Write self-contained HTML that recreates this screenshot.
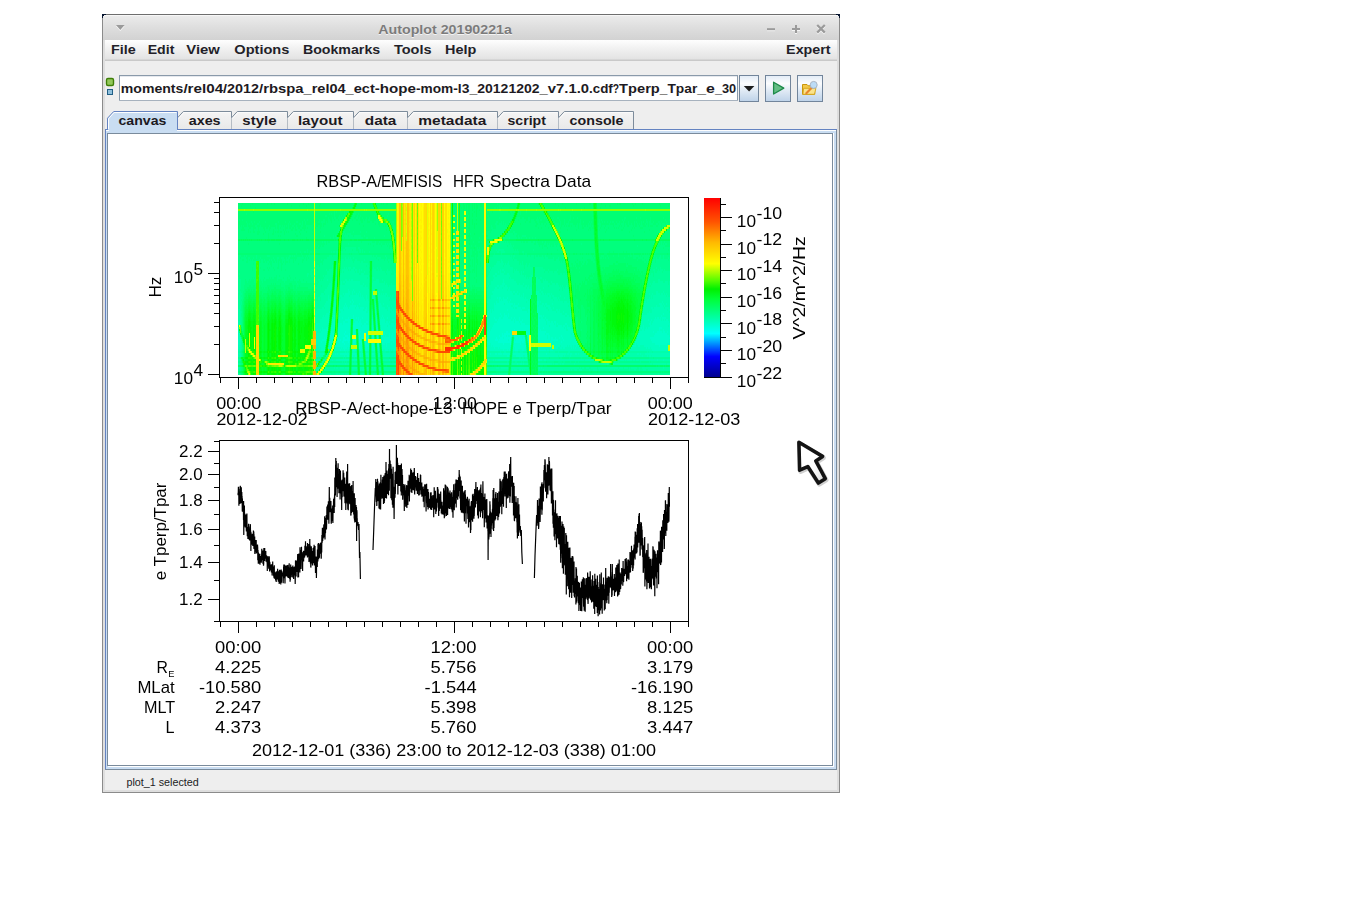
<!DOCTYPE html>
<html lang="en"><head><meta charset="utf-8"><title>Autoplot 20190221a</title>
<style>
html,body{margin:0;padding:0;background:#fff;}
body{width:1345px;height:916px;overflow:hidden;position:relative;font-family:"Liberation Sans",sans-serif;}
svg{position:absolute;left:0;top:0;display:block;}
svg text{font-family:"Liberation Sans",sans-serif;}
</style></head><body>
<svg width="1345" height="916" viewBox="0 0 1345 916">
<defs>
<linearGradient id="gTitle" x1="0" y1="0" x2="0" y2="1"><stop offset="0" stop-color="#ececec"/><stop offset="0.5" stop-color="#dedede"/><stop offset="1" stop-color="#d2d2d2"/></linearGradient>
<linearGradient id="gMenu" x1="0" y1="0" x2="0" y2="1"><stop offset="0" stop-color="#fefefe"/><stop offset="0.45" stop-color="#f1f1f1"/><stop offset="1" stop-color="#e3e3e3"/></linearGradient>
<linearGradient id="gBtn" x1="0" y1="0" x2="0" y2="1"><stop offset="0" stop-color="#e4edf7"/><stop offset="0.3" stop-color="#fbfcfe"/><stop offset="0.55" stop-color="#e3ecf6"/><stop offset="1" stop-color="#bfd3e9"/></linearGradient>
<linearGradient id="gTab" x1="0" y1="0" x2="0" y2="1"><stop offset="0" stop-color="#f4f4f4"/><stop offset="1" stop-color="#e9e9e9"/></linearGradient>
<linearGradient id="gCB" x1="0" y1="1" x2="0" y2="0">
<stop offset="0" stop-color="rgb(0,0,137)"/><stop offset="0.118" stop-color="rgb(0,0,255)"/><stop offset="0.247" stop-color="rgb(0,255,255)"/>
<stop offset="0.44" stop-color="rgb(0,255,55)"/><stop offset="0.494" stop-color="rgb(0,240,0)"/><stop offset="0.54" stop-color="rgb(83,252,0)"/>
<stop offset="0.635" stop-color="rgb(255,255,0)"/><stop offset="0.753" stop-color="rgb(255,185,0)"/><stop offset="0.867" stop-color="rgb(255,84,0)"/><stop offset="1" stop-color="rgb(255,0,0)"/>
</linearGradient>
<linearGradient id="gCur" x1="0" y1="0" x2="1" y2="1"><stop offset="0" stop-color="#fff"/><stop offset="0.6" stop-color="#fff"/><stop offset="1" stop-color="#d8d8d8"/></linearGradient>
<clipPath id="clipImg"><rect x="238" y="203" width="432" height="172"/></clipPath>
<clipPath id="clipP2"><rect x="220" y="441" width="468" height="180"/></clipPath>
<filter id="b1" x="-20%" y="-20%" width="140%" height="140%"><feGaussianBlur stdDeviation="0.6"/></filter>
<filter id="b2" x="-30%" y="-30%" width="160%" height="160%"><feGaussianBlur stdDeviation="1.5"/></filter>
<filter id="b4" x="-50%" y="-50%" width="200%" height="200%"><feGaussianBlur stdDeviation="4"/></filter>
<filter id="b8" x="-50%" y="-50%" width="200%" height="200%"><feGaussianBlur stdDeviation="8"/></filter>
</defs>
<g shape-rendering="crispEdges">
<rect x="102" y="14" width="738" height="779" fill="#8b8b8b"/>
<rect x="103" y="15" width="736" height="777" fill="#dedede"/>
<rect x="105" y="40" width="732" height="750" fill="#eeeeee"/>
<rect x="103" y="15" width="736" height="25" fill="url(#gTitle)"/>
<rect x="103" y="15" width="736" height="1" fill="#f7f7f7"/>
<rect x="102" y="14" width="738" height="1" fill="#6e6e6e"/>
<path d="M102 14h4v1h-2v1h-1v2h-1z" fill="#06142e"/>
<path d="M840 14h-4v1h2v1h1v2h1z" fill="#06142e"/>
<rect x="105" y="40" width="732" height="19" fill="url(#gMenu)"/>
<rect x="105" y="59" width="732" height="1" fill="#d6d6d6"/>
<rect x="105" y="60" width="732" height="1" fill="#c9c9c9"/>
</g>
<path d="M116 26h8.6l-4.3 5z" fill="#fbfbfb"/><path d="M116 25h8.6l-4.3 5z" fill="#9a9a9a"/>
<rect x="767" y="29.2" width="8" height="2" fill="#f6f6f6"/><rect x="767" y="28.2" width="8" height="2" fill="#9a9a9a"/>
<path d="M792 30h8M796 26v8" stroke="#f6f6f6" stroke-width="2" fill="none"/><path d="M792 29h8M796 25v8" stroke="#9a9a9a" stroke-width="2" fill="none"/>
<path d="M817.2 26l7.6 7.6M824.8 26l-7.6 7.6" stroke="#f6f6f6" stroke-width="2.2" fill="none"/><path d="M817.2 25l7.6 7.6M824.8 25l-7.6 7.6" stroke="#9a9a9a" stroke-width="2.2" fill="none"/>
<text x="378.3" y="34.6" font-size="13.3" font-weight="bold" fill="#f4f4f4" text-anchor="start" textLength="133.6" lengthAdjust="spacingAndGlyphs">Autoplot 20190221a</text>
<text x="378.3" y="33.6" font-size="13.3" font-weight="bold" fill="#7b7b7b" text-anchor="start" textLength="133.6" lengthAdjust="spacingAndGlyphs">Autoplot 20190221a</text>
<text x="111.0" y="54.0" font-size="13.3" font-weight="bold" fill="#231f29" text-anchor="start" textLength="24.7" lengthAdjust="spacingAndGlyphs">File</text>
<text x="147.7" y="54.0" font-size="13.3" font-weight="bold" fill="#231f29" text-anchor="start" textLength="26.7" lengthAdjust="spacingAndGlyphs">Edit</text>
<text x="186.3" y="54.0" font-size="13.3" font-weight="bold" fill="#231f29" text-anchor="start" textLength="33.5" lengthAdjust="spacingAndGlyphs">View</text>
<text x="234.3" y="54.0" font-size="13.3" font-weight="bold" fill="#231f29" text-anchor="start" textLength="55.1" lengthAdjust="spacingAndGlyphs">Options</text>
<text x="302.9" y="54.0" font-size="13.3" font-weight="bold" fill="#231f29" text-anchor="start" textLength="77.3" lengthAdjust="spacingAndGlyphs">Bookmarks</text>
<text x="393.9" y="54.0" font-size="13.3" font-weight="bold" fill="#231f29" text-anchor="start" textLength="37.7" lengthAdjust="spacingAndGlyphs">Tools</text>
<text x="445.1" y="54.0" font-size="13.3" font-weight="bold" fill="#231f29" text-anchor="start" textLength="31.3" lengthAdjust="spacingAndGlyphs">Help</text>
<text x="786.1" y="54.0" font-size="13.3" font-weight="bold" fill="#231f29" text-anchor="start" textLength="44.5" lengthAdjust="spacingAndGlyphs">Expert</text>
<rect x="106.5" y="78.5" width="7" height="7" rx="1.5" fill="#93c85a" stroke="#3f7f08" stroke-width="1.4"/>
<rect x="107.5" y="89.5" width="5" height="5" fill="#8fc0dc" stroke="#215f86" stroke-width="1"/>
<g shape-rendering="crispEdges">
<rect x="119" y="75" width="619" height="26" fill="#8a9aaa"/>
<rect x="120" y="76" width="617" height="24" fill="#ffffff"/>
<rect x="120" y="76" width="617" height="1" fill="#e6e9ee"/>
<rect x="119" y="100" width="619" height="1" fill="#a7b2be"/>
<rect x="739" y="75" width="20" height="27" fill="#72859b"/>
<rect x="740" y="76" width="18" height="25" fill="url(#gBtn)"/>
<rect x="765" y="75" width="26" height="27" fill="#72859b"/>
<rect x="766" y="76" width="24" height="25" fill="url(#gBtn)"/>
<rect x="797" y="75" width="26" height="27" fill="#72859b"/>
<rect x="798" y="76" width="24" height="25" fill="url(#gBtn)"/>
</g>
<path d="M743.8 86h10.6l-5.3 5.6z" fill="#1e1e1e"/>
<path d="M773.6 82.2v11.8l10.2-5.9z" fill="#63bd84" stroke="#1d8a49" stroke-width="1.3" stroke-linejoin="round"/>
<g><path d="M802.5 84.5h4.5l1.2 1.3h6.5v8.5h-12.2z" fill="#f3c94a" stroke="#c9960c" stroke-width="1"/><path d="M803.6 88.3h12.3l-1.4 6h-11.6z" fill="#fbe38a" stroke="#d4a417" stroke-width="0.9"/><path d="M806.3 93.3l5.2-5.4" stroke="#e8862b" stroke-width="2.1" stroke-linecap="round"/><circle cx="813.7" cy="84.9" r="3.5" fill="#bcdcf7" stroke="#a9b5c4" stroke-width="1"/></g>
<text x="120.8" y="92.6" font-size="13.3" font-weight="bold" fill="#1d1a22" text-anchor="start" textLength="62.6" lengthAdjust="spacingAndGlyphs">moments</text>
<text x="183.4" y="92.6" font-size="13.3" font-weight="bold" fill="#1d1a22" text-anchor="start" textLength="39.7" lengthAdjust="spacingAndGlyphs">/rel04</text>
<text x="223.1" y="92.6" font-size="13.3" font-weight="bold" fill="#1d1a22" text-anchor="start" textLength="36.0" lengthAdjust="spacingAndGlyphs">/2012</text>
<text x="259.1" y="92.6" font-size="13.3" font-weight="bold" fill="#1d1a22" text-anchor="start" textLength="44.5" lengthAdjust="spacingAndGlyphs">/rbspa</text>
<text x="303.6" y="92.6" font-size="13.3" font-weight="bold" fill="#1d1a22" text-anchor="start" textLength="42.0" lengthAdjust="spacingAndGlyphs">_rel04</text>
<text x="345.6" y="92.6" font-size="13.3" font-weight="bold" fill="#1d1a22" text-anchor="start" textLength="29.2" lengthAdjust="spacingAndGlyphs">_ect</text>
<text x="374.8" y="92.6" font-size="13.3" font-weight="bold" fill="#1d1a22" text-anchor="start" textLength="41.2" lengthAdjust="spacingAndGlyphs">-hope</text>
<text x="416.0" y="92.6" font-size="13.3" font-weight="bold" fill="#1d1a22" text-anchor="start" textLength="37.2" lengthAdjust="spacingAndGlyphs">-mom</text>
<text x="453.2" y="92.6" font-size="13.3" font-weight="bold" fill="#1d1a22" text-anchor="start" textLength="16.2" lengthAdjust="spacingAndGlyphs">-l3</text>
<text x="469.4" y="92.6" font-size="13.3" font-weight="bold" fill="#1d1a22" text-anchor="start" textLength="70.2" lengthAdjust="spacingAndGlyphs">_20121202</text>
<text x="539.6" y="92.6" font-size="13.3" font-weight="bold" fill="#1d1a22" text-anchor="start" textLength="49.4" lengthAdjust="spacingAndGlyphs">_v7.1.0</text>
<text x="589.0" y="92.6" font-size="13.3" font-weight="bold" fill="#1d1a22" text-anchor="start" textLength="23.8" lengthAdjust="spacingAndGlyphs">.cdf</text>
<text x="612.8" y="92.6" font-size="13.3" font-weight="bold" fill="#1d1a22" text-anchor="start" textLength="6.3" lengthAdjust="spacingAndGlyphs">?</text>
<text x="619.1" y="92.6" font-size="13.3" font-weight="bold" fill="#1d1a22" text-anchor="start" textLength="40.7" lengthAdjust="spacingAndGlyphs">Tperp</text>
<text x="659.8" y="92.6" font-size="13.3" font-weight="bold" fill="#1d1a22" text-anchor="start" textLength="37.5" lengthAdjust="spacingAndGlyphs">_Tpar</text>
<text x="697.3" y="92.6" font-size="13.3" font-weight="bold" fill="#1d1a22" text-anchor="start" textLength="17.6" lengthAdjust="spacingAndGlyphs">_e</text>
<text x="714.9" y="92.6" font-size="13.3" font-weight="bold" fill="#1d1a22" text-anchor="start" textLength="21.3" lengthAdjust="spacingAndGlyphs">_30</text>
<path d="M177.5 129.5V117.8l5.8-6.3H231.5V129.5Z" fill="url(#gTab)" stroke="none"/>
<path d="M177.5 117.8l5.8-6.3H231.5V129.5" fill="none" stroke="#7d8c9b" stroke-width="1"/>
<path d="M178.5 118.6l5.3-6.1H230.5" fill="none" stroke="#fbfbfb" stroke-width="1"/>
<path d="M231.5 129.5V117.8l5.8-6.3H287.5V129.5Z" fill="url(#gTab)" stroke="none"/>
<path d="M231.5 117.8l5.8-6.3H287.5V129.5" fill="none" stroke="#7d8c9b" stroke-width="1"/>
<path d="M232.5 118.6l5.3-6.1H286.5" fill="none" stroke="#fbfbfb" stroke-width="1"/>
<path d="M287.5 129.5V117.8l5.8-6.3H353.5V129.5Z" fill="url(#gTab)" stroke="none"/>
<path d="M287.5 117.8l5.8-6.3H353.5V129.5" fill="none" stroke="#7d8c9b" stroke-width="1"/>
<path d="M288.5 118.6l5.3-6.1H352.5" fill="none" stroke="#fbfbfb" stroke-width="1"/>
<path d="M353.5 129.5V117.8l5.8-6.3H407.5V129.5Z" fill="url(#gTab)" stroke="none"/>
<path d="M353.5 117.8l5.8-6.3H407.5V129.5" fill="none" stroke="#7d8c9b" stroke-width="1"/>
<path d="M354.5 118.6l5.3-6.1H406.5" fill="none" stroke="#fbfbfb" stroke-width="1"/>
<path d="M407.5 129.5V117.8l5.8-6.3H497.5V129.5Z" fill="url(#gTab)" stroke="none"/>
<path d="M407.5 117.8l5.8-6.3H497.5V129.5" fill="none" stroke="#7d8c9b" stroke-width="1"/>
<path d="M408.5 118.6l5.3-6.1H496.5" fill="none" stroke="#fbfbfb" stroke-width="1"/>
<path d="M497.5 129.5V117.8l5.8-6.3H558.5V129.5Z" fill="url(#gTab)" stroke="none"/>
<path d="M497.5 117.8l5.8-6.3H558.5V129.5" fill="none" stroke="#7d8c9b" stroke-width="1"/>
<path d="M498.5 118.6l5.3-6.1H557.5" fill="none" stroke="#fbfbfb" stroke-width="1"/>
<path d="M558.5 129.5V117.8l5.8-6.3H633.5V129.5Z" fill="url(#gTab)" stroke="none"/>
<path d="M558.5 117.8l5.8-6.3H633.5V129.5" fill="none" stroke="#7d8c9b" stroke-width="1"/>
<path d="M559.5 118.6l5.3-6.1H632.5" fill="none" stroke="#fbfbfb" stroke-width="1"/>
<g shape-rendering="crispEdges">
<rect x="105" y="129" width="732" height="641" fill="#7a8b9c"/>
<rect x="105" y="129" width="731" height="640" fill="#c9ddf2"/>
<rect x="105" y="129" width="1" height="640" fill="#6483c1"/>
<rect x="105" y="129" width="732" height="1" fill="#6483c1"/>
<rect x="106" y="130" width="730" height="1" fill="#fdfeff"/>
<rect x="107" y="133" width="726" height="633" fill="#7a8b9c"/>
<rect x="108" y="134" width="724" height="631" fill="#ffffff"/>
<rect x="833" y="133" width="1" height="634" fill="#ffffff"/>
<rect x="108" y="766" width="726" height="1" fill="#ffffff"/>
<rect x="106" y="131" width="1" height="638" fill="#c9ddf2"/>
</g>
<path d="M107.5 130V118.2l6.2-6.7H177.5V130" fill="#c9ddf2" stroke="#6483c1" stroke-width="1"/>
<path d="M108.5 130V118.8l5.6-6.3H176.5" fill="none" stroke="#fdfeff" stroke-width="1"/>
<rect x="108" y="129" width="69" height="3" fill="#c9ddf2"/>
<rect x="108" y="130" width="1" height="1" fill="#fdfeff"/>
<text x="118.5" y="124.6" font-size="13.3" font-weight="bold" fill="#1d1a22" text-anchor="start" textLength="47.9" lengthAdjust="spacingAndGlyphs">canvas</text>
<text x="188.7" y="124.6" font-size="13.3" font-weight="bold" fill="#1d1a22" text-anchor="start" textLength="31.9" lengthAdjust="spacingAndGlyphs">axes</text>
<text x="242.3" y="124.6" font-size="13.3" font-weight="bold" fill="#1d1a22" text-anchor="start" textLength="34.2" lengthAdjust="spacingAndGlyphs">style</text>
<text x="297.9" y="124.6" font-size="13.3" font-weight="bold" fill="#1d1a22" text-anchor="start" textLength="44.6" lengthAdjust="spacingAndGlyphs">layout</text>
<text x="364.8" y="124.6" font-size="13.3" font-weight="bold" fill="#1d1a22" text-anchor="start" textLength="31.6" lengthAdjust="spacingAndGlyphs">data</text>
<text x="418.3" y="124.6" font-size="13.3" font-weight="bold" fill="#1d1a22" text-anchor="start" textLength="68.0" lengthAdjust="spacingAndGlyphs">metadata</text>
<text x="507.5" y="124.6" font-size="13.3" font-weight="bold" fill="#1d1a22" text-anchor="start" textLength="38.4" lengthAdjust="spacingAndGlyphs">script</text>
<text x="569.6" y="124.6" font-size="13.3" font-weight="bold" fill="#1d1a22" text-anchor="start" textLength="53.9" lengthAdjust="spacingAndGlyphs">console</text>
<text x="126.4" y="785.6" font-size="10.6" fill="#1c1c24" text-anchor="start" textLength="72.4" lengthAdjust="spacingAndGlyphs">plot_1 selected</text>
<g opacity="0.999">
<g clip-path="url(#clipImg)">
<g shape-rendering="crispEdges" fill="none" stroke-width="1" transform="translate(0.5,0)">
<path stroke="rgb(0,255,116)" d="M238 203v6M238 211v18M238 253v2M238 325v2M239 203v6M239 211v8M239 221v4M239 253v2M239 371v2M240 203v6M240 211v16M240 253v2M240 357v2M241 203v2M241 207v2M241 211v14M241 229v2M241 253v2M241 361v2M242 205v4M242 211v8M242 221v10M242 253v2M242 341v2M242 363v2M242 367v4M242 373v2M243 203v6M243 211v14M243 227v4M243 253v2M243 299v6M244 203v6M244 211v16M244 229v2M244 253v2M244 293v4M245 203v6M245 211v16M245 253v2M245 289v4M246 203v6M246 211v2M246 215v6M246 223v4M246 237v2M246 253v2M246 289v2M247 203v6M247 211v12M247 253v2M247 287v4M248 203v6M248 211v16M248 229v4M248 243v2M248 253v2M248 287v2M249 203v6M249 211v12M249 225v4M249 253v2M249 285v4M250 203v2M250 207v2M250 211v18M250 231v2M250 253v2M250 285v6M251 203v6M251 211v10M251 223v4M251 253v2M251 287v2M252 205v4M252 211v12M252 225v2M252 253v2M252 287v4M253 203v6M253 213v20M253 253v2M253 285v4M254 203v6M254 211v10M254 223v6M254 231v2M254 253v2M254 285v4M255 203v4M255 211v14M255 227v2M255 253v2M255 287v4M256 203v6M256 211v14M256 253v2M257 203v6M257 211v12M257 225v2M257 231v4M257 253v2M258 203v6M258 211v12M258 225v10M258 253v2M259 203v6M259 211v10M259 223v4M259 231v2M259 253v2M259 287v6M260 203v6M260 211v14M260 253v2M260 285v6M261 203v6M261 211v16M261 253v2M261 287v4M262 203v6M262 211v16M262 253v2M262 289v6M263 203v6M263 211v18M263 233v2M263 253v2M263 287v6M264 203v6M264 211v20M264 253v2M264 289v4M265 203v6M265 211v10M265 223v4M265 231v2M265 253v2M265 287v6M266 203v6M266 211v18M266 253v2M266 287v6M267 205v4M267 211v18M267 253v2M267 285v6M268 203v6M268 211v16M268 233v6M268 241v2M268 253v2M268 285v2M269 203v6M269 211v14M269 227v4M269 253v2M269 285v4M270 203v6M270 211v18M270 253v2M270 285v6M271 205v4M271 211v16M271 253v2M271 283v6M272 203v6M272 211v16M272 233v2M272 253v2M272 285v4M273 203v6M273 211v16M273 229v6M273 253v2M273 283v6M274 205v4M274 211v16M274 253v2M274 285v2M275 203v6M275 211v12M275 225v4M275 231v2M275 253v2M275 283v4M276 203v6M276 211v12M276 253v2M276 285v4M277 203v6M277 211v18M277 231v2M277 253v2M277 285v4M278 203v6M278 211v10M278 223v10M278 235v2M278 253v2M278 285v4M279 203v6M279 211v14M279 243v2M279 253v2M279 285v4M280 203v6M280 211v14M280 227v2M280 231v2M280 235v2M280 253v2M280 283v6M281 203v6M281 211v16M281 231v2M281 253v2M281 287v4M282 203v6M282 211v14M282 253v2M282 287v4M283 203v6M283 211v16M283 229v2M283 253v2M283 287v6M284 203v6M284 211v14M284 231v4M284 253v2M284 289v6M285 203v6M285 211v10M285 223v8M285 253v2M285 285v6M286 203v6M286 211v14M286 227v2M286 231v2M286 253v2M286 285v4M287 205v4M287 211v18M287 253v2M287 285v6M288 203v6M288 211v12M288 231v2M288 253v2M288 285v2M289 203v6M289 211v10M289 223v6M289 253v2M289 283v4M290 203v6M290 211v12M290 225v4M290 253v2M290 283v6M291 203v2M291 207v2M291 211v16M291 229v2M291 253v2M291 283v6M292 203v6M292 211v14M292 227v4M292 253v2M292 285v4M293 203v6M293 211v14M293 227v2M293 253v2M293 289v2M294 203v6M294 211v12M294 225v2M294 253v2M294 285v6M295 203v6M295 211v20M295 233v2M295 253v2M295 285v6M296 203v6M296 211v10M296 223v2M296 229v2M296 235v2M296 289v4M297 203v6M297 211v10M297 223v4M297 235v2M297 253v2M297 287v4M298 203v6M298 211v18M298 253v2M298 287v4M299 203v2M299 207v2M299 211v12M299 225v4M299 231v2M299 253v2M299 285v6M300 203v6M300 211v12M300 225v2M300 229v2M300 233v2M300 253v2M300 287v4M301 203v6M301 211v14M301 229v2M301 287v4M302 203v6M302 211v10M302 227v2M302 253v2M302 287v4M303 205v4M303 211v18M303 253v2M303 287v6M304 203v6M304 211v8M304 221v10M304 253v2M304 287v4M305 203v6M305 211v10M305 225v4M305 253v2M305 287v4M306 203v2M306 207v2M306 211v14M306 231v2M306 237v2M306 253v2M306 287v4M307 203v6M307 211v8M307 221v4M307 227v2M307 253v2M307 287v4M308 205v4M308 211v14M308 253v2M308 289v2M309 203v6M309 211v14M309 289v2M310 203v6M310 211v14M310 253v2M310 289v4M311 203v6M311 211v14M311 253v2M311 289v2M312 203v6M312 211v14M312 229v2M312 233v2M312 253v2M312 287v2M313 203v6M313 211v6M313 219v4M313 225v2M313 253v2M313 287v4M315 203v6M315 211v12M315 227v2M315 253v2M316 203v6M316 211v16M316 253v2M317 203v6M317 211v16M317 253v2M318 203v6M318 211v10M318 223v2M318 253v2M319 203v2M319 207v2M319 211v8M319 223v2M319 253v2M320 205v4M320 211v18M320 231v2M320 367v2M321 203v6M321 211v10M321 223v4M322 203v6M322 211v10M323 203v6M323 211v8M323 223v4M324 203v6M324 211v8M324 223v2M324 357v2M325 203v6M325 211v4M325 217v8M326 203v6M326 211v4M326 217v4M327 203v6M327 211v12M327 333v2M328 203v6M328 211v6M328 325v2M329 203v6M329 211v2M329 215v4M329 337v2M330 203v6M330 211v10M330 365v2M331 203v6M331 211v2M331 215v8M331 293v2M331 365v2M332 203v6M332 211v6M332 279v2M332 313v2M332 365v2M333 203v6M333 211v8M333 261v2M334 203v6M334 219v2M334 365v2M335 203v6M335 211v6M335 277v2M335 315v2M335 365v2M336 203v6M336 213v6M336 261v2M336 289v2M337 203v6M337 211v8M337 259v2M337 365v2M338 203v6M338 211v6M338 219v2M338 365v2M339 203v6M339 211v4M339 291v2M339 365v2M340 203v6M340 211v6M340 267v2M340 365v2M341 203v6M341 211v4M341 217v2M341 245v2M341 365v2M342 203v6M342 211v6M342 365v2M343 203v6M343 211v4M343 217v2M343 365v2M344 203v6M344 365v2M345 203v6M345 211v4M345 365v2M346 203v6M346 211v2M346 365v2M347 203v6M347 211v2M347 365v2M348 203v6M348 365v2M349 203v6M349 359v2M350 203v6M350 333v2M351 203v6M351 217v2M351 371v2M352 203v4M352 215v2M352 219v2M352 333v2M352 365v2M353 203v2M353 365v2M354 211v2M354 217v2M354 365v2M355 211v2M355 215v4M355 365v2M356 207v2M356 211v6M356 219v2M356 341v2M356 365v2M357 203v6M357 211v4M357 219v2M357 367v2M358 203v6M358 211v2M358 215v4M358 341v2M359 203v6M359 211v6M359 223v2M360 203v6M360 211v4M360 217v4M360 365v2M361 205v4M361 211v12M361 365v2M362 203v6M362 211v6M362 219v4M362 345v2M362 365v2M363 203v6M363 211v8M363 225v2M363 365v2M364 203v6M364 211v10M364 345v2M365 203v6M365 211v8M366 203v6M366 211v6M366 367v2M367 203v6M367 211v12M367 365v2M368 203v6M368 211v8M368 221v2M368 371v2M369 203v6M369 211v6M369 221v2M369 303v18M370 203v6M370 211v10M371 203v6M371 211v10M371 319v6M371 371v2M372 205v4M372 211v12M372 365v2M373 207v2M373 211v12M373 323v2M373 365v2M374 211v4M374 217v4M374 305v2M374 337v2M374 365v2M375 213v8M375 223v2M375 321v2M375 353v2M375 365v2M376 203v2M376 215v4M376 337v2M377 203v4M377 219v2M377 293v2M377 351v2M378 203v6M378 219v6M378 307v2M379 203v6M379 221v6M379 319v2M379 345v2M379 365v2M380 203v6M380 211v2M381 205v4M381 211v4M382 203v6M382 211v6M382 355v2M383 205v4M383 211v6M383 225v2M383 367v2M384 203v6M384 211v8M385 203v6M385 211v8M385 223v4M386 205v4M386 211v8M386 223v2M386 229v2M386 365v2M387 205v4M387 211v4M387 217v2M388 203v6M388 211v2M388 215v6M389 203v6M389 211v10M390 203v6M390 211v12M390 253v2M391 203v6M391 211v12M392 203v6M392 211v10M392 223v4M392 249v2M393 203v6M393 211v10M394 203v6M394 211v14M394 235v2M395 203v6M395 211v14M451 203v4M451 209v2M451 213v34M451 249v8M451 287v4M453 203v2M453 207v8M453 217v4M453 223v4M453 229v4M453 235v4M453 241v4M453 247v4M453 253v2M453 259v2M453 289v2M454 205v10M454 217v4M454 223v4M454 229v4M454 235v4M454 241v4M454 249v2M454 253v2M454 259v2M454 289v2M455 207v24M455 233v2M455 237v8M455 247v2M455 251v2M455 259v2M455 287v4M456 205v2M456 209v6M456 217v14M456 235v2M456 241v2M456 247v2M456 253v2M456 289v2M457 253v2M457 259v2M457 265v2M457 271v2M457 277v2M458 205v2M458 211v20M458 235v2M458 241v2M458 247v2M458 253v2M458 259v2M458 265v2M460 203v2M460 207v30M460 239v2M460 243v4M460 287v4M461 203v4M461 209v38M461 251v4M461 287v4M462 203v46M462 259v2M462 287v4M463 225v2M463 229v2M463 235v2M463 239v30M463 283v6M464 203v2M464 209v2M464 215v2M464 221v2M464 227v2M464 233v2M464 239v2M464 245v2M464 251v2M464 257v2M464 287v2M465 203v8M465 215v2M465 221v2M465 227v2M465 233v2M465 239v2M465 245v2M465 251v2M465 287v2M466 227v48M466 277v4M466 283v6M467 205v10M467 217v38M467 287v2M468 215v4M468 221v6M468 229v6M468 237v48M469 231v2M469 241v2M469 245v44M470 203v30M470 235v14M470 259v2M470 265v2M470 271v2M470 287v4M471 203v34M471 239v6M471 247v2M471 255v2M471 289v2M472 211v2M472 217v2M472 225v32M472 259v8M472 269v4M472 285v4M473 203v38M473 243v6M473 251v6M473 269v2M473 287v2M474 209v2M474 213v10M474 229v4M474 235v12M474 249v24M474 277v2M474 285v4M475 203v42M475 247v4M475 253v2M475 287v6M476 217v2M476 221v2M476 225v38M476 265v12M476 279v4M476 287v2M477 203v2M477 209v38M477 251v6M477 259v6M477 287v4M478 203v38M478 243v6M478 287v4M479 203v6M479 211v26M479 239v2M479 243v4M479 251v2M479 287v4M480 207v12M480 221v32M480 255v4M480 261v6M480 287v2M481 207v34M481 243v10M481 255v2M481 287v4M482 203v30M482 235v12M482 251v4M482 267v2M482 273v2M482 289v2M483 203v30M483 235v14M483 251v2M483 255v2M483 287v4M486 225v2M486 231v4M486 237v4M486 243v10M486 263v24M487 203v6M487 213v2M487 217v2M487 365v2M488 203v6M488 211v4M488 245v2M489 203v6M489 213v4M489 257v2M490 203v6M491 203v6M491 247v2M492 203v6M492 211v2M492 365v2M493 203v6M494 203v4M494 365v2M495 203v4M495 365v2M496 203v6M496 365v2M497 205v2M498 203v6M498 365v2M499 203v2M499 365v2M500 203v4M500 365v2M501 203v2M501 207v2M501 365v2M502 203v4M502 365v2M503 203v4M503 365v2M504 203v4M504 239v2M504 365v2M505 203v4M505 365v2M506 203v4M506 365v2M507 203v4M507 365v2M508 203v4M508 211v2M508 365v2M509 203v6M509 211v2M509 361v4M510 203v6M510 213v2M510 353v2M510 369v4M511 203v6M511 365v2M512 203v6M512 211v2M512 365v2M513 203v6M513 213v2M513 223v2M513 365v2M514 203v6M514 211v2M514 365v2M515 203v6M515 221v2M515 365v2M516 203v4M516 217v2M516 365v2M517 215v2M517 365v2M518 211v2M518 215v2M518 219v2M518 365v2M519 211v6M519 365v2M520 205v4M520 215v4M520 223v2M520 365v2M521 203v6M521 211v8M521 365v2M522 203v6M522 211v6M522 365v2M523 203v6M523 211v6M523 365v2M524 203v6M524 211v8M524 365v2M525 203v6M525 211v8M525 221v2M525 337v2M525 365v2M526 203v6M526 213v8M526 345v2M526 365v2M527 203v6M527 211v10M527 341v2M527 353v2M527 365v2M528 203v6M528 211v6M528 349v2M529 203v6M529 211v6M529 221v2M529 357v2M529 369v4M530 203v6M530 211v12M531 203v6M531 211v8M532 203v6M532 211v8M533 203v6M533 211v8M534 203v6M534 211v10M535 203v6M535 211v12M535 225v2M536 203v6M536 211v8M536 221v6M537 203v6M537 211v6M537 223v2M538 205v4M538 211v8M538 227v2M538 365v2M539 205v4M539 211v6M539 219v4M540 207v2M540 211v8M540 221v4M540 365v2M541 211v8M541 221v2M541 227v2M541 365v2M542 211v12M542 365v2M543 203v2M543 213v12M544 203v4M544 219v4M544 365v2M545 203v6M545 215v8M545 225v2M545 365v2M546 203v6M546 219v2M546 223v2M546 365v2M547 203v6M547 219v2M547 253v2M548 203v6M548 211v2M548 221v2M548 227v2M549 203v6M549 211v4M549 223v2M550 203v6M550 211v6M551 203v6M551 211v8M551 227v2M551 253v2M552 203v6M552 211v8M553 203v6M553 211v6M553 219v2M554 203v6M554 211v10M554 223v2M555 205v4M555 211v12M556 203v6M556 211v12M557 203v6M557 211v6M557 219v4M558 203v2M558 207v2M558 211v6M558 219v4M558 225v2M559 203v6M559 211v8M559 221v4M560 203v6M560 211v10M560 227v2M560 231v2M561 203v6M561 211v16M561 253v2M562 205v4M562 211v14M563 203v6M563 211v14M564 203v6M564 211v8M564 225v2M565 203v4M565 211v14M565 263v2M566 203v6M566 211v12M566 225v2M567 203v6M567 211v12M567 229v2M567 253v4M567 277v2M568 203v6M568 211v10M568 225v2M568 253v2M568 257v4M569 203v6M569 211v8M569 221v6M569 255v2M569 261v2M569 295v2M570 203v6M570 211v4M570 221v2M570 253v2M570 267v6M571 203v6M571 211v12M571 225v2M571 253v2M571 263v2M571 267v2M571 271v10M572 203v6M572 211v12M572 253v2M572 263v26M573 203v6M573 211v6M573 219v6M573 267v18M574 203v6M574 211v14M574 265v30M574 301v8M575 203v6M575 211v16M575 253v2M575 261v2M575 267v16M575 305v2M575 313v2M575 319v2M576 205v4M576 211v14M576 229v2M576 263v4M576 269v20M576 299v18M577 203v6M577 211v6M577 219v4M577 253v2M577 259v2M577 263v22M577 299v6M577 307v10M578 203v6M578 211v18M578 253v2M578 265v20M578 309v2M578 313v24M579 203v6M579 211v12M579 253v2M579 261v6M579 269v2M579 273v10M579 285v6M579 309v30M580 203v6M580 211v8M580 261v22M580 285v2M580 319v2M580 323v8M580 337v2M581 203v6M581 211v14M581 253v2M581 263v2M581 267v18M581 305v16M581 323v6M581 331v12M582 203v6M582 211v18M582 257v2M582 261v2M582 265v16M582 305v40M583 203v6M583 211v10M583 223v2M583 227v2M583 253v2M583 265v18M583 307v38M584 203v4M584 211v16M584 253v2M584 263v18M584 309v36M585 203v6M585 211v16M585 253v2M585 261v16M585 281v4M585 317v26M586 203v6M586 211v14M586 265v14M586 281v4M586 315v6M586 325v8M586 335v2M586 339v4M587 203v6M587 211v16M587 253v2M587 259v2M587 263v16M588 203v6M588 211v12M588 229v2M588 259v18M588 279v2M589 205v4M589 211v10M589 223v2M589 227v2M589 253v2M589 259v16M590 205v4M590 211v12M590 227v4M590 253v2M590 259v16M590 277v2M591 203v6M591 211v10M591 223v4M591 261v12M591 277v2M591 371v2M592 203v6M592 211v6M592 219v6M592 227v2M592 255v2M592 261v14M592 277v2M593 229v6M593 257v2M593 263v10M593 275v2M594 249v2M594 253v4M594 259v2M594 263v10M595 263v8M597 203v4M597 371v2M598 203v6M598 211v12M598 225v2M598 237v2M599 203v6M599 211v8M599 229v2M600 203v4M600 211v12M600 227v2M600 255v2M600 259v6M601 205v4M601 211v8M601 221v6M601 259v12M602 203v6M602 211v10M602 223v2M602 257v10M602 269v2M603 203v6M603 211v14M603 259v8M604 203v6M604 211v10M604 223v2M604 227v2M604 253v16M605 203v2M605 207v2M605 211v16M605 231v2M605 253v4M605 259v8M606 203v6M606 211v14M606 229v2M606 253v14M607 203v6M607 211v10M607 223v2M607 257v10M608 203v6M608 211v14M608 227v2M608 255v2M608 259v8M609 203v2M609 207v2M609 211v12M609 251v2M609 255v10M609 363v2M609 371v2M610 203v2M610 207v2M610 211v10M610 223v2M610 255v10M611 203v6M611 211v14M611 255v10M612 203v6M612 211v10M612 223v2M612 255v10M613 203v6M613 211v10M613 223v4M613 251v2M613 257v6M614 203v6M614 211v12M614 227v2M614 255v8M615 203v6M615 211v14M615 255v10M616 203v6M616 211v10M616 223v2M616 227v2M616 255v6M616 263v2M617 205v4M617 211v12M617 255v6M617 263v2M618 203v6M618 211v12M618 227v2M618 253v2M618 257v6M619 205v4M619 211v10M619 225v2M619 255v8M620 205v4M620 211v14M620 255v8M621 203v6M621 211v12M621 225v2M621 229v2M621 255v8M622 203v6M622 211v8M622 221v2M622 229v2M622 255v8M623 203v6M623 211v10M623 227v2M623 251v2M623 255v8M624 203v6M624 211v6M624 221v6M624 255v2M624 259v4M625 203v6M625 211v6M625 219v4M625 255v8M626 203v6M626 211v14M626 251v2M626 255v12M627 203v6M627 211v16M627 255v8M627 265v2M628 203v6M628 211v10M628 225v2M628 257v8M629 203v6M629 211v14M629 231v2M629 255v10M630 203v6M630 211v14M630 253v2M630 257v8M631 203v6M631 211v12M631 229v2M631 257v8M632 205v4M632 211v14M632 227v2M632 255v12M633 203v2M633 207v2M633 211v16M633 235v2M633 253v2M633 259v8M634 203v6M634 211v10M634 227v2M634 259v8M634 269v2M635 205v4M635 211v16M635 259v8M636 203v6M636 211v6M636 219v2M636 223v4M636 257v10M637 203v6M637 211v12M637 257v2M637 261v10M638 203v6M638 211v14M638 259v10M639 203v6M639 211v12M639 225v2M639 255v2M639 259v12M640 203v6M640 211v6M640 219v6M640 227v2M640 259v14M641 203v6M641 211v10M641 227v2M641 253v4M641 259v12M641 273v2M642 205v4M642 211v14M642 227v2M642 261v10M643 203v6M643 211v10M643 223v4M643 257v2M643 261v14M644 203v6M644 211v16M644 231v2M644 253v2M644 263v10M645 203v6M645 211v12M645 225v2M645 259v2M645 263v10M646 203v6M646 211v8M646 223v2M646 253v2M646 261v8M646 287v2M647 203v6M647 211v10M648 203v6M648 211v16M648 253v2M649 203v6M649 211v10M649 229v2M650 203v6M650 211v6M650 225v2M651 203v6M651 211v12M651 225v2M652 203v6M652 211v12M652 225v2M653 203v6M653 211v10M653 223v2M654 203v6M654 211v14M655 203v6M655 211v14M656 203v6M656 211v12M656 225v2M656 365v2M657 203v6M657 211v12M657 225v2M658 203v6M658 211v10M658 223v2M658 365v2M659 205v4M659 211v10M659 365v2M660 203v2M660 207v2M660 211v12M661 203v6M661 211v10M661 223v6M662 203v6M662 211v12M663 203v6M663 211v6M663 219v4M663 365v2M664 203v6M664 211v12M665 203v6M665 211v8M665 221v4M665 365v2M666 203v6M666 211v10M667 203v6M667 211v12M667 253v2M668 203v2M668 207v2M668 211v14M669 203v6M669 211v8M669 221v4M669 365v2"/>
<path stroke="rgb(142,255,0)" d="M238 209v2M239 209v2M239 327v2M240 209v2M241 209v2M242 209v2M243 209v2M245 209v2M246 209v2M247 209v2M247 371v2M248 209v2M249 209v2M249 371v2M250 209v2M251 209v2M252 209v2M254 209v2M255 209v2M256 209v2M257 209v2M258 209v2M259 209v2M260 209v2M261 209v2M262 209v2M263 209v2M264 209v2M265 209v2M266 209v2M266 363v2M267 209v2M267 363v2M268 209v2M269 209v2M270 209v2M271 209v2M272 209v2M273 209v2M274 209v2M275 209v2M276 209v2M277 209v2M278 209v2M278 365v2M279 209v2M280 209v2M281 209v2M282 209v2M282 365v2M283 209v2M284 209v2M285 209v2M286 209v2M287 209v2M288 209v2M289 209v2M290 209v2M291 209v2M292 209v2M293 209v2M294 209v2M295 209v2M296 209v2M297 209v2M298 209v2M299 209v2M300 209v2M301 209v2M302 209v2M303 209v2M303 361v2M304 209v2M305 209v2M306 209v2M308 209v2M309 209v2M310 209v2M311 209v2M312 209v2M312 365v2M313 209v2M315 209v2M316 209v2M316 373v2M317 209v2M318 209v2M319 209v2M320 209v2M321 209v2M322 209v2M323 209v2M324 209v2M325 209v2M326 209v2M326 359v2M327 209v2M327 357v2M328 209v2M328 355v2M329 209v2M330 209v2M331 209v2M332 209v2M333 209v2M334 209v2M335 209v2M336 209v2M337 209v2M338 209v2M339 209v2M341 209v2M342 209v2M343 209v2M344 209v2M345 209v2M346 209v2M347 209v2M348 209v2M349 209v2M350 209v2M351 209v2M352 209v2M353 209v2M354 209v2M355 209v2M356 209v2M357 209v2M358 209v2M359 209v2M360 209v2M361 209v2M362 209v2M363 209v2M365 209v2M367 209v2M368 209v2M369 209v2M370 209v2M371 209v2M372 209v2M373 209v2M374 209v2M375 209v2M376 209v2M377 209v2M378 209v2M379 209v2M380 209v2M381 209v2M381 217v2M382 209v2M383 209v2M384 209v2M385 209v2M386 209v2M387 209v2M388 209v2M389 209v2M390 209v2M391 209v2M392 209v2M393 209v2M394 209v2M395 209v2M396 257v2M450 251v2M450 261v2M450 273v2M450 279v2M450 371v2M451 357v2M458 295v2M462 293v2M464 351v2M478 335v2M487 209v2M488 209v2M489 209v2M490 209v2M491 209v2M492 209v2M493 209v2M494 209v2M495 209v2M496 209v2M497 209v2M498 209v2M501 209v2M501 237v2M502 209v2M503 209v2M504 209v2M505 209v2M506 209v2M507 209v2M508 209v2M509 209v2M510 209v2M511 209v2M512 209v2M513 209v2M514 209v2M515 209v2M517 209v2M519 209v2M520 209v2M521 209v2M522 209v2M523 209v2M524 209v2M525 209v2M527 209v2M528 209v2M529 209v2M530 209v2M531 209v2M532 209v2M533 209v2M534 209v2M535 209v2M537 209v2M538 209v2M539 209v2M540 209v2M541 209v2M542 209v2M543 209v2M544 209v2M545 209v2M546 209v2M547 209v2M548 209v2M549 209v2M550 209v2M551 209v2M552 209v2M553 209v2M554 209v2M555 209v2M556 209v2M557 209v2M559 209v2M560 243v2M561 209v2M562 209v2M563 209v2M564 209v2M565 209v2M566 209v2M566 255v2M567 209v2M568 209v2M569 209v2M570 209v2M571 209v2M573 209v2M574 209v2M575 209v2M576 209v2M577 209v2M578 209v2M579 209v2M580 209v2M582 209v2M583 209v2M584 209v2M585 209v2M586 209v2M587 209v2M588 209v2M589 209v2M590 209v2M591 209v2M592 209v2M593 209v2M594 209v2M595 209v2M596 209v2M597 209v2M598 209v2M599 209v2M600 209v2M601 209v2M602 209v2M603 209v2M604 209v2M605 209v2M606 209v2M607 209v2M608 209v2M609 209v2M610 209v2M611 209v2M612 209v2M613 209v2M614 209v2M615 209v2M616 209v2M617 209v2M618 209v2M619 209v2M620 209v2M621 209v2M622 209v2M623 209v2M624 209v2M625 209v2M626 209v2M627 209v2M628 209v2M629 209v2M630 209v2M631 209v2M632 209v2M633 209v2M634 209v2M635 209v2M636 209v2M637 209v2M638 209v2M639 209v2M640 209v2M641 209v2M642 209v2M643 209v2M644 209v2M646 209v2M647 209v2M648 209v2M649 209v2M650 209v2M651 209v2M652 209v2M653 209v2M654 209v2M655 209v2M656 209v2M657 209v2M658 209v2M659 209v2M660 209v2M661 209v2M662 209v2M663 209v2M664 209v2M665 209v2M666 209v2M667 209v2M668 209v2M669 209v2"/>
<path stroke="rgb(0,255,125)" d="M238 229v10M238 241v12M238 371v2M239 219v2M239 225v14M239 241v12M240 227v12M240 241v12M240 257v2M240 335v2M241 225v4M241 231v8M241 241v12M241 255v2M241 325v2M241 369v2M241 373v2M242 219v2M242 231v8M242 241v12M242 255v2M242 259v2M242 301v30M242 345v2M242 349v2M242 353v4M243 225v2M243 231v8M243 241v12M243 255v2M243 259v2M243 291v8M244 227v2M244 231v8M244 241v12M244 285v8M245 227v12M245 241v12M245 255v2M245 279v10M246 213v2M246 221v2M246 227v10M246 241v12M246 257v2M246 261v2M246 281v8M247 223v16M247 241v12M247 255v8M247 283v4M248 227v2M248 233v6M248 241v2M248 245v8M248 255v2M248 281v6M249 223v2M249 229v10M249 241v12M249 255v2M249 259v2M249 279v6M250 229v2M250 233v6M250 241v12M250 255v4M250 281v4M251 221v2M251 227v12M251 241v12M251 255v6M251 279v8M252 223v2M252 227v12M252 241v12M252 255v4M252 267v4M252 277v10M253 233v6M253 241v12M253 255v2M253 259v2M253 263v2M253 279v6M254 221v2M254 229v2M254 233v6M254 241v12M254 255v6M254 277v2M254 283v2M255 225v2M255 229v10M255 241v12M255 255v6M255 279v8M256 225v14M256 241v12M256 259v2M257 223v2M257 227v4M257 235v4M257 241v12M257 255v6M258 223v2M258 235v4M258 241v12M258 255v6M259 221v2M259 227v4M259 233v6M259 241v12M259 255v4M259 281v6M260 225v14M260 241v12M260 255v2M260 259v4M260 267v2M260 279v6M261 227v12M261 241v12M261 255v4M261 281v6M262 227v12M262 241v12M262 255v4M262 283v6M263 229v4M263 235v4M263 241v12M263 255v8M263 269v2M263 279v8M264 231v8M264 241v12M264 255v4M264 261v2M264 269v2M264 277v2M264 281v8M265 221v2M265 227v4M265 233v6M265 241v12M265 255v6M265 281v6M266 229v10M266 241v12M266 255v8M266 279v8M267 229v10M267 241v12M267 257v4M267 267v2M267 279v6M268 227v6M268 243v10M268 257v4M268 263v2M268 269v2M268 279v6M269 225v2M269 231v8M269 241v12M269 257v2M269 261v2M269 267v2M269 277v8M270 229v10M270 241v12M270 255v10M270 279v6M271 227v12M271 241v12M271 255v4M271 261v6M271 277v6M272 227v6M272 235v4M272 241v12M272 255v6M272 279v6M273 227v2M273 235v4M273 241v12M273 255v2M273 259v4M273 267v2M273 279v4M274 227v12M274 241v12M274 255v4M274 261v2M274 269v2M274 277v8M275 223v2M275 229v2M275 233v6M275 241v12M275 255v6M275 277v6M276 223v16M276 241v12M276 255v8M276 275v10M277 229v2M277 233v6M277 241v12M277 255v2M277 267v2M277 281v4M278 221v2M278 233v2M278 237v2M278 241v12M278 255v2M278 259v10M278 279v6M279 225v14M279 241v2M279 245v8M279 255v6M279 275v2M279 279v6M280 225v2M280 229v2M280 233v2M280 237v2M280 241v12M280 255v8M280 279v4M281 227v4M281 233v6M281 241v12M281 255v2M281 259v12M281 279v8M282 225v14M282 241v12M282 255v2M282 263v2M282 281v6M283 227v2M283 231v8M283 241v12M283 255v2M283 261v2M283 277v2M283 281v6M284 225v6M284 235v4M284 241v12M284 255v4M284 283v6M285 221v2M285 231v8M285 241v12M285 255v10M285 269v2M285 281v4M286 225v2M286 229v2M286 233v6M286 241v12M286 255v2M286 261v2M286 281v4M287 229v10M287 241v12M287 255v4M287 261v2M287 277v8M288 223v8M288 233v6M288 241v12M288 255v2M288 279v6M289 221v2M289 229v10M289 241v12M289 259v4M289 275v2M289 279v4M290 223v2M290 229v10M290 241v12M290 257v2M290 277v2M290 281v2M291 227v2M291 231v8M291 241v12M291 255v4M291 281v2M292 225v2M292 231v8M292 241v12M292 257v2M292 281v4M293 225v2M293 229v10M293 241v12M293 255v8M293 279v10M294 223v2M294 227v12M294 241v12M294 257v2M294 281v4M295 231v2M295 235v4M295 241v12M295 255v6M295 277v2M295 281v4M296 221v2M296 225v4M296 231v4M296 237v2M296 241v18M296 283v6M297 221v2M297 227v8M297 237v2M297 241v12M297 255v2M297 281v2M297 285v2M298 229v10M298 241v12M298 255v2M298 263v2M298 281v6M299 223v2M299 229v2M299 233v6M299 241v12M299 255v2M299 279v6M300 223v2M300 227v2M300 231v2M300 235v4M300 241v10M300 255v2M300 281v6M301 225v4M301 231v8M301 241v16M301 283v4M302 221v6M302 229v10M302 241v12M302 259v4M302 283v4M303 229v10M303 241v12M303 255v2M303 259v2M303 279v2M303 283v4M304 219v2M304 231v8M304 241v10M304 255v4M304 283v4M305 221v4M305 229v10M305 241v10M305 255v2M305 283v4M306 225v6M306 233v4M306 241v12M306 257v4M306 281v6M307 219v2M307 225v2M307 229v10M307 241v8M307 255v2M307 283v4M308 225v14M308 241v12M308 257v2M308 283v6M309 225v14M309 241v14M309 283v6M310 225v14M310 241v10M310 283v6M311 225v14M311 241v10M311 283v6M312 225v4M312 231v2M312 235v4M312 241v12M312 283v4M313 217v2M313 223v2M313 227v12M313 241v10M313 283v4M315 223v4M315 229v10M315 241v8M316 227v12M316 241v8M316 371v2M317 227v12M317 241v6M318 221v2M318 225v14M318 241v4M318 247v2M319 219v4M319 225v14M319 241v8M320 229v2M320 233v6M320 241v6M320 253v2M321 221v2M321 227v12M321 241v4M321 253v2M322 221v18M322 243v4M322 253v2M322 371v2M323 219v4M323 227v12M323 241v6M323 253v2M323 355v2M323 371v2M324 219v4M324 225v10M324 237v2M324 243v2M324 253v2M324 351v2M324 371v2M325 215v2M325 225v14M325 253v2M325 371v2M326 215v2M326 221v18M326 241v4M326 253v2M326 371v2M327 223v16M327 253v2M327 363v2M327 371v2M328 217v22M328 241v2M328 253v2M328 371v2M329 213v2M329 219v20M329 241v2M329 253v2M329 315v2M329 371v2M330 221v16M330 253v2M330 305v2M330 371v2M331 213v2M331 223v16M331 253v2M331 371v2M332 217v22M332 253v2M332 277v2M333 219v16M333 253v2M333 303v2M334 211v8M334 221v18M334 253v2M334 291v2M334 371v2M335 217v18M335 237v2M335 253v2M335 313v2M336 211v2M336 219v16M336 263v2M336 287v2M337 219v14M337 257v2M338 217v2M338 221v8M338 231v2M338 315v2M339 215v10M339 227v4M339 293v2M339 371v2M340 217v6M341 215v2M341 219v4M342 217v4M343 215v2M343 235v2M344 211v6M344 229v2M344 233v2M344 237v2M345 227v6M346 213v2M346 225v10M347 225v8M348 223v10M348 235v2M348 371v2M349 221v8M349 231v2M349 253v2M350 219v14M350 331v2M351 219v16M351 253v2M351 367v4M352 217v2M352 221v14M353 213v18M353 233v4M354 213v4M354 219v16M355 213v2M355 219v16M356 217v2M356 221v14M356 343v2M357 215v4M357 221v14M357 369v2M358 213v2M358 219v16M358 339v2M359 217v6M359 225v10M359 253v2M359 357v4M360 215v2M360 221v10M360 233v2M360 253v2M361 223v14M361 241v2M361 253v2M362 217v2M362 223v14M362 253v2M363 219v6M363 227v12M363 253v2M363 359v4M364 221v14M364 237v2M364 253v2M364 373v2M365 219v20M365 253v2M365 355v2M366 217v14M366 233v4M366 253v2M367 223v14M367 253v2M368 219v2M368 223v16M368 243v2M368 253v2M369 217v4M369 223v16M369 253v2M369 261v2M369 267v2M369 271v2M369 275v2M369 283v20M370 221v18M370 243v2M370 253v2M371 221v18M371 253v2M371 325v6M371 357v2M371 361v2M372 223v16M372 241v2M372 253v2M372 309v2M373 223v16M373 241v2M373 245v2M373 253v2M373 371v2M374 215v2M374 221v16M374 241v2M374 253v2M375 221v2M375 225v14M375 253v2M375 297v2M375 355v4M375 371v2M376 219v20M376 241v4M376 253v2M376 309v2M377 221v18M377 241v4M377 253v2M377 321v2M378 225v14M378 241v2M378 253v2M378 305v2M379 227v12M379 243v2M379 253v2M380 223v16M380 241v4M380 253v2M380 359v4M381 223v16M381 241v2M381 245v2M381 253v2M381 343v2M381 373v2M382 223v16M382 241v4M382 253v2M383 223v2M383 227v12M383 241v4M383 253v2M384 223v12M384 237v2M384 241v4M384 253v2M384 371v2M385 227v12M385 241v2M385 253v2M385 371v2M386 225v4M386 231v8M386 241v4M386 253v2M386 371v2M387 215v2M387 225v14M387 241v2M387 245v2M387 253v2M387 371v2M388 213v2M388 227v12M388 241v4M388 253v2M388 371v2M389 231v8M389 241v2M389 245v4M389 253v2M389 371v2M390 235v4M390 241v2M390 245v2M390 371v2M391 223v2M391 241v6M391 253v2M391 371v2M392 221v2M392 253v2M392 371v2M393 221v10M393 371v2M394 225v10M394 371v2M395 225v14M395 241v2M395 371v2M451 247v2M451 257v26M453 255v2M453 261v2M453 265v4M453 271v4M453 277v4M454 247v2M454 255v2M454 261v2M454 265v4M454 271v4M454 277v4M454 285v2M455 231v2M455 235v2M455 245v2M455 249v2M455 253v6M455 261v20M455 285v2M456 259v2M456 265v2M456 271v2M456 277v2M458 271v2M458 277v2M458 283v2M460 237v2M460 241v2M460 247v32M460 283v4M461 247v4M461 255v32M462 249v10M462 261v26M463 269v14M464 263v2M464 269v2M464 275v2M464 281v2M465 257v2M465 263v2M465 269v2M465 275v2M465 281v2M466 275v2M466 281v2M467 255v32M468 285v2M470 233v2M470 249v10M470 261v4M470 267v4M470 273v14M471 237v2M471 245v2M471 249v6M471 257v32M472 257v2M472 267v2M472 273v12M473 241v2M473 249v2M473 257v12M473 271v16M474 273v4M474 279v6M475 245v2M475 251v2M475 255v32M476 263v2M476 277v2M476 283v4M477 247v4M477 257v2M477 265v22M478 241v2M478 249v38M479 237v2M479 241v2M479 247v4M479 253v34M480 253v2M480 259v2M480 267v20M481 241v2M481 253v2M481 257v30M482 233v2M482 247v4M482 255v12M482 269v4M482 275v14M483 233v2M483 249v2M483 253v2M483 257v30M487 211v2M487 215v2M487 219v12M487 235v2M487 371v2M488 215v16M488 371v2M489 211v2M489 217v14M489 371v2M490 211v22M490 371v2M491 211v14M491 229v2M491 371v2M492 213v14M492 371v2M493 211v18M493 371v2M494 207v2M494 211v18M494 371v2M495 207v2M495 211v12M495 225v4M495 371v2M496 211v10M497 203v2M497 207v2M497 211v10M497 223v2M498 211v14M499 205v4M499 211v6M499 219v4M500 207v2M500 211v12M501 205v2M501 211v10M502 207v2M502 211v14M503 207v2M503 211v10M504 207v2M504 211v14M505 207v2M505 211v12M506 207v2M506 211v16M507 207v2M507 211v16M508 207v2M508 213v12M509 213v8M510 211v2M510 215v6M510 231v2M510 351v2M511 211v8M511 227v6M511 343v2M511 359v4M512 213v4M512 225v8M512 349v2M513 211v2M513 225v6M513 233v2M513 253v2M513 339v2M514 223v8M515 219v2M515 223v10M516 219v14M516 235v2M517 217v22M518 213v2M518 217v2M518 221v14M519 217v20M519 253v2M520 211v4M520 219v4M520 225v14M520 253v2M521 219v18M521 241v2M521 253v2M522 217v18M522 237v2M522 253v2M523 217v18M523 237v2M523 241v2M524 219v16M524 237v2M524 241v2M524 253v2M525 219v2M525 223v12M525 237v2M526 211v2M526 221v16M526 241v2M527 221v18M527 241v2M527 253v2M528 217v22M528 253v2M528 363v2M529 217v4M529 223v14M529 253v2M530 223v16M530 253v2M531 219v20M531 241v2M531 253v2M532 219v18M532 241v2M532 253v2M533 219v20M533 253v2M534 221v18M534 243v2M534 253v2M535 223v2M535 227v10M535 241v4M535 253v2M536 219v2M536 227v12M536 253v2M537 217v6M537 225v14M537 241v2M537 253v2M538 219v8M538 229v10M538 241v4M538 253v2M539 217v2M539 223v16M539 241v6M539 253v2M540 219v2M540 225v14M540 241v4M540 253v2M540 371v2M541 219v2M541 223v4M541 229v10M541 241v4M541 253v2M541 371v2M542 223v16M542 243v6M542 253v2M543 225v14M543 241v4M543 253v2M543 371v2M544 215v4M544 223v16M544 241v2M544 245v2M544 253v2M544 371v2M545 223v2M545 227v12M545 245v2M545 253v2M546 217v2M546 221v2M546 225v14M546 241v6M546 253v2M546 371v2M547 221v18M547 241v2M547 247v2M548 223v4M548 229v10M548 241v4M548 253v2M548 371v2M549 225v14M549 241v2M549 253v2M549 371v2M550 225v14M550 241v6M550 253v2M551 229v10M551 241v4M551 371v2M552 219v2M552 229v10M552 241v6M552 253v2M553 217v2M553 221v2M553 231v8M553 241v6M553 253v2M553 371v2M554 221v2M554 233v6M554 241v2M554 253v2M554 371v2M555 223v4M555 235v4M555 241v4M555 253v2M555 371v2M556 223v6M556 237v2M556 241v6M556 253v2M556 371v2M557 217v2M557 223v8M557 241v4M557 249v2M557 253v2M557 371v2M558 217v2M558 223v2M558 227v6M558 241v2M558 253v2M558 371v2M559 219v2M559 225v10M559 243v4M559 253v2M559 371v2M560 221v6M560 229v2M560 233v4M560 253v2M560 371v2M561 227v12M561 371v2M562 225v14M562 253v2M562 371v2M563 225v14M563 241v2M563 371v2M564 219v6M564 227v12M564 241v6M564 371v2M565 225v14M565 241v2M565 245v4M565 371v2M566 223v2M566 227v12M566 241v12M566 371v2M567 223v6M567 231v8M567 241v2M567 245v8M567 371v2M568 221v4M568 227v12M568 241v12M568 255v2M568 371v2M569 219v2M569 227v12M569 241v2M569 245v8M569 257v4M569 263v2M569 371v2M570 215v6M570 223v16M570 241v12M570 255v12M570 371v2M571 223v2M571 227v12M571 241v12M571 255v8M571 265v2M571 269v2M571 371v2M572 223v16M572 241v12M572 255v8M572 325v2M572 371v2M573 217v2M573 225v14M573 241v12M573 255v12M573 371v2M574 225v14M574 241v12M574 255v10M574 309v2M574 371v2M575 227v12M575 241v12M575 255v6M575 263v4M575 371v2M576 225v4M576 231v8M576 241v12M576 255v8M576 267v2M576 317v12M576 371v2M577 217v2M577 223v16M577 241v12M577 255v4M577 261v2M577 317v16M577 371v2M578 229v10M578 241v12M578 255v10M578 371v2M579 223v16M579 241v12M579 255v6M579 267v2M579 271v2M579 371v2M580 219v20M580 241v12M580 255v6M580 371v2M581 225v14M581 241v2M581 245v8M581 255v8M581 265v2M581 321v2M581 329v2M581 371v2M582 229v10M582 241v12M582 255v2M582 259v2M582 263v2M582 371v2M583 221v2M583 225v2M583 229v10M583 241v12M583 255v10M583 371v2M584 227v12M584 241v12M584 255v8M584 371v2M585 227v12M585 241v12M585 255v6M585 371v2M586 225v14M586 241v12M586 255v10M586 371v2M587 227v12M587 241v12M587 255v4M587 261v2M587 371v2M588 223v6M588 231v8M588 241v12M588 255v4M588 371v2M589 221v2M589 225v2M589 229v10M589 241v12M589 255v4M589 371v2M590 223v4M590 231v8M590 241v12M590 255v4M590 357v2M590 371v2M591 221v2M591 227v12M591 241v12M591 255v6M592 217v2M592 225v2M592 229v10M592 241v12M592 257v4M592 371v2M593 235v4M593 241v12M593 255v2M593 259v4M593 371v2M594 251v2M594 257v2M594 261v2M594 371v2M595 371v2M596 371v2M598 223v2M598 227v10M598 371v2M599 219v10M599 231v8M599 241v12M599 371v2M600 223v4M600 229v10M600 241v12M600 257v2M600 371v2M601 219v2M601 227v12M601 241v12M601 255v4M601 371v2M602 221v2M602 225v14M602 241v12M602 255v2M602 371v2M603 225v14M603 241v12M603 255v4M603 371v2M604 221v2M604 225v2M604 229v10M604 241v12M604 371v2M605 227v4M605 233v6M605 241v12M605 257v2M605 371v2M606 225v4M606 231v8M606 241v12M606 371v2M607 221v2M607 225v14M607 241v12M607 255v2M607 371v2M608 225v2M608 229v10M608 241v12M608 257v2M608 371v2M609 223v16M609 241v10M610 221v2M610 225v14M610 241v12M610 371v2M611 225v14M611 241v12M611 371v2M612 221v2M612 225v14M612 241v12M612 371v2M613 221v2M613 227v12M613 241v10M613 255v2M613 371v2M614 223v4M614 229v10M614 241v12M614 371v2M615 225v14M615 241v12M615 371v2M616 221v2M616 225v2M616 229v10M616 241v12M616 371v2M617 223v16M617 241v12M617 371v2M618 223v4M618 229v10M618 241v12M618 255v2M618 371v2M619 221v4M619 227v12M619 241v12M619 371v2M620 225v14M620 241v12M620 371v2M621 223v2M621 227v2M621 231v8M621 241v12M621 371v2M622 219v2M622 223v6M622 231v8M622 241v12M622 371v2M623 221v6M623 229v10M623 241v10M623 371v2M624 217v4M624 227v12M624 241v12M624 257v2M624 371v2M625 217v2M625 223v16M625 241v12M625 371v2M626 225v14M626 241v10M626 371v2M627 227v12M627 241v12M627 371v2M628 221v4M628 227v12M628 241v12M628 255v2M628 371v2M629 225v6M629 233v6M629 241v12M629 371v2M630 225v14M630 241v12M630 255v2M630 371v2M631 223v6M631 231v8M631 241v12M631 255v2M631 371v2M632 225v2M632 229v10M632 241v12M632 371v2M633 227v8M633 237v2M633 241v12M633 255v4M633 371v2M634 221v6M634 229v10M634 241v12M634 255v4M634 341v2M634 371v2M635 227v12M635 241v12M635 255v4M635 339v2M635 371v2M636 217v2M636 221v2M636 227v12M636 241v12M636 255v2M636 371v2M637 223v16M637 241v4M637 247v6M637 255v2M637 259v2M637 371v2M638 225v14M638 241v12M638 255v4M638 371v2M639 223v2M639 227v12M639 241v12M639 257v2M639 371v2M640 217v2M640 225v2M640 229v10M640 241v12M640 255v4M640 371v2M641 221v6M641 229v10M641 241v12M641 257v2M641 371v2M642 225v2M642 229v10M642 241v12M642 255v6M642 311v2M642 371v2M643 221v2M643 227v12M643 241v12M643 255v2M643 259v2M643 371v2M644 227v4M644 233v6M644 241v12M644 255v8M644 371v2M645 223v2M645 227v12M645 241v12M645 255v4M645 261v2M645 371v2M646 219v4M646 225v14M646 241v12M646 255v6M646 371v2M647 221v18M647 241v12M647 255v10M647 371v2M648 227v12M648 241v12M648 255v6M648 277v2M648 371v2M649 221v8M649 231v8M649 241v12M649 255v2M649 371v2M650 217v8M650 227v12M650 241v12M650 371v2M651 223v2M651 227v12M651 241v10M651 371v2M652 223v2M652 227v12M652 241v6M652 371v2M653 221v2M653 225v14M653 371v2M654 225v14M654 241v2M654 253v2M654 371v2M655 225v14M655 253v2M655 371v2M656 223v2M656 227v10M656 247v2M656 253v2M656 371v2M657 223v2M657 227v8M657 245v2M657 253v2M657 371v2M658 221v2M658 225v8M658 245v2M658 253v2M658 371v2M659 221v12M659 241v2M659 245v2M659 253v2M659 371v2M660 223v8M660 241v4M660 253v2M660 371v2M661 221v2M661 237v2M661 253v2M662 223v6M662 235v4M662 241v4M662 253v2M662 371v2M663 217v2M663 223v4M663 235v4M663 241v2M663 247v2M663 253v2M664 223v4M664 233v6M664 243v2M664 253v2M664 371v2M665 219v2M665 225v2M665 231v8M665 241v2M665 245v2M665 253v2M665 371v2M666 221v4M666 231v8M666 241v2M666 245v2M666 253v2M666 371v2M667 223v2M667 229v10M667 241v6M667 371v2M668 229v10M668 241v6M668 249v2M668 253v2M668 371v2M669 219v2M669 229v10M669 241v6M669 253v2M669 371v2"/>
<path stroke="rgb(0,255,97)" d="M238 239v2M240 239v2M240 365v2M241 327v2M241 371v2M242 239v2M242 331v2M243 317v16M243 349v2M243 353v4M244 239v2M244 301v6M245 297v4M246 239v2M246 295v4M247 297v2M248 239v2M248 293v2M249 293v2M250 239v2M250 293v2M251 293v4M252 239v2M252 295v2M253 239v2M253 293v2M254 239v2M254 293v2M255 239v2M255 293v4M256 239v2M258 239v2M259 295v6M260 239v2M260 295v4M261 297v2M262 239v2M262 299v4M263 239v2M263 297v4M264 239v2M264 297v2M265 299v4M266 239v2M266 297v6M267 293v4M268 293v2M269 295v2M270 239v2M270 295v4M271 293v2M272 291v2M273 293v2M274 291v4M275 239v2M275 291v4M276 293v4M277 295v2M278 293v2M279 291v4M280 291v4M281 239v2M281 295v4M282 239v2M282 297v4M283 239v2M283 297v4M284 299v4M285 239v2M285 295v2M286 239v2M286 293v4M287 239v2M287 293v2M288 291v4M289 239v2M289 291v2M290 239v2M290 291v4M291 239v2M291 293v2M292 293v2M293 295v4M294 293v4M295 239v2M295 295v4M296 239v2M296 295v6M297 295v4M298 239v2M298 293v4M299 239v2M299 293v4M300 295v4M301 239v2M301 295v2M302 295v4M303 239v2M303 295v4M304 239v2M304 295v4M305 239v2M305 295v2M306 295v4M307 295v2M309 239v2M309 293v2M310 239v2M310 295v2M311 239v2M311 295v2M312 239v2M312 293v2M313 239v2M313 295v2M315 239v2M316 239v2M317 239v2M318 239v2M318 365v2M319 239v2M320 239v2M321 239v2M322 239v2M323 239v2M324 239v2M324 361v2M325 239v2M325 347v2M326 239v2M326 341v2M327 239v2M328 239v2M328 343v2M329 239v2M329 317v2M330 239v2M330 307v2M330 329v2M331 239v2M331 295v2M332 239v2M332 281v2M333 239v2M333 263v2M333 301v2M334 289v2M334 333v2M335 239v2M335 275v2M336 293v2M337 239v2M337 263v2M337 331v2M338 311v2M339 289v2M340 223v2M340 263v2M349 361v4M350 239v2M350 337v2M351 239v2M351 361v2M352 329v2M354 239v2M355 239v2M356 205v2M356 239v2M356 337v2M358 239v2M358 345v2M359 239v2M360 239v2M361 239v2M362 239v2M362 343v2M363 239v2M363 357v2M364 239v2M364 347v2M364 371v2M365 239v2M365 357v2M366 239v2M366 365v2M367 239v2M368 239v2M369 239v2M369 335v4M369 343v2M370 239v2M371 239v2M371 305v4M371 365v2M372 203v2M372 239v2M372 305v2M373 239v2M374 239v2M374 335v2M375 239v2M375 295v2M375 351v2M376 213v2M376 239v2M376 371v2M377 239v2M377 353v2M378 239v2M378 309v2M379 239v2M379 321v2M379 343v2M380 239v2M380 355v4M381 239v2M381 369v4M382 239v2M382 357v2M383 239v2M383 369v2M384 239v2M385 239v2M386 239v2M387 239v2M388 239v2M389 239v2M390 239v2M393 231v2M395 239v2M451 295v2M460 295v6M461 297v2M462 295v4M463 295v2M465 299v2M466 293v2M467 295v4M468 295v2M469 291v4M470 295v4M471 295v4M472 293v6M473 295v4M474 293v4M475 295v4M476 293v6M477 295v4M478 295v4M479 295v4M480 295v4M481 295v4M482 297v2M483 295v4M486 291v6M488 239v2M497 237v2M506 233v2M509 365v10M510 221v2M510 355v12M511 347v10M512 337v10M513 215v2M516 239v2M517 239v2M518 239v2M519 239v2M520 239v2M521 239v2M522 239v2M523 239v2M524 239v2M525 239v2M525 335v2M526 239v2M526 335v10M527 239v2M527 343v10M528 239v2M528 351v10M529 239v2M529 359v10M530 239v2M531 239v2M531 299v2M531 303v4M531 311v2M531 315v2M531 321v6M531 335v4M531 341v2M531 347v6M531 355v2M531 365v2M531 373v2M532 239v2M532 283v2M532 297v8M532 309v2M532 317v4M532 325v2M532 331v2M532 339v2M532 349v2M532 353v2M532 357v4M532 363v2M532 369v2M532 373v2M533 239v2M533 279v2M533 285v6M533 299v4M533 305v4M533 313v2M533 319v6M533 327v2M533 339v2M533 349v2M533 361v2M533 369v2M534 239v2M534 267v2M534 273v6M534 301v2M534 317v2M534 321v4M534 329v2M534 333v2M534 337v2M534 355v2M534 365v2M535 239v2M535 283v2M535 291v4M535 297v4M535 303v2M535 311v4M535 317v2M535 327v2M535 331v6M535 353v2M535 359v6M535 367v6M536 239v2M536 301v4M536 319v2M536 325v2M536 349v2M536 355v2M536 361v2M536 365v2M536 373v2M537 239v2M537 325v2M537 333v2M537 337v2M537 349v2M537 353v4M537 363v2M537 367v2M537 371v2M539 239v2M540 239v2M541 239v2M542 239v2M543 239v2M544 213v2M544 239v2M545 239v2M546 239v2M547 239v2M548 239v2M549 239v2M550 239v2M551 239v2M552 239v2M553 239v2M554 239v2M555 239v2M556 239v2M557 239v2M562 239v2M563 239v2M564 239v2M565 239v2M566 239v2M567 239v2M568 239v2M569 239v2M570 239v2M571 239v2M573 239v2M573 331v2M574 239v2M575 239v2M575 295v2M575 321v2M575 337v2M576 239v2M577 239v2M578 239v2M579 239v2M579 345v2M580 239v2M580 299v2M581 239v2M582 239v2M583 239v2M583 345v2M584 239v2M584 295v2M585 239v2M585 293v2M586 239v2M586 299v2M587 239v2M587 289v18M587 309v4M587 317v4M587 331v2M587 335v2M587 341v10M588 239v2M588 295v6M588 303v4M588 309v2M588 347v4M589 239v2M589 289v18M589 311v2M589 337v2M589 343v2M589 347v4M590 239v2M590 287v8M591 239v2M591 287v2M591 291v60M591 353v2M592 239v2M592 283v2M592 287v8M592 297v2M592 301v8M592 311v38M592 353v2M593 217v8M593 239v2M593 283v6M594 241v4M594 283v6M595 257v4M595 283v6M595 355v2M596 269v2M596 279v2M596 283v6M596 355v2M597 215v10M597 279v8M598 243v4M598 361v2M599 239v2M599 257v2M600 267v2M601 239v2M601 273v2M602 239v2M602 275v6M603 277v6M604 239v2M604 275v6M605 239v2M605 273v6M606 239v2M606 275v6M606 365v2M607 239v2M607 275v4M608 239v2M608 273v6M609 273v4M610 239v2M610 273v4M611 239v2M611 273v4M612 239v2M612 271v6M613 239v2M613 269v6M613 361v2M614 239v2M614 271v4M615 239v2M615 271v6M616 239v2M616 269v6M617 239v2M617 271v4M618 239v2M618 269v6M619 239v2M620 239v2M620 271v4M621 239v2M621 271v4M622 239v2M622 271v4M623 239v2M623 271v6M624 239v2M624 273v4M625 239v2M625 271v6M626 239v2M626 269v8M627 239v2M627 271v6M628 239v2M628 273v4M629 239v2M629 273v4M630 239v2M630 273v4M631 239v2M631 273v6M632 239v2M632 273v6M633 239v2M633 275v2M634 273v8M635 239v2M635 275v4M635 281v2M636 239v2M636 275v8M637 239v2M637 275v8M638 239v2M638 277v6M639 239v2M639 277v6M640 239v2M640 279v8M640 323v2M641 239v2M641 279v6M642 283v4M643 239v2M643 283v2M644 239v2M645 239v2M645 365v2M646 269v2M647 239v2M647 281v2M648 239v2M649 239v2M650 239v2M650 253v2M650 267v2M651 239v2M652 239v2M653 239v2M654 239v2M655 249v2M660 239v2M661 239v2M662 239v2M663 239v2M664 239v2M665 239v2M666 239v2M667 239v2M668 239v2M669 239v2"/>
<path stroke="rgb(0,255,134)" d="M238 255v22M239 255v18M239 275v4M240 255v2M240 259v20M240 289v2M240 361v2M241 257v36M241 295v2M241 299v2M241 305v6M241 313v4M241 351v2M241 363v2M241 367v2M242 257v2M242 261v40M242 343v2M242 347v2M243 257v2M243 261v30M244 255v30M245 257v22M246 255v2M246 259v2M246 263v18M247 263v20M248 257v24M249 257v2M249 261v18M250 259v22M251 261v18M252 259v8M252 271v6M253 257v2M253 261v2M253 265v14M254 261v16M254 279v4M255 261v18M256 255v4M259 259v22M260 257v2M260 263v4M260 269v10M261 259v22M262 259v24M263 263v6M263 271v8M264 259v2M264 263v6M264 271v6M264 279v2M265 261v20M266 263v16M267 255v2M267 261v6M267 269v10M268 255v2M268 261v2M268 265v4M268 271v8M269 255v2M269 259v2M269 263v4M269 269v8M270 265v14M271 259v2M271 267v10M272 261v18M273 257v2M273 263v4M273 269v10M274 259v2M274 263v6M274 271v6M275 261v16M276 263v12M277 257v10M277 269v12M278 257v2M278 269v10M279 261v14M279 277v2M280 263v16M281 257v2M281 271v8M282 257v6M282 265v16M283 257v4M283 263v14M283 279v2M284 259v24M285 265v4M285 271v10M286 257v4M286 263v18M287 259v2M287 263v14M288 257v22M289 255v4M289 263v12M289 277v2M290 255v2M290 259v18M290 279v2M291 259v22M292 255v2M292 259v22M293 263v16M294 255v2M294 259v22M295 261v16M295 279v2M296 259v24M297 257v24M297 283v2M298 257v6M298 265v16M299 257v22M300 251v2M300 257v24M301 257v26M302 255v4M302 263v20M303 257v2M303 261v18M303 281v2M304 251v2M304 259v24M305 251v2M305 257v26M306 255v2M306 261v20M307 249v4M307 257v16M307 277v6M308 255v2M308 259v14M308 275v8M309 255v28M310 251v2M310 255v16M310 275v8M311 251v2M311 255v14M311 277v6M312 255v14M312 271v4M312 277v6M313 251v2M313 255v18M313 277v6M315 249v4M315 255v10M316 249v4M316 255v12M317 247v6M317 255v10M317 269v2M318 245v2M318 249v4M318 255v10M319 249v4M319 255v12M320 247v6M320 255v8M321 245v8M321 255v4M321 261v2M322 241v2M322 247v6M322 255v10M323 247v6M323 255v6M324 235v2M324 241v2M324 245v8M324 255v4M325 241v12M325 255v4M326 245v8M326 255v4M326 357v2M327 241v12M327 255v2M328 243v10M328 255v2M328 353v2M329 243v10M330 237v2M330 241v12M330 331v2M331 241v10M331 291v2M331 323v2M331 345v2M332 241v12M332 255v2M332 371v2M333 235v4M333 241v10M333 371v2M334 241v10M335 235v2M335 241v12M335 279v2M335 371v2M336 237v2M336 241v10M336 253v2M336 371v2M337 237v2M337 241v10M337 253v4M337 371v2M338 229v2M338 371v2M339 295v2M340 269v2M340 371v2M341 247v4M341 253v2M341 371v2M342 235v4M342 241v10M342 253v2M342 371v2M343 231v4M343 237v2M343 241v8M343 253v2M343 371v2M344 231v2M344 235v2M344 241v8M344 253v2M344 371v2M345 233v6M345 241v6M345 249v2M345 253v2M345 371v2M346 235v4M346 241v6M346 253v2M346 371v2M347 233v6M347 241v6M347 253v2M347 371v2M348 233v2M348 237v2M348 241v2M348 245v2M348 253v2M349 229v2M349 233v6M349 241v6M349 355v2M350 233v6M350 241v6M350 253v2M350 329v2M351 235v4M351 241v6M351 373v2M352 235v4M352 241v6M352 249v2M352 253v2M352 371v2M353 231v2M353 237v2M353 241v6M353 253v2M353 371v2M354 235v4M354 241v6M354 253v2M354 371v2M355 235v4M355 241v6M355 253v2M355 371v2M356 235v4M356 241v10M356 253v2M356 371v2M357 235v4M357 241v10M357 253v2M357 373v2M358 235v4M358 241v6M358 249v6M358 337v2M359 235v4M359 241v6M360 231v2M360 235v4M360 241v8M360 371v2M361 237v2M361 243v10M361 371v2M362 237v2M362 241v8M362 347v2M362 371v2M363 241v12M363 371v2M364 235v2M364 241v10M364 343v2M365 241v12M366 231v2M366 237v2M366 241v12M367 237v2M367 241v12M367 371v2M368 241v2M368 245v8M369 241v10M369 263v4M369 269v2M369 273v2M369 277v6M370 241v2M370 245v8M371 241v12M371 335v4M371 351v2M372 243v10M372 255v2M372 261v8M372 371v2M373 243v2M373 247v6M373 325v2M374 237v2M374 243v10M374 255v2M374 303v2M374 371v2M375 241v12M375 255v2M375 299v2M375 319v2M376 245v8M376 257v2M376 335v2M376 373v2M377 245v8M377 255v2M377 291v2M377 349v2M378 243v10M378 255v2M378 259v2M378 303v2M378 361v4M379 241v2M379 245v8M379 255v2M379 317v2M379 371v2M380 245v8M380 255v2M380 371v2M381 243v2M381 247v6M381 255v4M382 245v8M382 255v4M382 353v2M383 245v8M383 255v4M384 235v2M384 245v8M384 255v6M385 243v10M385 257v2M386 245v8M386 255v2M387 243v2M387 247v6M387 255v6M388 245v8M388 255v4M388 261v2M389 243v2M389 249v4M389 255v4M390 243v2M390 247v6M390 255v4M391 247v6M391 255v6M392 251v2M392 255v4M487 231v4M487 237v2M487 241v6M488 231v8M488 241v4M489 231v8M489 243v2M490 233v6M490 253v2M491 225v4M491 231v8M491 253v2M492 227v12M492 253v2M493 229v10M493 253v2M494 229v10M494 243v2M495 223v2M495 229v10M495 253v2M496 221v18M496 253v2M496 371v2M497 221v2M497 225v12M497 253v2M497 371v2M498 225v12M498 253v2M498 371v2M499 217v2M499 223v12M499 253v2M499 371v2M500 223v12M500 253v2M500 371v2M501 221v14M501 371v2M502 225v8M502 253v2M502 371v2M503 221v12M503 237v2M503 253v2M503 371v2M504 225v6M504 237v2M504 241v2M504 253v2M504 371v2M505 223v6M505 235v4M505 253v2M505 371v2M506 227v2M506 235v4M506 241v2M506 253v2M506 371v2M507 233v6M507 245v2M507 253v2M507 371v2M508 231v8M508 241v2M508 253v2M508 369v2M509 221v2M509 231v6M509 241v4M509 253v2M510 229v2M510 233v6M510 241v2M510 253v2M511 233v6M511 241v4M511 253v2M511 371v2M512 233v6M512 241v6M512 253v2M512 351v2M512 371v2M513 231v2M513 235v4M513 241v4M513 247v2M513 371v2M514 231v8M514 241v10M514 253v2M514 371v2M515 233v6M515 241v8M515 253v2M515 371v2M516 233v2M516 237v2M516 241v10M516 253v2M516 371v2M517 241v8M517 253v2M517 371v2M518 235v4M518 241v10M518 253v2M518 371v2M519 237v2M519 241v12M519 371v2M520 241v12M520 371v2M521 237v2M521 243v10M521 371v2M522 235v2M522 241v10M522 371v2M523 235v2M523 243v8M523 253v2M523 371v2M524 235v2M524 243v10M524 371v2M525 235v2M525 241v14M525 371v2M526 237v2M526 243v12M526 347v2M526 371v2M527 243v10M527 255v2M527 355v4M527 371v2M528 241v12M528 347v2M528 371v2M529 237v2M529 241v12M529 355v2M529 373v2M530 241v12M530 255v2M531 243v10M532 237v2M532 243v10M533 241v8M533 251v2M534 241v2M534 245v8M534 255v4M535 237v2M535 245v8M536 241v12M536 255v2M537 243v10M537 255v2M538 245v8M538 371v2M539 247v6M539 255v2M539 371v2M540 245v8M540 255v2M541 245v8M541 255v2M542 241v2M542 249v4M542 371v2M543 245v8M543 255v2M544 243v2M544 247v6M544 255v4M545 241v4M545 247v6M545 371v2M546 247v6M546 255v2M547 243v4M547 249v4M547 255v2M547 371v2M548 245v8M548 255v4M549 243v10M549 255v4M550 247v6M550 255v4M550 371v2M551 245v8M551 255v4M552 247v6M552 255v4M552 371v2M553 247v6M553 255v2M554 243v10M554 255v6M555 245v8M555 255v6M556 247v6M556 255v4M557 245v4M557 251v2M557 255v4M558 243v10M558 255v2M559 247v6M559 255v6M560 247v6M560 255v8M561 249v4M561 255v6M562 255v8M563 255v6M565 243v2M567 243v2M568 287v2M569 243v2M569 297v2M570 307v2M571 317v2M574 335v2M581 243v2M621 357v2M637 245v2M643 305v2M644 299v2M645 293v2M653 241v4M653 257v2M654 257v2M655 251v2M655 255v8M656 249v4M656 255v2M657 247v6M657 255v4M658 243v2M658 247v6M658 255v4M659 243v2M659 247v6M659 255v2M660 245v8M661 241v12M661 255v4M661 371v2M662 245v8M662 255v4M663 243v4M663 249v4M663 371v2M664 241v2M664 245v8M664 255v4M665 243v2M665 247v6M665 255v4M666 243v2M666 247v6M666 255v4M667 247v6M667 255v4M668 247v2M668 251v2M668 255v2M668 259v2M669 247v6M669 255v4"/>
<path stroke="rgb(0,255,144)" d="M238 277v14M238 293v6M238 357v2M238 361v2M239 273v2M239 279v16M239 357v2M239 361v2M240 279v10M240 291v14M240 309v2M240 351v2M240 367v4M240 373v2M241 293v2M241 297v2M241 301v4M241 311v2M241 317v8M241 349v2M241 353v4M307 273v4M308 273v2M310 271v4M311 269v8M312 269v2M312 275v2M313 273v4M315 265v22M315 291v2M315 369v2M316 267v14M316 283v4M316 289v2M317 265v4M317 271v14M317 357v2M318 265v14M318 281v2M319 267v12M319 357v2M320 263v18M320 373v2M321 259v2M321 263v16M321 285v2M322 265v16M323 261v14M323 277v2M324 259v18M324 353v2M325 259v16M325 345v2M326 259v10M326 271v4M326 339v2M327 257v14M327 353v2M328 257v14M328 345v2M329 255v14M329 349v2M330 255v14M330 303v2M331 251v2M331 255v14M332 257v8M332 275v2M332 315v2M332 353v2M333 251v2M333 255v6M333 305v2M334 251v2M334 255v6M334 293v2M335 255v6M335 311v2M336 251v2M336 255v6M336 265v2M336 285v2M337 251v2M338 317v2M340 271v2M341 251v2M341 255v4M342 251v2M342 255v4M343 249v4M343 255v4M344 249v4M344 255v6M345 247v2M345 251v2M345 255v2M346 247v6M346 255v4M347 247v6M347 255v4M348 243v2M348 247v6M348 255v2M349 247v6M349 255v4M349 351v4M350 247v6M350 255v2M350 327v2M351 247v6M351 255v4M352 247v2M352 251v2M352 255v6M352 339v2M353 247v6M353 255v2M353 259v4M354 247v6M354 255v6M355 247v6M355 255v4M356 251v2M356 255v4M357 251v2M357 255v6M358 247v2M358 255v6M358 335v2M359 247v6M359 255v6M360 249v4M360 255v8M361 255v6M362 249v4M362 255v6M363 255v8M364 251v2M364 255v4M364 261v2M365 255v8M365 353v2M366 255v8M366 265v2M367 255v8M368 255v10M368 373v2M369 251v2M369 255v6M370 255v6M371 255v6M371 343v8M371 353v4M371 359v2M371 363v2M371 367v4M371 373v2M372 257v4M372 269v8M372 311v2M373 255v12M374 257v12M374 301v2M375 257v12M375 317v2M375 361v2M376 255v2M376 259v12M376 311v2M377 257v10M377 269v2M377 289v2M377 323v2M378 257v2M378 261v8M378 335v2M379 257v14M379 347v2M380 257v10M380 329v2M381 259v10M381 341v2M382 259v12M382 351v2M383 259v12M383 361v4M384 261v10M385 255v2M385 259v14M386 257v14M386 273v2M387 261v8M388 259v2M388 263v8M389 259v12M389 357v2M390 259v10M391 261v10M391 273v2M391 361v2M392 259v16M392 357v2M393 263v6M393 271v4M393 357v2M394 263v8M394 357v2M394 361v2M395 263v10M395 357v2M395 361v2M489 259v2M490 251v2M490 255v2M491 249v4M491 255v2M492 247v6M492 255v2M493 245v8M494 245v10M495 243v10M496 243v6M496 251v2M497 243v8M498 243v6M499 235v2M499 243v6M499 251v2M500 241v8M500 251v2M501 241v8M501 253v2M502 241v8M503 241v8M504 243v8M505 241v12M506 243v10M507 241v4M507 247v6M508 243v10M508 367v2M509 237v2M509 245v8M509 357v4M510 243v10M510 255v2M510 373v2M511 245v8M511 341v2M511 363v2M512 247v6M512 255v4M513 245v2M513 249v4M513 259v2M513 341v2M514 251v2M514 257v2M515 249v4M515 255v4M516 251v2M516 255v4M517 249v4M517 255v6M518 251v2M518 255v6M519 255v10M520 255v8M521 255v10M522 251v2M522 255v6M523 251v2M523 255v10M524 255v14M525 255v10M525 339v2M526 255v8M527 257v10M527 339v2M528 255v10M529 255v8M530 257v10M531 255v12M532 255v12M533 249v2M533 255v12M534 259v8M535 255v12M536 257v10M537 257v10M538 255v12M539 257v10M540 257v10M541 257v10M542 255v12M543 257v12M544 259v10M544 271v2M545 255v16M546 257v14M546 361v2M547 257v14M548 259v10M548 271v2M549 259v12M549 357v2M550 259v12M551 259v12M552 259v12M553 257v16M554 261v10M554 361v2M555 261v10M555 361v2M556 259v12M556 361v2M557 259v10M557 271v2M557 361v2M558 257v18M559 261v14M559 357v2M560 263v10M561 261v12M562 263v12M562 357v2M562 361v2M563 261v12M563 357v2M564 259v10M564 271v2M564 357v2M565 265v10M565 357v2M565 361v2M566 271v2M566 357v2M566 361v2M567 357v2M567 361v2M568 357v2M568 361v2M569 361v2M570 357v2M571 357v2M571 361v2M572 357v2M572 361v2M573 357v2M573 361v2M574 357v2M574 361v2M575 357v2M576 357v2M576 361v2M577 357v2M577 361v2M578 357v2M579 357v2M579 361v2M580 347v2M580 357v2M580 361v2M581 361v2M582 357v2M582 361v2M583 357v2M583 361v2M584 357v2M584 361v2M585 357v2M585 361v2M586 357v2M586 361v2M587 357v2M587 361v2M588 357v2M588 361v2M589 357v2M589 361v2M590 361v2M591 361v2M592 361v2M593 361v2M594 361v2M595 361v2M596 361v2M597 361v2M614 361v2M615 361v2M616 361v2M617 361v2M619 361v2M620 361v2M621 361v2M622 357v2M622 361v2M623 357v2M623 361v2M624 357v2M624 361v2M625 357v2M625 361v2M626 357v2M626 361v2M627 357v2M627 361v2M628 357v2M628 361v2M629 349v2M629 357v2M629 361v2M630 357v2M630 361v2M631 357v2M631 361v2M632 357v2M632 361v2M633 343v2M633 357v2M633 361v2M634 357v2M634 361v2M635 357v2M635 361v2M636 337v2M636 357v2M636 361v2M637 357v2M637 361v2M638 357v2M638 361v2M639 357v2M639 361v2M640 357v2M641 357v2M641 361v2M641 373v2M642 357v2M642 361v2M643 357v2M643 361v2M644 357v2M644 361v2M645 357v2M645 361v2M646 357v2M646 361v2M647 357v2M647 361v2M648 357v2M648 361v2M650 269v6M650 361v2M651 265v8M652 261v12M653 259v10M653 271v6M653 357v2M654 255v2M654 259v10M655 263v10M656 257v10M656 269v4M657 259v12M658 259v10M659 257v14M660 255v12M661 259v10M662 259v10M662 271v2M663 255v16M664 259v10M665 259v12M666 259v12M667 259v12M668 257v2M668 261v10M669 259v12"/>
<path stroke="rgb(0,255,153)" d="M238 291v2M238 299v10M238 369v2M238 373v2M239 295v14M239 369v2M239 373v2M240 305v4M240 311v12M240 359v2M240 363v2M241 339v10M315 287v4M315 293v20M315 359v2M316 281v2M316 287v2M316 291v6M316 299v2M316 357v2M316 361v2M316 367v2M317 285v16M317 361v2M318 279v2M318 283v14M318 357v2M319 279v18M320 281v14M320 297v4M320 357v2M321 279v6M321 287v6M321 373v2M322 281v12M322 361v2M322 373v2M323 275v2M323 279v14M323 361v2M323 373v2M324 277v14M324 293v2M324 373v2M325 275v14M325 357v4M325 373v2M326 269v2M326 275v14M326 373v2M327 271v8M327 281v6M327 331v2M327 373v2M328 271v14M328 323v2M328 373v2M329 269v14M329 313v2M329 339v2M329 361v2M329 373v2M330 269v14M330 361v2M331 269v12M331 289v2M331 357v2M331 361v2M331 373v2M332 265v10M332 357v2M332 361v2M332 373v2M333 357v2M333 361v2M333 373v2M334 331v2M334 357v2M334 361v2M334 373v2M335 281v2M335 309v2M335 357v2M335 361v2M335 373v2M336 267v4M336 275v2M336 283v2M336 357v2M336 361v2M337 357v2M337 361v2M338 357v2M338 361v2M338 373v2M339 297v2M339 357v2M339 361v2M340 273v2M340 357v2M340 361v2M340 373v2M341 259v14M341 357v2M341 361v2M342 259v10M342 357v2M343 259v10M343 271v2M343 361v2M344 261v6M344 357v2M344 373v2M345 257v12M345 361v2M346 259v8M346 357v2M347 259v10M347 357v2M347 361v2M348 257v10M348 269v2M348 357v2M348 361v2M348 373v2M349 259v8M350 257v10M350 269v2M350 325v2M351 259v10M352 261v8M352 341v2M352 357v2M353 257v2M353 263v4M353 357v2M353 361v2M354 261v6M354 269v2M355 259v10M355 271v2M355 357v2M356 259v10M356 351v2M356 357v2M356 361v2M357 261v12M358 261v12M359 261v8M359 273v2M359 355v2M360 263v12M360 357v2M360 373v2M361 261v8M361 271v2M361 357v2M361 361v2M362 261v12M362 349v4M362 357v2M362 361v2M363 263v10M363 363v2M364 259v2M364 263v8M364 273v2M364 341v2M365 263v12M365 351v2M366 263v2M366 267v8M366 357v2M366 361v4M367 263v12M367 277v2M367 357v2M367 361v2M367 373v2M368 265v10M368 357v2M368 361v2M368 367v4M372 277v6M372 313v2M372 357v2M372 361v2M372 373v2M373 267v10M373 279v2M373 327v2M373 357v2M373 361v2M374 269v12M374 289v2M374 299v2M374 357v2M374 361v2M375 269v12M375 301v2M375 315v2M375 359v2M375 373v2M376 271v8M376 313v2M377 267v2M377 271v8M377 347v2M378 269v10M378 301v2M378 357v2M379 271v12M379 315v2M379 349v4M379 357v2M379 361v2M379 373v2M380 267v16M380 363v2M381 269v14M382 271v8M382 281v2M383 271v12M383 357v2M384 271v10M384 357v2M384 361v2M384 373v2M385 273v12M385 357v2M385 361v2M385 373v2M386 271v2M386 275v8M386 357v2M386 361v2M386 373v2M387 269v16M387 357v2M387 361v2M387 373v2M388 271v16M388 357v2M388 361v2M388 373v2M389 271v14M389 361v2M389 373v2M390 269v16M390 357v2M390 361v2M390 373v2M391 271v2M391 275v8M391 357v2M391 373v2M392 275v10M392 361v2M392 373v2M393 269v2M393 275v10M393 361v2M393 373v2M394 271v14M394 373v2M395 273v12M395 373v2M487 263v14M487 357v2M487 361v2M487 373v2M488 263v12M488 357v2M488 361v2M488 373v2M489 261v8M489 271v2M489 357v2M489 361v2M489 373v2M490 257v10M490 269v2M490 357v2M490 361v2M490 373v2M491 257v12M491 357v2M491 361v2M491 373v2M492 257v10M492 357v2M492 361v2M493 255v12M493 357v2M493 361v2M494 255v10M494 357v2M494 361v2M495 255v10M495 357v2M495 361v2M496 249v2M496 255v8M496 357v2M496 361v2M496 373v2M497 251v2M497 255v6M497 357v2M497 361v2M498 249v4M498 255v6M498 357v2M498 361v2M498 373v2M499 249v2M499 255v6M499 357v2M499 361v2M500 249v2M500 255v8M500 357v2M500 361v2M501 249v4M501 255v4M501 357v2M501 361v2M502 249v4M502 255v6M502 357v2M502 361v2M503 249v4M503 255v8M503 265v2M503 357v2M503 361v2M504 251v2M504 255v10M504 357v2M504 361v2M505 255v8M505 357v2M505 361v2M506 255v10M506 357v2M506 361v2M507 255v8M507 357v2M508 255v6M508 357v2M508 361v2M509 255v10M510 257v10M510 349v2M511 255v12M512 259v8M512 335v2M512 353v2M512 357v2M513 255v4M513 261v12M513 335v2M513 357v2M513 361v2M514 255v2M514 259v10M514 357v2M514 361v2M515 259v12M515 357v2M516 259v10M516 357v2M517 261v10M517 357v2M517 361v2M518 261v10M518 357v2M518 361v2M519 265v8M519 361v2M520 263v12M520 361v2M521 265v6M521 357v2M522 261v14M522 361v2M523 265v6M523 273v2M524 269v8M524 357v2M524 361v2M525 265v10M525 361v2M526 263v16M526 349v2M526 361v2M527 267v10M527 361v2M528 265v14M529 263v14M529 353v2M530 267v10M531 267v8M532 267v10M535 267v10M536 267v10M537 267v10M538 267v12M538 357v2M538 361v2M538 373v2M539 267v12M539 357v2M539 361v2M539 373v2M540 267v10M540 279v2M540 357v2M540 361v2M541 267v10M541 279v4M541 357v2M541 361v2M541 373v2M542 267v16M542 357v2M542 361v2M543 269v10M543 357v2M543 361v2M543 373v2M544 269v2M544 273v8M544 357v2M544 361v2M544 373v2M545 271v8M545 357v2M545 361v2M545 373v2M546 271v10M546 357v2M546 373v2M547 271v10M547 357v2M547 361v2M547 373v2M548 269v2M548 273v10M548 285v2M548 357v2M548 361v2M548 373v2M549 271v12M549 361v2M549 373v2M550 271v14M550 357v2M550 361v2M550 373v2M551 271v10M551 283v2M551 357v2M551 361v2M551 373v2M552 271v12M552 357v2M552 361v2M552 373v2M553 273v10M553 357v2M553 361v2M553 373v2M554 271v12M554 357v2M554 373v2M555 271v14M555 357v2M555 373v2M556 271v12M556 357v2M556 373v2M557 269v2M557 273v10M557 357v2M557 373v2M558 275v10M558 357v2M558 361v2M558 373v2M559 275v12M559 289v2M559 361v2M559 373v2M560 273v12M560 357v2M560 361v2M560 373v2M561 273v14M561 357v2M561 361v2M561 373v2M562 275v10M562 287v4M562 373v2M563 273v14M563 361v2M563 369v2M563 373v2M564 269v2M564 273v16M564 361v2M564 373v2M565 275v12M565 373v2M566 273v12M566 373v2M567 279v8M567 373v2M568 373v2M569 357v2M569 373v2M570 361v2M570 369v2M570 373v2M571 373v2M572 369v2M572 373v2M573 369v2M573 373v2M574 373v2M575 361v2M575 373v2M576 373v2M577 369v2M577 373v2M578 361v2M578 369v2M578 373v2M579 367v2M579 373v2M580 373v2M581 357v2M581 367v2M581 373v2M582 369v2M582 373v2M583 351v2M583 369v2M583 373v2M584 367v4M584 373v2M585 353v2M585 367v4M585 373v2M586 369v2M586 373v2M587 369v2M587 373v2M588 369v2M588 373v2M589 367v2M589 373v2M590 367v4M590 373v2M591 369v2M591 373v2M592 369v2M592 373v2M593 373v2M594 373v2M595 373v2M596 373v2M597 367v4M597 373v2M598 369v2M598 373v2M599 373v2M600 369v2M600 373v2M601 369v2M601 373v2M602 369v2M602 373v2M603 369v2M603 373v2M604 369v2M604 373v2M605 369v2M605 373v2M606 369v2M606 373v2M607 369v2M607 373v2M608 369v2M608 373v2M609 373v2M610 369v2M610 373v2M611 369v2M611 373v2M612 369v2M612 373v2M613 369v2M613 373v2M614 373v2M615 369v2M615 373v2M616 369v2M616 373v2M617 369v2M617 373v2M618 359v4M618 367v2M618 373v2M619 369v2M619 373v2M620 369v2M620 373v2M621 369v2M621 373v2M622 369v2M622 373v2M623 367v4M623 373v2M624 369v2M624 373v2M625 369v2M625 373v2M626 369v2M626 373v2M627 369v2M627 373v2M628 367v4M628 373v2M629 373v2M630 367v4M630 373v2M631 369v2M631 373v2M632 369v2M632 373v2M633 369v2M633 373v2M634 373v2M635 373v2M636 369v2M636 373v2M637 367v4M637 373v2M638 367v4M638 373v2M639 373v2M640 361v2M640 367v4M640 373v2M641 319v2M641 367v4M642 369v2M642 373v2M643 373v2M644 373v2M645 373v2M646 369v2M646 373v2M647 283v4M647 369v2M647 373v2M648 279v8M648 373v2M649 273v14M649 357v2M649 361v2M649 373v2M650 275v8M650 285v2M650 357v2M650 373v2M651 273v12M651 357v2M651 361v2M651 373v2M652 273v10M652 357v2M652 361v2M652 373v2M653 269v2M653 277v4M653 361v2M653 373v2M654 269v12M654 357v2M654 361v2M654 373v2M655 273v10M655 357v2M655 361v2M655 373v2M656 267v2M656 273v10M656 357v2M656 361v2M656 373v2M657 271v12M657 357v2M657 361v2M657 373v2M658 269v10M658 357v2M658 361v2M659 271v8M659 357v2M659 361v2M659 373v2M660 267v14M660 357v2M660 361v2M660 373v2M661 269v12M661 357v2M661 361v2M661 373v2M662 269v2M662 273v8M662 357v2M662 361v2M662 373v2M663 271v12M663 357v2M663 361v2M663 373v2M664 269v14M664 357v2M664 361v2M664 373v2M665 271v10M665 357v2M665 361v2M665 373v2M666 271v10M666 357v2M666 361v2M666 373v2M667 271v10M667 357v2M667 361v2M667 373v2M668 271v14M668 357v2M668 361v2M668 373v2M669 271v10M669 357v2M669 361v2M669 373v2"/>
<path stroke="rgb(0,255,163)" d="M238 309v12M238 351v2M238 359v2M238 363v2M238 367v2M239 309v12M239 351v2M239 355v2M239 359v2M239 363v2M239 367v2M240 323v2M240 345v6M240 353v4M315 313v12M316 297v2M316 301v10M316 351v2M316 369v2M317 301v8M317 351v2M317 367v4M318 297v12M318 351v2M318 367v4M319 297v12M319 367v2M320 295v2M320 301v8M320 351v2M320 363v2M321 293v16M321 351v2M322 293v14M322 351v2M322 363v2M323 293v14M323 351v2M323 359v2M324 291v2M324 295v10M324 307v2M324 369v2M325 289v14M325 367v4M326 289v12M326 367v4M327 279v2M327 287v14M327 355v2M327 367v4M328 285v10M328 367v4M329 283v16M329 367v4M330 283v14M330 301v2M330 367v4M330 373v2M331 281v8M331 367v4M332 367v4M333 337v2M333 367v4M334 295v2M334 369v2M335 283v6M335 307v2M335 367v4M336 271v4M336 277v6M336 369v2M336 373v2M337 369v2M337 373v2M338 319v2M338 367v4M339 299v2M339 367v4M339 373v2M340 275v10M340 369v2M341 273v8M341 369v2M341 373v2M342 269v16M342 361v2M342 369v2M342 373v2M343 269v2M343 273v8M343 283v2M343 357v2M343 369v2M343 373v2M344 267v14M344 283v2M344 361v2M344 367v4M345 269v10M345 281v2M345 357v2M345 369v2M345 373v2M346 267v12M346 361v2M346 369v2M346 373v2M347 269v12M347 369v2M347 373v2M348 267v2M348 271v10M348 369v2M349 267v12M349 349v2M350 267v2M350 271v10M350 321v4M351 269v10M352 269v10M352 343v2M352 361v2M352 369v2M352 373v2M353 267v14M353 369v2M353 373v2M354 267v2M354 271v10M354 357v2M354 361v2M354 369v2M354 373v2M355 269v2M355 273v8M355 361v2M355 369v2M355 373v2M356 269v12M356 349v2M356 369v2M356 373v2M357 273v8M358 273v8M358 333v2M359 269v4M359 275v6M359 351v4M360 275v10M360 361v2M361 269v2M361 273v12M361 369v2M361 373v2M362 273v12M362 373v2M363 273v10M363 285v2M363 373v2M364 271v2M364 275v12M365 275v10M366 275v12M367 275v2M367 279v8M367 369v2M368 275v14M368 363v2M372 283v8M372 369v2M373 277v2M373 281v8M373 367v4M373 373v2M374 281v8M374 343v2M374 369v2M374 373v2M375 281v8M375 367v4M376 279v10M377 279v10M377 325v2M378 279v12M378 293v2M378 337v2M378 359v2M379 283v10M379 367v4M380 283v12M380 327v2M380 367v4M380 373v2M381 283v10M382 279v2M382 283v6M382 291v4M383 283v10M384 281v14M384 367v4M385 285v8M385 367v4M386 283v10M386 295v2M386 351v2M386 367v4M387 285v10M387 351v2M387 367v4M388 287v10M388 351v2M388 367v4M389 285v12M389 299v2M389 367v4M390 285v10M390 297v2M390 367v4M391 283v14M391 299v2M391 351v2M391 367v4M392 285v10M392 351v2M392 367v4M393 285v14M393 367v4M394 285v16M394 367v4M395 285v14M395 351v2M395 367v4M487 277v8M487 287v2M487 367v4M488 275v8M488 285v2M488 367v4M489 269v2M489 273v12M489 367v4M490 267v2M490 271v14M490 367v4M491 269v12M491 367v4M492 267v14M492 367v4M492 373v2M493 267v8M493 277v2M493 367v4M493 373v2M494 265v10M494 367v4M494 373v2M495 265v8M495 275v2M495 367v4M495 373v2M496 263v10M496 275v2M496 369v2M497 261v14M497 369v2M497 373v2M498 261v10M498 273v2M498 369v2M499 261v14M499 367v4M499 373v2M500 263v6M500 367v4M500 373v2M501 259v14M501 369v2M501 373v2M502 261v8M502 271v2M502 369v2M502 373v2M503 263v2M503 267v2M503 271v2M503 369v2M503 373v2M504 265v6M504 273v2M504 369v2M504 373v2M505 263v12M505 369v2M505 373v2M506 265v10M506 369v2M506 373v2M507 263v10M507 361v2M507 369v2M507 373v2M508 261v12M509 265v10M509 277v2M510 267v10M511 267v12M511 339v2M511 367v4M511 373v2M512 267v12M512 355v2M512 361v2M512 373v2M513 273v6M513 343v2M513 369v2M513 373v2M514 269v12M514 373v2M515 271v10M515 361v2M515 373v2M516 269v14M516 361v2M516 373v2M517 271v14M517 369v2M517 373v2M518 271v14M518 369v2M518 373v2M519 273v10M519 357v2M519 373v2M520 275v10M520 357v2M520 373v2M521 271v14M521 361v2M521 369v2M521 373v2M522 275v10M522 357v2M522 373v2M523 271v2M523 275v8M523 285v2M523 357v2M523 361v2M523 369v2M523 373v2M524 277v10M524 373v2M525 275v10M525 341v2M525 357v2M525 369v2M525 373v2M526 279v6M526 287v2M526 351v2M526 357v2M526 369v2M526 373v2M527 277v10M527 337v2M527 359v2M527 369v2M527 373v2M528 279v6M528 345v2M528 367v4M528 373v2M529 277v12M529 351v2M530 277v10M531 275v14M536 277v14M537 277v14M538 279v12M538 367v4M539 279v14M539 369v2M540 277v2M540 281v8M540 291v2M540 367v4M540 373v2M541 277v2M541 283v8M541 293v2M541 369v2M542 283v8M542 367v4M542 373v2M543 279v8M543 289v4M543 367v2M544 281v14M544 367v4M545 279v14M545 367v4M546 281v14M546 367v4M547 281v12M547 367v4M548 283v2M548 287v6M548 295v2M548 367v4M549 283v10M549 351v2M549 367v4M550 285v10M550 367v4M551 281v2M551 285v8M551 295v4M551 367v4M552 283v12M552 297v2M552 363v2M552 367v4M553 283v12M553 299v2M553 367v4M554 283v14M554 363v2M554 367v4M555 285v12M555 351v2M555 367v4M556 283v14M556 351v2M556 367v4M557 283v16M557 351v2M557 367v4M558 285v12M558 299v2M558 363v2M558 367v4M559 287v2M559 291v8M559 351v2M559 363v2M559 367v4M560 285v10M560 297v4M560 351v2M560 367v4M561 287v14M561 351v2M561 363v2M561 367v4M562 285v2M562 291v10M562 351v2M562 367v4M563 287v16M563 351v2M563 367v2M564 289v8M564 299v2M564 351v2M564 363v2M564 367v4M565 287v14M565 351v2M565 363v2M565 367v4M566 285v16M566 351v2M566 363v2M566 367v4M567 287v16M567 351v2M567 363v2M567 367v4M568 289v14M568 305v2M568 363v2M568 367v4M569 299v2M569 363v2M569 367v4M570 309v2M570 351v2M570 363v2M570 367v2M571 351v2M571 363v2M571 367v4M572 327v2M572 351v2M572 363v2M572 367v2M573 351v2M573 363v2M573 367v2M574 351v2M574 367v4M575 351v2M575 363v2M575 367v4M576 351v2M576 363v2M576 367v4M577 351v2M577 363v2M577 367v2M578 351v2M578 363v2M578 367v2M579 351v2M579 363v2M579 369v2M580 351v2M580 363v2M580 367v4M581 351v2M581 363v2M581 369v2M582 351v2M582 363v2M582 367v2M583 363v2M583 367v2M584 359v2M584 363v2M585 363v2M586 363v2M586 367v2M587 363v2M587 367v2M588 363v2M588 367v2M589 363v2M589 369v2M590 363v2M591 363v2M591 367v2M592 363v2M592 367v2M593 359v2M593 363v2M593 367v4M594 363v2M594 367v4M595 363v2M595 367v4M596 363v2M596 367v4M597 363v2M598 363v2M598 367v2M599 363v2M599 367v4M600 363v2M600 367v2M601 363v2M601 367v2M602 363v2M602 367v2M603 363v2M603 367v2M604 363v2M604 367v2M605 363v2M605 367v2M606 363v2M606 367v2M607 367v2M608 363v2M608 367v2M609 367v4M610 367v2M611 367v2M612 367v2M613 363v2M613 367v2M614 363v2M614 367v4M615 363v2M615 367v2M616 363v2M616 367v2M617 363v2M617 367v2M618 363v2M618 369v2M619 359v2M619 363v2M619 367v2M620 363v2M620 367v2M621 363v2M621 367v2M622 363v2M622 367v2M623 363v2M624 359v2M624 363v2M624 367v2M625 363v2M625 367v2M626 359v2M626 363v2M626 367v2M627 363v2M627 367v2M628 351v2M628 363v2M629 351v2M629 363v2M629 367v4M630 351v2M630 363v2M631 351v2M631 363v2M631 367v2M632 351v2M632 359v2M632 363v2M632 367v2M633 351v2M633 363v2M633 367v2M634 351v2M634 363v2M634 367v4M635 351v2M635 359v2M635 363v2M635 367v4M636 351v2M636 363v2M636 367v2M637 351v2M637 363v2M638 351v2M638 363v2M639 351v2M639 359v2M639 363v2M639 367v4M640 325v2M640 351v2M640 363v2M641 351v2M641 363v2M642 351v2M642 363v2M642 367v2M643 351v2M643 363v2M643 367v4M644 301v2M644 351v2M644 363v2M644 367v4M645 295v6M645 351v2M645 363v2M645 367v4M646 289v14M646 351v2M646 363v2M646 367v2M647 287v12M647 363v2M647 367v2M648 287v12M648 351v2M648 363v2M648 367v4M649 287v6M649 295v2M649 363v2M649 367v4M650 283v2M650 287v12M650 367v4M651 285v10M651 367v4M652 283v10M652 295v4M652 351v2M652 363v2M652 367v4M653 281v14M653 367v4M654 281v14M654 367v4M655 283v12M655 367v4M656 283v8M656 367v4M657 283v8M657 367v4M658 279v14M658 367v4M658 373v2M659 279v14M659 367v4M660 281v14M660 367v4M661 281v12M661 367v4M662 281v12M662 367v4M663 283v8M663 293v2M663 369v2M664 283v10M664 367v4M665 281v14M665 367v4M666 281v12M666 295v2M666 363v2M666 367v4M667 281v14M667 367v4M668 285v12M668 367v4M669 281v16M669 367v4"/>
<path stroke="rgb(0,255,172)" d="M238 321v4M238 327v2M238 349v2M238 353v4M239 321v4M239 347v4M239 353v2M240 337v8M315 325v6M315 349v2M316 311v12M316 359v2M317 309v14M317 359v2M318 309v14M318 355v2M318 359v2M319 309v14M319 351v2M319 359v2M320 309v10M320 355v2M321 309v10M321 355v2M321 363v2M322 307v10M322 355v2M323 307v8M324 305v2M324 309v8M324 359v2M325 303v12M326 301v12M326 355v2M327 301v12M328 295v18M328 363v2M329 299v12M329 363v2M330 297v4M330 333v2M330 359v2M330 363v2M331 325v2M331 359v2M331 363v2M332 341v2M332 363v2M333 307v2M333 351v2M333 359v2M333 363v2M334 297v4M334 329v2M334 351v2M334 359v2M334 363v2M334 367v2M335 289v14M335 351v2M335 359v2M335 363v2M336 351v2M336 363v2M336 367v2M337 351v2M337 363v2M337 367v2M338 321v2M338 351v2M338 363v2M339 351v2M339 363v2M340 285v10M340 297v2M340 351v2M340 363v2M340 367v2M341 281v14M341 351v2M341 363v2M341 367v2M342 285v12M342 351v2M342 363v2M342 367v2M343 281v2M343 285v8M343 295v2M343 351v2M343 363v2M343 367v2M344 281v2M344 285v10M344 351v2M344 363v2M345 279v2M345 283v10M345 367v2M346 279v14M346 351v2M346 363v2M346 367v2M347 281v12M347 363v2M347 367v2M348 281v8M348 351v2M348 363v2M348 367v2M349 279v12M349 295v2M349 347v2M350 281v14M350 319v2M351 279v16M352 279v12M352 351v2M352 363v2M352 367v2M353 281v8M353 291v4M353 319v2M353 363v2M353 367v2M354 281v10M354 293v2M354 363v2M354 367v2M355 281v14M355 351v2M355 363v2M355 367v2M356 281v12M356 353v2M356 363v2M356 367v2M357 281v14M358 281v12M358 331v2M359 281v10M359 293v4M360 285v8M360 351v2M360 367v4M361 285v12M361 363v2M361 367v2M362 285v10M362 363v2M362 367v4M363 283v2M363 287v10M363 367v4M364 287v12M365 285v16M366 287v8M366 351v2M367 287v12M367 351v2M367 363v2M367 367v2M368 289v12M368 351v2M368 359v2M372 291v8M372 315v2M372 351v2M372 363v2M372 367v2M373 289v2M373 295v4M373 329v2M373 351v2M373 359v2M373 363v2M374 295v4M374 345v2M374 351v2M374 363v2M374 367v2M375 303v2M375 313v2M375 363v2M376 329v2M377 345v2M378 291v2M378 295v6M378 351v2M379 293v10M379 313v2M379 359v2M379 363v2M380 295v8M380 325v2M381 293v12M381 339v2M382 289v2M382 295v12M383 293v10M383 305v2M383 351v2M383 359v2M384 295v12M384 351v2M384 359v2M384 363v2M385 293v16M385 351v2M385 359v2M385 363v2M386 293v2M386 297v12M386 359v2M386 363v2M387 295v10M387 307v4M387 359v2M387 363v2M388 297v10M388 359v2M388 363v2M389 297v2M389 301v6M389 351v2M389 363v2M390 295v2M390 299v10M390 311v2M390 351v2M390 359v2M390 363v2M391 297v2M391 301v4M391 307v2M391 359v2M391 363v2M392 295v12M392 309v2M392 359v2M392 363v2M393 299v10M393 351v2M393 355v2M393 359v2M393 363v2M394 301v12M394 351v2M394 359v2M394 363v2M395 299v12M395 359v2M395 363v2M487 285v2M487 289v12M487 303v2M487 351v2M487 359v2M487 363v2M488 283v2M488 287v12M488 351v2M488 363v2M489 285v14M489 351v2M489 363v2M490 285v14M490 351v2M490 359v2M490 363v2M491 281v14M491 351v2M491 359v2M491 363v2M492 281v10M492 293v2M492 351v2M492 359v2M492 363v2M493 275v2M493 279v12M493 351v2M493 363v2M494 275v14M494 351v2M494 359v2M494 363v2M495 273v2M495 277v10M495 351v2M495 363v2M496 273v2M496 277v10M496 351v2M496 363v2M496 367v2M497 275v10M497 287v2M497 351v2M497 363v2M497 367v2M498 271v2M498 275v10M498 287v2M498 351v2M498 363v2M498 367v2M499 275v12M499 351v2M499 363v2M500 269v16M500 363v2M501 273v12M501 351v2M501 363v2M501 367v2M502 269v2M502 273v10M502 287v2M502 351v2M502 363v2M502 367v2M503 269v2M503 273v6M503 351v2M503 363v2M503 367v2M504 271v2M504 275v8M504 285v2M504 363v2M504 367v2M505 275v10M505 363v2M505 367v2M506 275v10M506 351v2M506 363v2M506 367v2M507 273v14M507 289v2M507 351v2M507 363v2M507 367v2M508 273v16M508 351v2M508 363v2M509 275v2M509 279v8M509 351v2M509 355v2M510 277v14M510 347v2M511 279v12M512 279v14M512 363v2M512 367v4M513 279v12M513 293v2M513 363v2M513 367v2M514 281v10M514 293v2M514 351v2M514 363v2M514 367v4M515 281v12M515 363v2M515 367v4M516 283v10M516 363v2M516 367v4M517 285v6M517 293v2M517 367v2M518 285v10M518 351v2M518 363v2M518 367v2M519 283v10M519 351v2M519 363v2M519 367v4M520 285v12M520 367v4M521 285v10M521 367v2M522 285v12M522 363v2M522 367v4M523 283v2M523 287v6M523 351v2M523 367v2M524 287v12M524 351v2M524 363v2M524 367v4M525 285v12M525 351v2M525 363v2M525 367v2M526 285v2M526 289v10M526 301v2M526 363v2M526 367v2M527 287v12M527 363v2M527 367v2M528 285v16M529 289v10M530 287v12M531 289v6M536 291v4M537 291v10M538 291v10M538 305v2M538 351v2M538 363v2M539 293v12M539 351v2M539 363v2M539 367v2M540 289v2M540 293v8M540 303v2M540 351v2M540 363v2M541 291v2M541 295v10M541 351v2M541 363v2M541 367v2M542 291v12M542 351v2M542 359v2M542 363v2M543 287v2M543 293v10M543 305v2M543 351v2M543 359v2M543 363v2M543 369v2M544 295v10M544 351v2M544 363v2M545 293v10M545 305v2M545 351v2M545 363v2M546 295v8M546 307v2M546 351v2M546 359v2M546 363v2M547 293v12M547 307v2M547 351v2M547 359v2M547 363v2M548 293v2M548 297v8M548 309v2M548 351v2M548 359v2M548 363v2M549 293v12M549 359v2M549 363v2M550 295v12M550 351v2M550 359v2M550 363v2M551 293v2M551 299v10M551 351v2M551 359v2M551 363v2M552 295v2M552 299v4M552 305v6M552 351v2M552 359v2M553 295v4M553 301v6M553 309v2M553 351v2M553 359v2M553 363v2M554 297v14M554 351v2M554 359v2M555 297v14M555 359v2M555 363v2M556 297v12M556 311v2M556 359v2M556 363v2M557 299v10M557 359v2M557 363v2M558 297v2M558 301v10M558 351v2M558 355v2M558 359v2M559 299v10M559 359v2M560 295v2M560 301v12M560 359v2M560 363v2M561 301v12M561 359v2M562 301v14M562 359v2M562 363v2M563 303v8M563 313v2M563 355v2M563 359v2M563 363v2M564 297v2M564 301v14M564 359v2M565 301v12M565 315v2M565 355v2M565 359v2M566 301v12M566 315v2M566 353v4M566 359v2M567 303v12M567 355v2M567 359v2M568 303v2M568 307v8M568 351v2M568 355v2M568 359v2M569 301v16M569 351v6M569 359v2M570 311v2M570 359v2M571 319v2M571 355v2M571 359v2M572 353v4M572 359v2M573 353v4M573 359v2M574 353v4M574 359v2M574 363v2M575 355v2M575 359v2M576 355v2M576 359v2M577 353v4M577 359v2M578 355v2M578 359v2M579 353v4M579 359v2M580 353v4M580 359v2M581 353v4M581 359v2M582 353v4M582 359v2M583 353v4M583 359v2M584 353v4M585 355v2M585 359v2M586 355v2M586 359v2M587 355v2M587 359v2M588 359v2M589 359v2M590 359v2M591 359v2M592 359v2M607 363v2M620 359v2M621 359v2M622 359v2M623 359v2M624 355v2M625 355v2M625 359v2M626 353v4M627 355v2M627 359v2M628 353v4M628 359v2M629 355v2M629 359v2M630 353v4M630 359v2M631 353v4M631 359v2M632 345v2M632 353v4M633 353v4M633 359v2M634 353v4M634 359v2M635 353v4M636 353v4M636 359v2M637 355v2M637 359v2M638 355v2M638 359v2M639 329v2M639 353v4M640 355v2M640 359v2M641 353v4M641 359v2M642 353v2M642 359v2M643 307v8M643 353v4M643 359v2M644 303v12M644 353v4M644 359v2M645 301v14M645 355v2M645 359v2M646 303v12M646 355v2M646 359v2M647 299v14M647 351v2M647 359v2M648 299v14M648 355v2M648 359v2M649 293v2M649 297v14M649 351v2M649 359v2M650 299v14M650 351v2M650 359v2M650 363v2M651 295v12M651 309v4M651 351v2M651 355v2M651 359v2M651 363v2M652 293v2M652 299v8M652 359v2M653 295v14M653 351v2M653 359v2M653 363v2M654 295v12M654 351v2M654 359v2M654 363v2M655 295v12M655 351v2M655 359v2M655 363v2M656 291v14M656 351v2M656 359v2M656 363v2M657 291v16M657 351v2M657 363v2M658 293v14M658 351v2M658 359v2M658 363v2M659 293v10M659 305v2M659 351v2M659 359v2M659 363v2M660 295v8M660 351v2M660 359v2M660 363v2M661 293v10M661 351v2M661 359v2M661 363v2M662 293v8M662 303v2M662 351v2M662 359v2M662 363v2M663 291v2M663 295v8M663 305v2M663 351v2M663 363v2M663 367v2M664 293v12M664 307v2M664 351v2M664 359v2M664 363v2M665 295v12M665 351v2M665 359v2M665 363v2M666 293v2M666 297v6M666 305v2M666 351v2M666 359v2M667 295v12M667 309v2M667 351v2M667 359v2M667 363v2M668 297v10M668 351v2M668 359v2M668 363v2M669 297v12M669 311v2M669 351v2M669 359v2M669 363v2"/>
<path stroke="rgb(0,255,181)" d="M238 329v10M238 345v4M239 333v14M316 323v8M316 333v2M316 347v4M316 353v4M317 323v6M317 331v2M317 345v6M317 353v4M318 323v10M318 347v4M318 353v2M319 323v10M319 349v2M319 353v4M320 319v10M320 331v2M320 347v4M320 353v2M321 319v12M321 353v2M322 317v10M322 353v2M323 315v14M323 353v2M324 317v12M325 315v14M326 313v14M327 313v14M328 313v10M329 311v2M332 317v2M332 321v2M332 355v2M332 359v2M333 309v6M333 317v2M333 353v4M334 301v14M334 353v4M335 303v4M335 355v2M336 341v2M336 353v4M336 359v2M337 355v2M337 359v2M338 353v4M338 359v2M339 301v12M339 315v2M339 353v4M339 359v2M340 295v2M340 299v10M340 311v2M340 355v2M340 359v2M341 295v14M341 355v2M341 359v2M342 297v12M342 355v2M342 359v2M343 293v2M343 297v10M343 309v2M343 355v2M343 359v2M344 295v10M344 359v2M345 293v10M345 305v2M345 351v2M345 355v2M345 359v2M345 363v2M346 293v12M346 355v2M346 359v2M347 293v14M347 351v2M347 359v2M348 289v20M348 359v2M349 291v4M349 297v10M350 295v6M350 303v2M351 295v10M352 291v8M352 301v2M352 349v2M352 359v2M353 289v2M353 295v6M353 303v2M353 321v2M353 351v2M353 355v2M353 359v2M354 291v2M354 295v10M354 351v2M354 355v2M354 359v2M355 295v10M355 307v2M355 329v2M355 359v2M356 293v14M356 355v2M356 359v2M357 295v10M358 293v14M358 329v2M359 291v2M359 297v6M359 305v4M359 349v2M360 293v14M360 359v2M360 363v2M361 297v10M361 339v2M361 351v6M361 359v2M362 295v12M362 353v4M362 359v2M363 297v10M363 309v2M364 299v12M365 301v8M366 295v12M366 311v2M366 355v2M366 359v2M367 299v14M367 355v2M367 359v2M368 301v10M368 353v4M372 317v2M372 355v2M372 359v2M373 355v2M374 353v4M374 359v2M375 305v8M376 315v2M377 327v2M377 343v2M378 353v4M379 303v10M379 353v4M380 303v16M381 305v12M381 337v2M382 307v8M382 317v2M382 349v2M383 303v2M383 307v10M383 349v2M383 353v4M384 307v12M384 349v2M384 353v4M385 309v14M385 353v4M386 309v12M386 353v4M387 305v2M387 311v6M387 319v2M387 325v2M387 353v4M388 307v16M388 349v2M388 353v4M389 307v14M389 323v2M389 353v4M389 359v2M390 309v2M390 313v12M390 349v2M390 353v4M391 305v2M391 309v14M391 353v4M392 307v2M392 311v8M392 321v2M392 327v2M392 349v2M392 353v4M393 309v10M393 321v2M393 353v2M394 313v12M394 353v4M395 311v12M395 349v2M395 353v4M487 301v2M487 305v8M487 353v4M488 299v12M488 315v4M488 353v4M488 359v2M489 299v16M489 353v4M489 359v2M490 299v10M490 355v2M491 295v18M491 353v4M492 291v2M492 295v14M492 353v4M493 291v20M493 353v4M493 359v2M494 289v14M494 353v4M495 287v18M495 355v2M495 359v2M496 287v14M496 355v2M496 359v2M497 285v2M497 289v8M497 299v4M497 353v4M497 359v2M498 285v2M498 289v14M498 355v2M498 359v2M499 287v10M499 355v2M499 359v2M500 285v12M500 299v2M500 351v2M500 355v2M500 359v2M501 285v14M501 355v2M501 359v2M502 283v4M502 289v12M502 353v4M502 359v2M503 279v18M503 355v2M503 359v2M504 283v2M504 287v12M504 303v2M504 351v2M504 355v2M504 359v2M505 285v14M505 351v2M505 355v2M505 359v2M506 285v14M506 355v2M506 359v2M507 287v2M507 291v6M507 299v2M507 359v2M508 289v14M508 359v2M509 287v14M510 291v8M510 301v2M511 291v12M511 305v2M511 337v2M512 293v10M512 305v2M512 359v2M513 291v2M513 295v10M513 307v2M513 345v2M513 351v2M513 355v2M513 359v2M514 291v2M514 295v8M514 355v2M514 359v2M515 293v12M515 307v2M515 351v2M515 355v2M515 359v2M516 293v12M516 307v2M516 351v2M516 359v2M517 291v2M517 295v10M517 351v2M517 359v2M517 363v2M518 295v8M518 305v2M518 359v2M519 293v14M519 359v2M520 297v10M520 351v2M520 359v2M520 363v2M521 295v14M521 351v2M521 359v2M521 363v2M522 297v10M522 309v2M522 351v2M522 359v2M523 293v14M523 309v2M523 355v2M523 359v2M523 363v2M524 299v8M524 309v2M524 335v2M524 355v2M524 359v2M525 297v14M525 343v2M525 359v2M526 299v2M526 303v8M526 359v2M527 299v14M527 335v2M528 301v8M528 343v2M529 299v10M537 301v12M538 301v4M538 307v6M538 353v4M538 359v2M539 305v10M539 317v2M539 353v4M539 359v2M540 301v2M540 305v10M540 317v2M540 353v4M540 359v2M541 305v10M541 353v4M541 359v2M542 303v14M542 353v4M543 303v2M543 307v8M543 317v2M543 353v4M544 305v14M544 353v4M544 359v2M545 303v2M545 307v10M545 319v2M545 353v4M545 359v2M546 303v4M546 309v10M546 321v4M546 349v2M546 355v2M547 305v2M547 309v10M547 353v4M548 305v4M548 311v10M548 353v4M549 305v16M549 325v2M549 349v2M549 353v4M550 307v16M550 353v4M551 309v12M551 347v2M551 353v4M552 303v2M552 311v10M552 353v4M553 307v2M553 311v12M553 349v2M553 353v4M554 311v10M554 323v2M554 349v2M554 353v4M555 311v10M555 349v2M555 353v4M556 309v2M556 313v14M556 349v2M556 353v4M557 309v14M557 325v2M557 349v2M557 353v4M558 311v14M558 347v4M558 353v2M559 309v16M559 347v4M559 353v4M560 313v12M560 345v2M560 349v2M560 353v4M561 313v12M561 349v2M561 353v4M562 315v12M562 347v4M562 353v4M563 311v2M563 315v10M563 349v2M563 353v2M564 315v10M564 327v2M564 349v2M564 353v4M565 313v2M565 317v6M565 325v2M565 347v4M565 353v2M566 313v2M566 317v6M566 325v6M566 347v4M567 315v10M567 329v2M567 345v6M567 353v2M568 315v12M568 347v4M568 353v2M569 317v10M569 345v6M570 313v16M570 347v4M570 353v4M571 321v8M571 333v2M571 349v2M571 353v2M572 345v6M573 349v2M574 345v6M575 345v2M575 349v2M575 353v2M576 347v4M576 353v2M577 345v6M578 347v4M578 353v2M579 347v4M580 349v2M581 349v2M627 353v2M629 353v2M630 349v2M631 347v4M632 347v4M633 347v4M634 343v2M634 347v4M635 347v4M636 343v8M637 335v2M637 345v6M637 353v2M638 347v4M638 353v2M639 331v2M639 347v4M640 327v4M640 345v6M640 353v2M641 321v6M641 329v2M641 345v6M642 313v16M642 345v6M642 355v2M643 315v10M643 345v6M644 315v16M644 347v4M645 315v14M645 347v4M645 353v2M646 315v12M646 349v2M646 353v2M647 313v16M647 347v4M647 353v4M648 313v6M648 321v6M648 349v2M648 353v2M649 311v12M649 325v2M649 349v2M649 353v4M650 313v8M650 347v4M650 353v4M651 307v2M651 313v6M651 321v4M651 349v2M651 353v2M652 307v16M652 353v4M653 309v12M653 353v4M654 307v12M654 353v4M655 307v10M655 353v4M656 305v14M656 353v4M657 307v10M657 353v4M657 359v2M658 307v10M658 353v4M659 303v2M659 307v12M659 353v4M660 303v14M660 353v4M661 303v12M661 317v4M661 353v4M662 301v2M662 305v12M662 353v4M663 303v2M663 307v6M663 315v2M663 319v2M663 353v4M663 359v2M664 305v2M664 309v8M664 353v4M665 307v10M665 319v2M665 353v4M666 303v2M666 307v12M666 353v4M667 307v2M667 311v8M667 349v2M667 353v4M668 307v14M668 325v2M668 353v4M669 309v2M669 313v10M669 353v4"/>
<path stroke="rgb(0,255,191)" d="M238 339v6M316 331v2M316 335v12M317 329v2M317 333v12M318 333v14M319 333v16M320 329v2M320 333v14M321 331v10M321 343v8M322 327v12M322 341v10M323 329v10M323 341v10M324 329v8M324 341v10M325 329v10M325 343v2M326 327v12M327 327v4M328 347v2M329 343v6M330 345v4M331 327v4M332 319v2M332 323v10M333 315v2M333 319v14M334 315v14M334 349v2M335 347v4M335 353v2M336 347v4M337 347v4M337 353v2M338 323v4M338 347v4M339 313v2M339 317v8M339 347v4M340 309v2M340 313v10M340 347v2M340 353v2M341 309v14M341 349v2M341 353v2M342 309v8M342 319v6M342 347v4M342 353v2M343 307v2M343 311v10M343 349v2M343 353v2M344 305v16M344 353v4M345 303v2M345 307v12M345 321v2M345 349v2M345 353v2M346 305v14M346 321v2M346 349v2M346 353v2M347 307v12M347 321v2M347 347v4M347 353v4M348 309v8M348 349v2M348 353v4M349 307v12M349 345v2M350 301v2M350 305v14M351 305v14M352 299v2M352 303v16M352 353v4M353 301v2M353 305v10M353 323v2M353 353v2M354 305v14M354 321v2M354 349v2M354 353v2M355 305v2M355 309v12M355 331v2M355 349v2M355 353v4M356 307v10M356 319v2M357 305v16M358 307v10M358 321v2M359 303v2M359 309v12M360 307v12M360 353v4M361 307v16M361 325v2M361 349v2M362 307v10M362 319v6M363 307v2M363 311v14M364 311v12M365 309v14M365 347v4M366 307v4M366 313v8M366 323v2M366 353v2M367 313v8M367 323v2M367 347v4M367 353v2M368 311v14M368 349v2M372 319v10M372 349v2M372 353v2M373 347v4M373 353v2M374 347v4M376 317v12M377 329v2M378 347v4M380 319v6M381 317v12M382 315v2M382 319v12M382 335v2M382 345v4M383 317v16M383 345v4M384 319v12M384 335v2M384 345v4M385 323v12M385 343v8M386 321v16M386 347v4M387 317v2M387 321v4M387 327v10M387 343v8M388 323v14M388 343v6M389 321v2M389 325v8M389 343v8M390 325v14M390 341v8M391 323v12M391 341v2M391 345v6M392 319v2M392 323v4M392 329v4M392 341v8M393 319v2M393 323v14M393 343v8M394 325v12M394 339v12M395 323v26M487 313v18M487 343v8M488 311v4M488 319v12M488 345v6M489 315v12M489 331v2M489 345v6M490 309v22M490 343v8M490 353v2M491 313v16M491 347v4M492 309v18M492 345v6M493 311v14M493 347v4M494 303v14M494 319v4M494 349v2M495 305v14M495 321v2M495 347v4M495 353v2M496 301v18M496 321v2M496 347v4M496 353v2M497 297v2M497 303v18M497 347v4M498 303v16M498 349v2M498 353v2M499 297v20M499 347v4M499 353v2M500 297v2M500 301v12M500 315v2M500 349v2M500 353v2M501 299v16M501 317v2M501 349v2M501 353v2M502 301v18M502 349v2M503 297v20M503 353v2M504 299v4M504 305v8M504 349v2M504 353v2M505 299v16M505 349v2M505 353v2M506 299v16M506 349v2M506 353v2M507 297v2M507 301v8M507 311v6M507 353v4M508 303v10M508 317v2M508 349v2M508 353v4M509 301v18M509 353v2M510 299v2M510 303v16M510 345v2M511 303v2M511 307v10M511 319v2M512 303v2M512 307v14M513 305v2M513 309v10M513 347v4M513 353v2M514 303v14M514 319v4M514 337v2M514 347v4M514 353v2M515 305v2M515 309v10M515 353v2M516 305v2M516 309v12M516 353v4M517 305v16M517 353v4M518 303v2M518 307v14M518 349v2M518 353v4M519 307v10M519 321v2M519 349v2M519 353v4M520 307v14M520 323v2M520 349v2M520 353v4M521 309v12M521 349v2M521 353v4M522 307v2M522 311v8M522 321v2M522 353v4M523 307v2M523 311v12M523 353v2M524 307v2M524 311v12M524 349v2M524 353v2M525 311v14M525 347v4M525 353v4M526 311v14M526 353v4M527 313v12M528 309v16M529 309v16M538 313v16M538 347v4M539 315v2M539 319v12M539 347v4M540 315v2M540 319v10M540 347v4M541 315v16M541 347v4M542 317v14M542 347v4M543 315v2M543 319v8M543 329v2M543 347v4M544 319v12M544 347v4M545 317v2M545 321v10M545 333v2M545 347v4M546 319v2M546 325v8M546 347v2M546 353v2M547 319v14M547 335v4M547 347v4M548 321v12M548 347v4M549 321v4M549 327v8M549 347v2M550 323v18M550 347v4M551 321v16M551 343v4M551 349v2M552 321v16M552 341v4M552 349v2M553 323v16M553 341v4M554 321v2M554 325v14M554 341v8M555 321v16M555 341v8M556 327v12M556 341v8M557 323v2M557 327v12M557 341v8M558 325v22M559 325v12M559 339v8M560 325v20M560 347v2M561 325v10M561 337v4M561 343v6M562 327v10M562 339v8M563 325v14M563 341v8M564 325v2M564 329v20M565 323v2M565 327v20M566 323v2M566 331v16M567 325v4M567 331v14M568 327v20M569 327v18M570 329v18M571 329v4M571 335v14M572 329v16M573 333v16M574 337v8M575 339v6M575 347v2M576 341v6M577 343v2M578 345v2M633 345v2M634 345v2M635 341v6M636 339v4M637 337v8M638 333v14M639 333v14M640 331v14M641 327v2M641 331v14M642 329v16M643 325v20M644 331v16M645 329v18M646 327v22M647 329v18M648 319v2M648 327v22M649 323v2M649 327v22M650 321v16M650 339v8M651 319v2M651 325v12M651 341v8M652 323v14M652 343v8M653 321v10M653 333v4M653 343v8M654 319v16M654 343v8M655 317v16M655 345v6M656 319v14M656 345v6M657 317v14M657 345v6M658 317v14M658 345v6M659 319v8M659 347v4M660 317v10M660 329v2M660 345v6M661 315v2M661 321v6M661 329v2M661 345v6M662 317v16M662 345v6M663 313v2M663 317v2M663 321v8M663 345v6M664 317v14M664 345v6M665 317v2M665 321v12M665 345v6M666 319v14M666 345v6M667 319v12M667 333v2M667 343v6M668 321v4M668 327v8M668 343v2M669 323v14M669 339v6"/>
<path stroke="rgb(0,255,106)" d="M238 365v2M239 331v2M239 365v2M240 371v2M241 205v2M241 337v2M241 359v2M242 203v2M242 351v2M243 305v12M243 333v2M243 345v4M244 297v4M245 293v4M246 291v4M247 291v6M248 289v4M249 289v4M250 205v2M250 291v2M251 289v4M252 203v2M252 291v4M253 211v2M253 289v4M254 289v4M255 207v2M255 291v2M259 293v2M260 291v4M261 291v6M262 295v4M263 293v4M264 293v4M265 293v6M266 293v4M267 203v2M267 291v2M268 287v6M269 289v6M270 291v4M271 203v2M271 289v4M272 289v2M273 289v4M274 203v2M274 287v4M275 287v4M276 289v4M277 289v6M278 289v4M279 289v2M280 289v2M281 291v4M282 291v6M283 293v4M284 295v4M285 291v4M286 289v4M287 203v2M287 291v2M288 287v4M289 287v4M290 289v2M291 205v2M291 289v4M292 289v4M293 291v4M294 291v2M295 291v4M296 293v2M297 291v4M298 291v2M299 205v2M299 291v2M300 291v4M301 291v4M302 291v4M303 203v2M303 293v2M304 291v4M305 291v4M306 205v2M306 291v4M307 291v4M308 203v2M308 291v4M309 291v2M310 293v2M311 291v4M312 289v4M313 291v4M319 205v2M319 365v2M320 203v2M320 359v2M320 365v2M321 357v2M321 365v2M323 369v2M324 355v2M325 355v2M326 365v2M327 365v2M328 351v2M328 365v2M329 365v2M331 321v2M331 355v2M333 365v2M334 239v2M334 347v2M335 317v2M336 235v2M336 239v2M336 291v2M336 365v2M337 233v2M337 261v2M338 237v2M338 313v2M340 265v2M341 243v2M342 233v2M342 239v2M343 239v2M344 239v2M345 215v2M345 239v2M346 239v2M347 223v2M347 239v2M348 211v2M348 239v2M349 239v2M349 357v2M350 335v2M351 359v2M351 363v2M352 239v2M352 331v2M353 239v2M356 339v2M357 239v2M357 363v2M357 371v2M358 343v2M359 361v4M361 203v2M364 369v2M366 369v2M368 365v2M369 321v10M371 309v10M372 307v2M373 321v2M374 307v2M375 211v2M375 323v2M376 307v2M376 367v4M377 295v2M377 319v2M378 367v2M379 211v2M380 365v2M381 203v2M381 345v2M383 203v2M384 365v2M385 365v2M386 203v2M387 203v2M387 365v2M388 365v2M389 365v2M390 365v2M391 365v2M392 227v2M392 365v2M393 365v2M394 365v2M395 243v2M395 365v2M451 207v2M451 211v2M451 291v4M453 205v2M453 291v2M454 203v2M454 291v2M455 203v4M455 291v2M456 203v2M456 207v2M456 215v2M457 235v2M457 241v2M457 247v2M457 289v2M458 203v2M458 207v4M458 289v2M460 205v2M461 207v2M461 295v2M463 203v22M463 227v2M463 231v4M463 237v2M463 289v2M464 205v4M464 293v2M465 293v2M466 203v24M467 203v2M467 215v2M467 293v2M468 203v12M468 219v2M468 227v2M468 235v2M468 287v8M469 203v28M469 233v8M469 243v2M469 289v2M470 291v4M471 291v4M472 203v8M472 213v4M472 219v6M472 289v4M473 289v6M474 203v6M474 211v2M474 223v6M474 233v2M474 247v2M474 289v4M475 293v2M476 203v14M476 219v2M476 223v2M476 289v4M477 205v4M477 291v4M478 291v4M479 209v2M479 291v4M480 203v4M480 219v2M480 289v6M481 203v4M481 291v4M482 291v6M483 291v4M486 203v22M486 227v4M486 235v2M486 241v2M486 287v4M487 239v2M488 365v2M489 239v2M489 365v2M490 239v2M490 365v2M491 239v2M491 365v2M492 245v2M493 365v2M497 365v2M499 241v2M503 239v2M505 239v2M506 239v2M507 239v2M508 239v2M508 371v4M509 239v2M510 239v2M510 367v2M511 219v2M511 239v2M511 345v2M511 357v2M512 217v2M512 239v2M512 347v2M513 239v2M513 337v2M514 221v2M514 239v2M515 239v2M517 213v2M519 207v2M520 203v2M528 361v2M528 365v2M539 365v2M543 365v2M547 365v2M548 365v2M549 365v2M550 365v2M551 365v2M552 365v2M553 365v2M554 365v2M555 203v2M555 365v2M556 365v2M557 365v2M558 205v2M558 365v2M559 365v2M560 365v2M561 365v2M562 203v2M562 251v2M562 365v2M563 243v2M563 365v2M564 365v2M565 207v2M565 365v2M566 269v2M566 365v2M567 365v2M568 285v2M568 365v2M569 253v2M569 265v2M569 365v2M570 305v2M570 365v2M571 315v2M571 365v2M572 289v2M572 365v2M573 253v2M573 285v16M573 365v2M574 253v2M574 295v6M574 311v2M574 365v2M575 283v12M575 297v8M575 307v6M575 315v4M575 365v2M576 203v2M576 253v2M576 289v10M576 329v2M576 365v2M577 285v14M577 305v2M577 333v2M577 365v2M578 285v24M578 311v2M578 365v2M579 283v2M579 291v18M579 365v2M580 253v2M580 283v2M580 287v12M580 301v18M580 321v2M580 331v6M580 339v2M580 365v2M581 285v20M581 365v2M582 253v2M582 281v24M582 365v2M583 283v24M583 365v2M584 207v2M584 281v14M584 297v12M584 345v2M584 365v2M585 277v4M585 285v8M585 295v22M585 343v6M585 365v2M586 253v2M586 279v2M586 285v14M586 301v14M586 321v4M586 333v2M586 337v2M586 343v6M586 365v2M587 279v10M587 307v2M587 313v4M587 321v10M587 333v2M587 337v4M587 365v2M588 253v2M588 277v2M588 281v14M588 301v2M588 307v2M588 311v36M588 365v2M589 203v2M589 275v14M589 307v4M589 313v24M589 339v4M589 345v2M589 365v2M590 203v2M590 275v2M590 279v8M590 365v2M591 253v2M591 273v4M591 279v8M591 289v2M591 365v2M592 253v2M592 275v2M592 279v4M592 285v2M592 365v2M593 225v4M593 253v2M593 273v2M593 277v6M593 365v2M594 245v4M594 273v10M594 365v2M595 261v2M595 271v12M595 365v2M596 271v8M596 281v2M596 365v2M597 207v2M597 211v4M597 365v2M598 241v2M598 365v2M599 253v4M599 365v2M600 207v2M600 253v2M600 265v2M600 365v2M601 203v2M601 253v2M601 271v2M601 365v2M602 253v2M602 267v2M602 271v4M602 365v2M603 253v2M603 267v10M603 365v2M604 269v6M604 365v2M605 205v2M605 267v6M605 365v2M606 267v8M607 253v2M607 267v8M607 365v2M608 253v2M608 267v6M608 365v2M609 205v2M609 253v2M609 265v8M609 365v2M610 205v2M610 253v2M610 265v8M610 365v2M611 253v2M611 265v8M611 365v2M612 253v2M612 265v6M612 365v2M613 253v2M613 263v6M613 365v2M614 253v2M614 263v8M614 365v2M615 253v2M615 265v6M615 365v2M616 253v2M616 261v2M616 265v4M616 365v2M617 203v2M617 253v2M617 261v2M617 265v6M617 365v2M618 263v6M618 365v2M619 203v2M619 253v2M619 263v10M619 365v2M620 203v2M620 253v2M620 263v8M620 365v2M621 253v2M621 263v8M621 365v2M622 253v2M622 263v8M622 365v2M623 253v2M623 263v8M623 355v2M623 365v2M624 253v2M624 263v10M624 365v2M625 253v2M625 263v8M625 365v2M626 253v2M626 267v2M626 365v2M627 253v2M627 263v2M627 267v4M627 365v2M628 253v2M628 265v8M628 365v2M629 253v2M629 265v8M629 365v2M630 265v8M630 365v2M631 253v2M631 265v8M631 365v2M632 203v2M632 253v2M632 267v6M632 365v2M633 205v2M633 267v8M633 365v2M634 253v2M634 267v2M634 271v2M634 365v2M635 203v2M635 253v2M635 267v8M635 365v2M636 253v2M636 267v8M636 365v2M637 253v2M637 271v4M637 365v2M638 253v2M638 269v8M638 331v2M638 365v2M639 253v2M639 271v6M639 365v2M640 253v2M640 273v6M640 365v2M641 271v2M641 275v4M641 317v2M641 365v2M642 203v2M642 253v2M642 271v12M642 365v2M643 253v2M643 275v8M643 365v2M644 273v6M644 365v2M645 253v2M645 273v2M646 365v2M647 253v2M647 365v2M648 365v2M649 253v2M649 365v2M650 365v2M651 263v2M651 365v2M652 247v2M652 259v2M652 365v2M653 365v2M654 365v2M655 365v2M657 365v2M659 203v2M660 205v2M660 365v2M661 365v2M662 365v2M664 365v2M666 365v2M667 365v2M668 205v2M668 365v2"/>
<path stroke="rgb(0,255,87)" d="M239 239v2M241 239v2M243 239v2M243 351v2M243 367v4M243 373v2M244 307v6M245 239v2M245 301v4M246 299v4M247 239v2M247 299v4M248 295v4M249 239v2M249 295v2M250 295v4M251 239v2M251 297v2M252 297v4M253 295v4M254 295v4M255 297v2M257 239v2M259 239v2M259 301v4M260 299v4M261 239v2M261 299v4M262 303v4M263 301v4M264 299v6M265 239v2M265 303v4M266 303v4M267 239v2M267 297v4M268 239v2M268 295v4M269 239v2M269 297v4M270 299v2M271 239v2M271 295v4M272 239v2M272 293v6M273 239v2M273 295v4M274 239v2M274 295v4M275 295v2M276 239v2M276 297v2M277 239v2M277 297v4M278 239v2M278 295v4M279 239v2M279 295v2M280 239v2M280 295v4M281 299v4M282 301v4M283 301v6M284 239v2M284 303v4M285 297v4M286 297v2M287 295v4M288 239v2M288 295v2M289 293v4M290 295v2M291 295v2M292 239v2M292 295v4M293 239v2M293 299v4M294 239v2M294 297v4M295 299v2M296 301v4M297 239v2M297 299v2M298 297v2M299 297v4M300 239v2M300 299v2M301 297v4M302 239v2M302 299v2M303 299v2M304 299v2M305 297v2M306 239v2M306 299v2M307 239v2M307 297v4M308 239v2M308 295v4M309 295v4M310 297v4M311 297v2M312 295v2M313 297v2M321 361v2M322 359v2M323 357v2M329 351v2M332 311v2M333 265v2M335 319v2M336 295v2M337 265v2M337 335v2M339 287v2M340 261v2M341 241v2M343 229v2M344 217v2M348 221v2M349 219v2M349 367v2M350 339v4M351 355v4M351 365v2M352 325v4M355 207v2M356 335v2M357 359v4M357 365v2M358 347v2M359 367v2M363 355v2M364 367v2M365 359v2M369 345v4M371 295v10M373 319v2M374 309v2M375 325v2M375 349v2M376 305v2M377 297v2M377 317v2M377 355v2M378 329v2M378 365v2M378 369v2M380 213v2M381 347v2M381 367v2M382 359v2M383 365v2M387 219v2M389 221v2M390 233v2M451 299v4M453 301v4M454 301v2M455 299v4M456 301v2M458 301v2M460 301v2M461 299v4M462 299v4M463 297v4M464 299v2M466 295v6M467 299v4M468 297v4M469 295v6M470 299v4M471 299v4M472 299v4M473 299v4M474 297v6M475 299v4M476 299v2M477 299v4M478 299v4M479 299v4M480 299v2M481 299v4M482 299v4M483 299v4M486 253v2M486 297v4M489 255v2M505 229v2M516 215v2M531 295v4M531 301v2M531 307v4M531 313v2M531 317v4M531 327v8M531 339v2M531 353v2M531 357v8M531 367v6M532 277v6M532 285v12M532 305v4M532 311v6M532 321v4M532 327v4M532 333v6M532 341v2M532 347v2M532 351v2M532 355v2M532 361v2M532 365v4M532 371v2M533 267v12M533 281v4M533 291v8M533 303v2M533 309v4M533 315v4M533 325v2M533 329v10M533 341v2M533 347v2M533 351v10M533 363v6M533 371v4M534 269v4M534 279v22M534 303v14M534 319v2M534 325v4M534 331v2M534 335v2M534 339v4M534 347v8M534 357v8M534 367v8M535 277v6M535 285v6M535 295v2M535 301v2M535 305v6M535 315v2M535 319v8M535 329v2M535 337v6M535 347v6M535 355v4M535 365v2M535 373v2M536 295v6M536 305v14M536 321v4M536 327v16M536 347v2M536 351v4M536 357v4M536 363v2M536 367v6M537 313v12M537 327v6M537 335v2M537 339v4M537 347v2M537 351v2M537 357v6M537 365v2M537 369v2M537 373v2M538 203v2M538 239v2M543 211v2M547 211v2M560 245v2M565 249v2M569 293v2M570 273v2M571 281v2M572 239v2M572 323v2M573 301v2M574 313v2M590 295v32M590 333v2M592 295v2M592 299v2M592 309v2M592 349v2M593 213v4M593 289v22M593 317v4M593 329v2M594 289v8M594 299v2M594 303v2M595 255v2M595 289v62M595 353v2M596 267v2M596 289v12M596 323v28M596 353v2M597 225v4M597 277v2M597 287v8M597 335v2M597 339v2M597 345v6M597 353v4M598 239v2M598 247v2M598 285v4M599 259v2M600 239v2M600 269v2M600 355v2M601 275v2M602 281v2M603 239v2M603 283v2M604 281v4M605 279v6M606 283v2M607 279v4M608 279v2M609 239v2M609 277v4M610 277v4M611 277v4M612 277v4M613 275v6M614 275v6M615 277v4M616 275v4M617 275v4M617 359v2M618 275v4M619 273v6M620 275v2M621 275v4M622 275v4M623 277v2M624 277v2M625 277v2M626 277v2M627 277v4M627 351v2M628 277v2M629 277v4M630 277v4M631 279v4M632 279v6M633 277v8M634 239v2M634 281v4M635 279v2M635 283v2M636 283v4M637 283v4M638 283v6M639 283v6M639 327v2M640 287v4M641 285v6M642 239v2M642 287v2M643 303v2M644 297v2M646 239v2M647 265v2M648 261v2M649 257v2M649 271v2M653 255v2M663 233v2"/>
<path stroke="rgb(241,255,0)" d="M239 325v2M249 349v4M249 373v2M250 351v2M251 353v2M252 353v2M253 355v2M254 339v2M254 345v4M254 355v2M259 359v2M301 351v2M317 373v2M318 373v2M319 371v2M320 369v4M321 369v2M322 367v2M323 365v4M324 363v4M325 363v2M326 361v2M327 359v4M328 357v4M329 355v4M330 351v6M331 349v4M332 347v4M333 343v6M334 339v6M335 335v6M336 335v2M364 333v8M365 333v8M378 215v2M379 215v2M427 275v18M436 247v2M436 273v2M436 277v16M436 295v2M437 257v2M437 273v2M437 277v16M447 229v4M450 297v2M452 285v2M453 215v2M453 221v2M453 227v2M453 233v2M453 239v2M453 245v2M453 251v2M453 257v2M453 269v2M453 275v2M453 281v2M453 287v2M453 293v2M453 299v2M453 305v2M454 215v2M454 227v2M454 233v2M454 239v2M454 245v2M454 251v2M454 257v2M454 263v2M454 275v2M454 287v2M454 293v2M454 299v2M454 305v2M454 349v2M464 211v4M464 217v4M464 223v4M464 229v4M464 235v4M464 241v4M464 247v4M464 253v4M464 259v4M464 265v4M464 271v4M464 277v4M464 283v4M464 295v2M464 301v4M464 307v4M464 313v4M464 319v2M464 325v4M464 341v2M465 211v2M465 217v4M465 225v2M465 231v2M465 235v4M465 241v4M465 247v2M465 253v4M465 259v4M465 265v4M465 273v2M465 277v4M465 283v4M465 295v4M465 301v2M465 307v2M465 313v4M465 319v4M465 325v4M466 289v2M473 371v2M486 315v2M487 247v8M488 247v8M490 241v2M491 241v2M492 241v2M493 241v2M494 241v2M495 239v4M496 239v4M497 239v2M500 239v2M501 239v2"/>
<path stroke="rgb(0,248,3)" d="M239 329v2M243 339v2M243 359v2M245 371v2M246 357v2M247 357v2M247 361v2M248 325v10M248 337v10M248 353v4M248 359v2M248 363v2M248 367v2M249 321v6M249 359v2M249 363v2M250 327v14M250 343v6M250 355v2M250 363v2M250 367v4M253 325v14M253 341v10M253 359v2M253 363v2M253 367v4M253 373v2M254 325v2M254 329v2M254 335v2M254 349v2M254 359v2M254 363v2M254 367v4M260 357v2M261 371v2M264 371v2M267 351v2M268 323v28M268 353v4M268 359v2M268 367v4M268 373v2M269 351v2M270 357v2M270 361v2M271 337v2M272 323v28M272 353v4M272 359v2M272 367v4M272 373v2M273 347v2M273 359v2M273 373v2M274 323v6M274 331v2M274 335v2M274 341v10M274 353v4M274 359v2M274 367v4M274 373v2M275 321v4M276 351v2M277 357v2M279 321v6M279 331v20M279 353v2M279 359v2M279 369v2M279 373v2M280 327v6M280 335v10M280 347v4M280 353v2M280 359v2M280 369v2M280 373v2M281 357v2M281 371v2M285 361v2M288 319v6M289 317v2M290 319v8M291 319v6M292 327v4M292 337v4M292 349v2M292 355v2M292 363v2M292 367v4M292 373v2M293 357v2M293 361v2M294 351v2M295 351v2M296 371v2M297 357v2M297 361v2M298 343v2M298 359v2M299 331v2M299 359v2M299 367v2M301 373v2M305 353v4M305 367v2M308 321v6M308 331v2M308 335v2M308 343v2M308 359v2M309 321v4M309 341v4M310 329v2M310 359v2M311 321v6M312 315v2M313 323v8M313 349v2M313 369v2M318 363v2M319 369v2M321 371v2M327 351v2M335 329v2M337 283v2M338 253v4M338 297v2M339 273v2M340 229v2M340 247v2M341 235v2M388 225v2M451 345v2M451 351v4M452 325v8M453 369v6M454 367v2M454 371v4M455 369v6M456 363v2M456 367v8M457 319v6M458 343v2M458 349v6M460 367v8M461 365v2M461 371v2M462 367v2M462 371v4M463 331v4M463 337v4M464 355v10M465 371v4M466 331v8M467 371v4M468 331v6M469 325v8M470 351v2M470 367v2M470 371v2M471 367v6M472 335v2M472 343v2M476 339v4M477 355v2M477 359v8M478 373v2M479 371v4M480 351v12M481 371v4M482 369v6M483 367v2M483 371v4M486 259v2M486 323v8M488 261v2M493 239v2M552 227v2M564 247v2M567 259v2M569 271v2M570 279v2M572 299v2M573 309v2M573 327v2M610 359v2M615 357v2M616 311v14M617 307v8M617 319v2M617 323v6M618 305v8M618 321v10M619 307v8M619 319v8M620 309v14M620 325v2M621 307v6M621 321v10M622 309v16M622 355v2M623 305v10M623 323v6M623 331v2M624 313v2M627 309v20M632 343v2M639 325v2M640 305v2M640 319v2M641 299v2M642 293v2M655 247v2"/>
<path stroke="rgb(77,255,0)" d="M240 325v2M246 367v2M248 369v2M250 349v2M250 373v2M251 365v2M252 365v2M255 365v2M256 261v2M256 269v2M256 279v4M256 289v2M256 309v2M257 265v2M257 279v2M257 323v2M258 275v2M258 305v2M258 315v2M258 319v2M271 365v2M283 365v2M288 371v2M289 357v2M289 371v2M297 365v2M300 365v2M301 365v2M302 365v2M304 365v2M305 357v2M305 365v2M306 355v2M306 365v2M306 371v2M307 353v2M307 365v2M309 349v2M309 371v2M312 351v2M312 361v2M319 373v2M336 315v16M336 333v2M337 291v22M338 263v30M339 237v6M339 245v20M340 233v8M341 231v4M342 221v2M342 227v2M347 215v2M348 215v2M349 213v2M384 219v2M385 221v2M386 219v2M393 235v2M452 363v12M455 359v2M459 291v2M459 295v2M467 339v2M469 365v8M470 337v2M486 355v4M486 363v4M487 255v4M488 255v4M489 249v2M490 245v2M504 233v2M509 225v2M540 203v2M541 205v2M542 205v4M543 207v2M545 211v2M546 213v2M547 215v2M548 217v2M549 217v4M550 219v4M551 221v4M552 223v2M555 227v2M559 235v2M566 259v4M567 261v8M568 267v4M568 273v4M569 275v10M570 283v12M571 293v14M572 303v14M573 313v12M574 323v10M575 331v4M576 335v4M577 337v4M578 339v4M579 341v4M580 343v2M581 345v2M582 347v2M583 349v2M584 349v2M585 351v2M586 351v2M587 353v2M588 353v2M590 355v2M591 355v2M593 357v2M594 357v2M612 359v2M613 359v2M614 359v2M615 359v2M617 357v2M618 357v2M620 355v2M621 355v2M622 353v2M623 353v2M625 351v2M626 349v2M627 349v2M628 347v2M629 345v4M630 345v2M631 343v2M632 341v2M633 339v2M634 337v2M635 335v2M636 333v2M637 327v4M638 323v6M639 317v8M640 309v8M641 303v8M642 297v8M643 291v8M644 285v8M645 281v6M646 275v6M647 271v6M648 267v6M649 263v4M650 259v4M651 255v4M652 251v4M653 249v4M654 247v2M655 243v4M656 241v4M657 241v2"/>
<path stroke="rgb(93,255,0)" d="M240 327v6M248 365v2M250 365v2M253 365v2M267 361v2M268 365v2M285 365v2M298 365v2M299 365v2M301 363v2M305 359v4M307 371v2M308 357v2M308 371v2M310 351v2M310 365v2M312 357v2M312 371v2M332 351v2M335 333v2M340 231v2M341 227v4M348 213v2M385 219v2M393 249v2M394 243v2M395 255v2M417 203v2M417 207v2M417 213v4M417 221v4M417 227v2M417 233v2M417 237v2M417 243v2M417 249v2M417 255v2M417 261v2M454 345v2M457 349v6M469 373v2M477 367v2M479 365v2M480 369v2M486 367v8M487 259v4M489 247v2M558 233v2M559 241v2M662 233v2"/>
<path stroke="rgb(0,251,22)" d="M240 333v2M244 339v2M244 371v2M247 325v4M247 333v2M247 337v4M247 343v2M247 359v2M247 363v2M248 317v2M249 313v6M250 317v4M251 321v6M251 329v2M251 335v6M251 347v2M251 373v2M252 321v30M252 359v2M252 363v2M252 367v4M252 373v2M253 315v6M254 315v4M255 321v4M259 361v2M260 347v2M260 353v2M260 363v2M260 367v2M260 373v2M261 351v2M262 371v2M263 357v2M263 361v2M264 351v2M265 357v2M266 357v2M267 323v26M267 353v4M267 359v2M267 367v4M268 315v4M269 321v8M269 331v20M269 353v4M269 359v2M269 369v2M270 329v2M270 343v2M270 349v2M270 359v2M270 367v4M270 373v2M271 317v6M272 315v4M273 319v4M274 315v4M275 313v4M276 319v8M276 329v12M276 343v2M276 347v4M276 373v2M277 335v2M277 367v4M278 319v8M278 349v2M279 315v2M280 315v6M281 351v2M282 357v2M282 361v2M283 357v2M283 361v2M284 357v2M284 361v2M285 325v26M285 353v2M285 359v2M285 363v2M285 367v4M285 373v2M286 319v4M287 319v4M288 313v2M289 311v2M290 313v4M291 313v4M292 317v4M293 325v2M293 329v4M293 339v2M293 343v6M293 355v2M293 359v2M293 367v4M293 373v2M294 317v6M295 319v8M295 337v2M295 347v4M296 351v2M297 329v2M297 355v2M297 359v2M297 367v4M297 373v2M298 317v4M299 319v2M300 321v14M300 339v8M300 355v2M301 321v6M301 333v14M301 355v2M301 359v2M302 321v28M302 353v4M302 359v2M302 367v2M303 325v24M303 353v4M303 367v4M304 319v8M304 337v2M305 319v4M306 319v6M306 339v2M307 319v4M308 313v4M309 315v2M310 317v6M311 315v2M312 309v4M313 315v2M319 361v2M321 359v2M330 313v2M330 325v2M333 275v4M333 349v2M335 327v2M336 305v2M337 235v2M337 279v2M338 235v2M338 239v2M338 249v4M338 301v2M339 233v2M341 239v2M343 219v2M343 227v2M344 225v2M345 223v2M346 221v2M347 221v2M348 217v4M349 215v4M350 215v2M351 211v4M352 211v2M353 207v2M354 205v4M355 203v4M392 243v2M451 325v2M451 329v8M452 319v2M453 343v4M453 351v4M454 353v2M455 341v4M455 351v2M456 341v4M456 349v4M457 317v2M458 325v10M460 339v4M460 349v4M461 347v2M462 347v4M463 321v6M464 329v12M465 339v2M465 347v4M465 355v2M466 319v6M467 345v4M467 357v2M468 321v4M469 317v4M470 343v4M470 353v4M471 343v4M471 351v8M472 321v6M473 341v4M473 349v6M474 321v8M475 349v8M476 321v6M477 337v4M478 345v10M479 345v10M480 323v2M480 333v6M481 343v12M482 347v8M483 343v12M483 359v2M498 241v2M504 231v2M507 227v2M507 231v2M514 215v4M515 213v4M516 211v2M517 207v2M517 331v4M518 203v4M518 331v4M519 331v4M520 331v4M521 331v4M522 331v4M523 331v4M524 331v2M525 331v4M530 299v8M530 309v2M530 313v14M530 329v6M530 353v8M530 363v12M540 205v2M544 207v2M547 217v2M553 229v2M566 253v2M568 263v2M569 289v2M570 277v2M570 299v2M577 335v2M590 353v2M599 361v2M606 313v8M606 323v4M606 329v6M607 309v26M608 309v24M609 309v16M610 305v6M610 321v12M611 305v24M611 363v2M612 303v4M612 327v8M613 303v6M613 325v6M614 301v6M614 327v8M615 301v6M615 329v4M616 297v2M616 301v2M616 331v4M617 299v4M617 335v6M618 297v4M618 335v6M618 355v2M619 297v4M619 335v2M620 299v4M620 331v4M621 297v2M621 335v4M622 299v2M622 331v6M623 297v6M623 335v4M624 299v6M624 327v6M625 299v2M625 303v4M625 325v6M625 349v2M626 301v8M626 323v8M627 299v4M627 335v2M628 303v8M628 323v8M629 305v10M629 317v4M629 323v4M630 305v20M631 313v10M638 317v2M641 313v2M652 249v2M664 231v2"/>
<path stroke="rgb(0,255,78)" d="M241 329v2M241 365v2M242 371v2M243 343v2M244 313v4M245 305v2M246 303v2M247 303v4M248 299v2M249 297v4M250 299v2M251 299v4M252 301v2M253 299v2M254 299v2M255 299v4M259 305v4M260 303v2M261 303v6M262 307v6M263 305v6M264 305v2M265 307v4M266 307v4M267 301v2M268 299v2M269 301v2M270 301v4M271 299v2M272 299v2M273 299v2M274 299v2M275 297v4M276 299v4M277 301v4M278 299v4M279 297v4M280 299v2M281 303v2M282 305v4M283 307v2M284 307v4M285 301v4M286 299v4M287 299v4M288 297v2M289 297v2M290 297v4M291 297v2M292 299v2M294 301v2M295 301v2M296 305v2M297 301v4M298 299v4M299 301v2M300 301v4M301 301v2M302 301v2M303 301v4M304 301v2M305 299v4M306 301v2M307 301v2M308 299v2M309 299v2M310 301v2M311 299v2M312 297v2M313 299v4M316 363v2M318 361v2M319 363v2M325 353v2M327 335v2M328 327v2M328 361v2M329 359v2M331 297v2M332 283v2M333 267v2M334 287v2M335 273v2M336 297v2M337 267v2M337 329v2M337 333v2M338 309v2M339 225v2M339 285v2M349 369v2M351 353v2M352 207v2M353 205v2M356 333v2M359 365v2M359 369v2M362 341v2M363 353v2M364 349v2M366 371v2M369 349v8M371 287v8M372 303v2M373 317v2M374 311v2M375 347v2M376 363v2M377 207v2M377 357v2M378 311v2M379 323v2M380 335v2M380 353v2M383 371v2M389 229v2M392 247v2M451 303v4M452 301v2M454 303v2M455 293v2M455 303v4M457 301v2M460 303v6M461 303v4M462 303v6M463 301v4M465 305v2M466 301v2M467 289v4M467 303v6M468 301v4M469 301v2M470 303v6M471 303v6M472 303v2M473 303v4M474 303v2M475 303v4M476 301v4M477 303v4M478 303v4M479 303v4M480 301v6M481 303v4M482 303v4M483 303v4M486 301v2M509 223v2M509 229v2M548 213v2M567 275v2M568 283v2M570 303v2M571 313v2M572 291v2M588 355v2M589 351v2M590 327v6M590 335v8M591 351v2M592 351v2M593 207v2M593 211v2M593 311v6M593 321v8M593 331v20M593 353v2M594 235v4M594 297v2M594 301v2M594 305v40M594 347v4M594 353v4M594 359v2M595 253v2M595 351v2M596 265v2M596 301v22M597 229v6M597 275v2M597 295v40M597 337v2M597 341v4M598 249v4M598 283v2M598 289v8M598 355v2M599 261v4M599 291v4M599 299v2M599 335v4M599 343v8M599 353v4M600 271v2M600 297v2M600 335v6M600 343v2M600 347v4M600 353v2M601 277v2M601 355v2M603 285v4M603 353v4M604 285v4M604 355v2M605 285v4M605 353v4M605 359v2M606 281v2M606 285v2M607 283v2M608 281v6M609 281v4M610 281v4M611 281v4M612 281v2M613 281v2M613 355v2M614 281v2M615 281v2M616 279v4M617 279v4M618 279v4M619 279v4M620 277v6M621 279v4M622 279v4M623 279v2M624 279v4M625 279v6M625 353v2M626 279v4M627 281v2M628 279v6M629 281v4M630 281v4M631 283v4M632 285v2M633 285v4M634 285v4M635 285v4M636 287v4M637 287v6M638 289v4M639 289v4M640 291v4M641 291v4M642 289v2M642 309v2M644 279v2M645 291v2M653 245v2"/>
<path stroke="rgb(0,255,59)" d="M241 331v6M242 365v2M243 335v2M243 371v2M244 337v2M244 345v2M244 359v2M244 367v4M244 373v2M245 311v4M246 309v4M247 309v4M248 305v2M249 303v2M250 305v2M251 305v4M252 307v4M253 303v4M254 303v2M255 307v2M259 315v6M260 309v2M261 311v4M262 317v10M262 329v2M262 333v2M262 337v12M262 353v4M263 315v4M264 311v6M265 315v8M266 315v6M267 307v4M268 303v4M269 307v2M270 309v4M271 305v2M272 303v4M273 305v4M274 303v4M275 303v2M276 305v4M277 307v6M278 305v4M279 303v4M280 303v4M281 309v4M282 313v6M283 315v8M284 315v6M285 309v2M286 305v4M287 305v4M288 303v2M289 301v2M290 303v2M291 301v4M292 305v2M293 309v4M294 305v4M295 307v2M296 311v4M297 309v4M298 305v4M299 305v2M300 307v2M301 307v4M302 307v4M303 309v2M304 307v2M305 305v4M306 307v2M307 307v2M308 303v4M309 303v4M310 305v2M311 303v2M312 301v2M313 305v2M320 361v2M330 327v2M331 299v2M332 309v2M333 271v2M333 297v2M334 285v2M335 269v2M335 323v2M336 299v2M336 339v2M337 271v2M337 327v2M338 243v2M339 283v2M340 257v2M349 373v2M350 345v4M350 351v6M350 359v6M350 367v6M351 319v8M351 329v4M351 335v10M352 321v2M354 203v2M357 331v2M357 335v6M357 343v12M358 351v4M358 357v18M359 373v2M363 339v14M364 351v16M365 363v8M369 365v10M370 261v8M370 271v18M370 291v10M370 305v22M370 329v2M370 335v4M370 343v14M370 359v6M370 369v2M371 263v8M371 275v2M373 205v2M373 299v18M374 313v4M374 321v10M375 289v2M375 329v2M375 337v2M375 343v4M376 289v2M376 295v8M376 345v6M376 353v6M377 301v12M377 359v8M377 369v4M378 313v2M378 319v4M378 325v2M379 325v2M379 329v2M380 343v2M380 349v4M381 351v4M381 357v4M381 363v2M382 371v2M384 221v2M451 309v4M452 305v6M453 311v6M454 313v2M455 311v4M456 313v2M460 313v2M461 311v4M462 311v4M463 307v4M464 311v2M466 307v2M467 311v4M468 307v2M469 305v4M470 313v2M471 311v4M472 307v4M473 311v4M474 307v4M475 311v4M476 309v2M477 311v2M478 311v4M479 311v4M480 311v2M481 313v2M482 313v2M483 313v2M486 255v2M486 307v2M508 225v2M550 217v2M562 241v2M568 261v2M571 283v2M572 293v2M574 315v2M576 331v2M579 339v2M590 351v2M591 357v2M593 351v2M594 225v4M594 351v2M595 247v2M596 211v6M596 259v2M597 239v4M598 253v4M598 277v4M598 313v4M598 319v2M598 323v4M598 333v4M598 351v2M599 265v2M599 285v2M599 351v2M599 357v2M600 291v4M600 311v2M600 317v2M601 281v2M601 299v4M601 305v34M601 357v2M602 285v2M602 345v2M602 349v2M603 289v2M603 321v6M603 329v10M603 351v2M603 357v2M604 293v4M604 337v10M604 357v2M605 295v2M605 335v2M605 339v6M605 351v2M605 357v2M606 291v2M607 289v4M608 289v4M608 353v4M609 289v4M609 347v2M610 287v4M610 353v4M611 287v6M611 347v4M612 287v4M612 353v4M613 287v4M613 347v4M614 287v2M614 347v4M615 287v4M615 349v2M616 287v2M616 349v2M616 353v2M617 285v4M617 355v2M618 285v4M618 353v2M619 287v2M619 353v2M620 285v4M620 349v2M620 353v2M621 285v4M622 285v4M623 287v2M624 287v2M624 347v4M625 287v2M625 345v4M626 287v2M626 343v4M627 287v2M628 287v4M629 289v2M629 339v4M630 289v4M631 289v4M632 291v4M633 293v4M633 331v6M634 293v4M635 293v8M635 329v2M636 297v10M636 309v4M636 315v2M636 319v8M637 299v24M637 333v2M638 305v8M639 303v6M640 301v2M641 295v2M645 275v2M651 251v2M654 243v2M654 251v2M658 241v2M669 227v2"/>
<path stroke="rgb(0,254,40)" d="M241 357v2M242 359v2M243 363v2M244 357v2M245 321v18M245 353v4M245 359v2M246 317v4M247 315v6M248 311v2M249 309v2M250 311v2M251 313v6M252 313v4M253 307v6M254 309v2M255 313v2M259 327v8M259 341v2M259 345v2M259 355v2M259 363v2M259 367v4M259 373v2M260 317v4M261 321v20M261 343v8M261 353v4M261 363v2M261 367v2M262 351v2M263 353v2M263 367v4M263 373v2M264 325v26M264 353v4M264 359v2M264 367v4M264 373v2M266 367v4M267 313v4M268 309v2M269 313v4M270 315v4M271 311v2M272 309v4M274 309v2M275 307v4M276 313v4M277 315v6M278 311v4M279 309v2M280 311v2M281 319v6M281 343v2M281 347v2M282 327v6M282 335v2M282 339v2M282 347v2M282 353v2M282 359v2M282 367v4M282 373v2M283 367v4M285 315v4M286 311v4M287 311v4M288 307v2M289 307v2M290 307v4M291 307v4M292 311v4M293 315v4M294 311v4M295 313v4M296 319v6M296 327v12M296 341v2M296 345v4M296 353v4M296 359v2M297 315v6M298 311v4M299 311v2M300 313v4M301 313v4M302 315v2M303 315v4M304 311v4M305 311v4M306 311v6M307 313v2M308 309v2M309 309v2M312 305v2M313 311v2M317 371v2M326 353v2M327 347v2M329 321v2M330 349v2M332 307v2M333 273v2M333 339v2M334 283v2M335 267v2M335 325v2M336 303v2M337 275v2M337 325v2M338 247v2M339 231v2M339 279v2M341 237v2M347 213v2M356 203v2M391 237v2M451 317v4M452 313v4M453 319v10M453 331v2M454 319v6M454 329v2M455 297v2M455 321v6M455 329v2M456 319v6M457 283v2M458 317v2M460 319v4M460 325v4M461 323v2M462 321v6M462 329v2M463 293v2M463 313v4M464 317v2M465 323v2M465 329v2M466 313v4M467 319v8M467 329v2M468 313v2M469 313v2M470 319v10M471 319v8M472 315v4M473 319v10M474 315v4M475 321v6M476 315v2M477 319v2M478 321v6M479 321v6M480 317v4M482 329v2M483 327v2M486 311v4M489 253v2M493 243v2M500 235v2M502 233v2M510 227v2M517 205v2M541 207v2M549 221v2M550 223v2M555 233v2M568 281v2M571 311v2M572 295v2M575 325v2M578 337v2M584 351v2M594 203v6M594 215v4M595 203v2M595 207v2M595 213v6M595 221v4M595 227v4M595 233v2M595 237v6M596 229v2M596 239v2M597 245v2M597 249v4M597 259v6M598 261v2M598 267v8M598 357v2M599 269v8M600 279v4M600 287v2M601 285v10M602 289v2M602 295v4M602 319v2M602 327v2M602 357v2M603 295v2M603 301v4M604 301v6M604 313v2M604 317v2M605 309v6M605 317v4M605 323v2M606 299v4M606 345v6M607 297v6M607 341v2M607 347v4M608 297v8M608 339v8M608 357v4M609 295v8M609 333v10M610 295v4M610 341v8M610 357v2M611 295v4M611 335v4M612 293v4M612 341v6M612 351v2M612 357v2M613 293v4M613 337v6M614 293v2M614 337v6M615 293v4M615 339v4M616 291v4M616 339v8M617 291v2M617 345v4M618 291v2M618 347v4M619 291v4M619 343v4M619 351v2M620 293v2M620 339v4M621 291v2M621 345v4M622 291v4M622 339v8M622 351v2M623 291v4M623 345v4M624 293v2M624 337v2M625 293v4M625 335v4M626 293v6M626 337v2M627 293v2M627 345v2M628 293v6M628 335v4M629 295v6M629 331v6M630 295v4M630 333v6M630 341v2M631 297v4M631 303v2M631 331v2M631 335v2M632 301v8M632 327v6M633 303v22M634 305v20M634 333v2M635 307v4M635 315v2M635 321v2M638 315v2M642 291v2M642 307v2M643 301v2M644 281v2M644 295v2M647 279v2M650 265v2M651 261v2M655 241v2M659 239v2M663 227v2"/>
<path stroke="rgb(0,255,69)" d="M242 333v2M242 339v2M242 361v2M244 317v20M244 347v4M244 353v4M245 307v4M246 305v4M247 307v2M248 301v4M249 301v2M250 301v4M251 303v2M252 303v4M253 301v2M254 301v2M255 303v4M259 309v6M260 305v4M261 309v2M262 313v4M263 311v4M264 307v4M265 311v4M266 311v4M267 303v4M268 301v2M269 303v4M270 305v4M271 301v4M272 301v2M273 301v4M274 301v2M275 301v2M276 303v2M277 305v2M278 303v2M279 301v2M280 301v2M281 305v4M282 309v4M283 309v6M284 311v4M285 305v4M286 303v2M287 303v2M288 299v4M289 299v2M290 301v2M291 299v2M292 301v4M293 303v6M294 303v2M295 303v4M296 307v4M297 305v4M298 303v2M299 303v2M300 305v2M301 303v4M302 303v4M303 305v4M304 303v4M305 303v2M306 303v4M307 303v4M308 301v2M309 301v2M310 303v2M311 301v2M312 299v2M313 303v2M322 357v2M323 363v2M329 319v2M329 335v2M330 309v2M330 357v2M331 319v2M332 285v2M333 269v2M333 299v2M335 271v2M335 321v2M337 269v2M338 241v2M338 307v2M340 227v2M340 259v2M344 227v2M349 365v2M349 371v2M350 217v2M350 343v2M351 215v2M351 349v4M352 213v2M352 323v2M353 211v2M356 331v2M357 355v4M358 349v2M359 371v2M365 361v2M366 373v2M369 357v8M371 271v4M371 277v10M372 301v2M375 327v2M376 303v2M376 343v2M376 361v2M376 365v2M377 215v4M377 299v2M377 315v2M378 327v2M378 371v4M380 337v2M381 349v2M381 365v2M382 361v2M383 373v2M390 223v2M391 225v2M391 239v2M393 261v2M394 237v2M395 245v2M451 307v2M452 303v2M453 307v4M454 307v6M455 307v4M456 307v2M458 307v2M460 309v4M461 307v4M462 309v2M463 305v2M464 305v2M465 311v2M466 303v4M467 309v2M468 305v2M469 303v2M470 309v4M471 309v2M472 305v2M473 307v4M474 305v2M475 307v4M476 305v4M477 307v4M478 307v4M479 307v4M480 307v4M481 307v6M482 307v6M483 307v6M486 303v4M490 249v2M492 239v2M502 237v2M504 235v2M514 213v2M515 217v2M516 207v2M517 203v2M519 205v2M542 203v2M549 215v2M565 261v2M566 267v2M569 267v2M573 303v2M575 323v2M576 339v2M577 341v2M578 343v2M582 349v2M586 349v2M590 343v8M593 203v4M594 229v6M594 239v2M594 345v2M595 249v4M596 203v6M596 261v4M596 351v2M597 235v4M597 271v4M597 351v2M598 281v2M598 297v16M598 317v2M598 321v2M598 327v6M598 337v14M598 353v2M599 287v4M599 295v4M599 301v34M599 339v4M600 273v2M600 295v2M600 299v12M600 313v4M600 319v16M600 341v2M600 345v2M600 351v2M600 357v2M601 279v2M601 303v2M601 339v12M601 353v2M602 283v2M602 353v4M603 339v12M604 289v4M604 347v4M604 353v2M605 289v6M605 345v6M606 287v4M607 285v4M608 287v2M609 285v4M609 353v4M610 285v2M610 363v2M611 285v2M611 353v4M612 283v4M613 283v4M613 353v2M614 283v4M614 353v4M615 283v4M615 353v4M616 283v4M616 355v2M617 283v2M618 283v2M619 283v4M620 283v2M621 283v2M622 283v2M623 281v6M624 283v4M625 285v2M626 283v4M627 283v4M628 285v2M629 285v4M630 285v4M630 347v2M631 287v2M632 287v4M633 289v4M634 289v4M635 289v4M636 291v6M637 293v6M638 293v12M638 313v2M639 293v10M640 295v6M641 315v2M646 285v2M648 275v2"/>
<path stroke="rgb(0,255,50)" d="M242 335v4M243 357v2M244 351v2M245 315v6M246 313v4M247 313v2M248 307v4M249 305v4M250 307v4M251 309v4M252 311v2M254 305v4M255 309v4M259 321v6M259 335v6M259 343v2M259 347v4M259 353v2M260 311v6M261 315v6M262 327v2M262 331v2M262 335v2M262 349v2M262 359v2M262 363v2M262 367v4M262 373v2M263 319v32M263 355v2M263 359v2M263 363v2M264 317v8M265 323v28M265 353v4M265 359v2M265 367v4M265 373v2M266 321v30M266 353v4M266 359v2M266 373v2M267 311v2M268 307v2M269 309v4M270 313v2M271 307v4M272 307v2M273 309v4M274 307v2M275 305v2M276 309v4M277 313v2M278 309v2M279 307v2M280 307v4M281 313v6M282 319v8M282 333v2M282 337v2M282 341v6M282 349v2M283 323v28M283 353v2M283 359v2M283 373v2M284 321v30M284 353v2M284 359v2M284 363v2M284 367v4M284 373v2M285 311v4M286 309v2M287 309v2M288 305v2M289 303v4M290 305v2M291 305v2M292 307v4M293 313v2M294 309v2M295 309v4M296 315v4M297 313v2M298 309v2M299 307v4M300 309v4M301 311v2M302 311v4M303 311v4M304 309v2M305 309v2M306 309v2M307 309v4M308 307v2M309 307v2M310 307v6M311 305v4M312 303v2M313 307v4M325 349v2M326 343v2M328 329v2M328 341v2M330 311v2M332 287v2M335 343v2M336 301v2M337 273v2M338 245v2M338 305v2M339 281v2M340 255v2M342 231v2M345 225v2M350 349v2M350 357v2M350 365v2M350 373v2M351 327v2M351 333v2M352 319v2M356 329v2M357 329v2M357 333v2M357 341v2M358 355v2M362 339v2M365 371v4M370 269v2M370 289v2M370 301v4M370 327v2M370 357v2M370 365v4M370 371v4M371 261v2M372 299v2M374 317v4M375 335v2M376 205v2M376 351v2M376 359v2M377 313v2M377 367v2M377 373v2M378 315v4M378 323v2M379 327v2M379 335v4M380 345v4M381 215v2M381 355v2M381 361v2M382 363v8M382 373v2M383 217v2M392 245v2M393 259v2M395 247v2M451 313v4M452 311v2M453 285v2M453 317v2M454 315v4M455 315v6M456 317v2M457 307v2M458 313v2M460 315v4M461 315v4M462 315v6M463 311v2M465 317v2M466 309v4M467 315v4M468 309v4M469 309v4M470 315v4M471 315v4M472 311v4M473 315v4M474 311v4M475 315v6M476 311v4M477 313v6M478 315v6M479 315v6M480 313v4M481 315v6M482 315v2M486 309v2M514 219v2M515 211v2M517 211v2M543 205v2M551 219v2M552 221v2M553 223v2M554 231v2M567 273v2M569 291v2M570 275v2M570 301v2M572 321v2M573 305v2M573 329v2M580 341v2M584 347v2M586 353v2M588 351v2M594 211v4M594 219v6M595 205v2M595 211v2M595 219v2M595 225v2M595 231v2M595 235v2M595 243v4M596 217v12M596 231v8M596 241v18M597 243v2M597 247v2M597 253v6M597 265v6M598 257v4M598 263v4M598 275v2M599 267v2M599 277v8M600 275v4M600 283v4M600 289v2M601 283v2M601 295v4M601 351v2M602 287v2M602 291v4M602 299v20M602 321v6M602 329v16M602 347v2M602 351v2M603 291v4M603 297v4M603 305v16M603 327v2M604 297v4M604 307v6M604 315v2M604 319v18M604 351v2M604 359v2M605 297v12M605 315v2M605 321v2M605 325v10M605 337v2M606 293v6M606 353v4M606 359v2M607 293v4M607 353v4M607 359v2M608 293v4M608 347v4M609 293v2M609 343v4M609 349v4M609 357v2M610 291v4M610 349v2M611 293v2M611 339v8M611 351v2M611 357v2M612 291v2M612 347v4M613 291v2M613 343v4M613 351v2M613 357v2M614 289v4M614 343v4M614 351v2M615 291v2M615 343v6M615 351v2M616 289v2M616 347v2M616 351v2M617 289v2M617 349v2M617 353v2M618 289v2M619 289v2M619 347v4M620 289v4M620 343v6M620 351v2M620 357v2M621 289v2M621 349v2M622 289v2M622 347v4M623 289v2M623 349v2M624 289v4M624 339v8M625 289v4M625 339v6M626 289v4M626 339v4M626 347v2M627 289v4M628 291v2M628 339v6M629 291v4M629 337v2M629 343v2M630 293v2M630 339v2M631 293v4M631 333v2M631 337v4M632 295v6M632 333v6M633 297v6M633 325v6M634 297v8M634 325v8M635 301v6M635 311v4M635 317v4M635 323v6M636 307v2M636 313v2M636 317v2M640 321v2M643 285v2M646 271v2M657 243v2M658 233v2M660 237v2M661 229v2"/>
<path stroke="rgb(0,253,31)" d="M242 357v2M243 365v2M245 369v2M245 373v2M246 321v22M246 349v2M246 353v4M246 359v2M246 363v2M246 373v2M247 321v4M247 329v4M247 335v2M247 341v2M247 353v4M248 313v4M249 311v2M250 313v4M251 319v2M252 317v4M253 313v2M254 311v4M255 315v6M259 351v2M260 321v26M260 349v2M260 355v2M260 369v2M261 341v2M261 369v2M261 373v2M262 357v2M262 361v2M263 351v2M264 363v2M265 351v2M266 351v2M267 317v6M268 311v4M269 317v4M270 319v10M270 331v12M270 345v4M270 353v4M271 313v4M272 313v2M273 313v6M274 311v4M275 311v2M276 317v2M277 321v14M277 337v14M277 353v4M277 359v2M277 373v2M278 315v4M279 311v4M280 313v2M281 325v18M281 345v2M281 349v2M281 353v2M281 359v2M281 367v4M281 373v2M282 351v2M283 351v2M284 351v2M285 319v6M286 315v4M287 315v4M288 309v4M289 309v2M290 311v2M291 311v2M292 315v2M293 319v6M293 327v2M293 333v6M293 341v2M293 349v2M293 353v2M294 315v2M295 317v2M296 325v2M296 339v2M296 343v2M296 349v2M296 367v4M296 373v2M297 321v8M297 331v20M297 353v2M298 315v2M299 313v6M300 317v4M301 317v4M302 317v4M303 319v6M304 315v4M305 315v4M306 317v2M307 315v4M308 311v2M309 311v4M310 313v4M311 309v6M312 307v2M313 313v2M327 337v2M329 333v2M331 301v2M331 317v2M332 289v2M332 343v2M333 295v2M334 281v2M335 265v2M337 277v2M337 323v2M338 233v2M338 303v2M339 277v2M340 251v4M346 223v2M347 219v2M374 207v2M393 233v2M393 257v2M451 321v4M451 327v2M452 317v2M453 329v2M453 333v6M454 325v4M454 331v6M454 343v2M455 327v2M455 331v6M456 325v12M457 313v2M458 319v6M460 323v2M460 329v6M461 329v2M461 341v2M462 327v2M462 331v4M462 339v4M463 317v4M464 323v2M465 331v8M466 317v2M467 327v2M467 331v8M468 315v6M469 315v2M470 329v8M471 327v10M472 319v2M473 329v6M474 319v2M475 327v6M475 341v2M476 317v4M477 321v10M478 327v2M478 337v4M479 335v4M480 321v2M481 331v6M482 331v6M482 343v4M483 329v8M483 341v2M486 257v2M513 217v2M516 213v2M518 207v2M519 203v2M524 333v2M530 307v2M530 311v2M530 327v2M530 351v2M530 361v2M548 219v2M556 235v2M564 257v2M566 265v2M569 269v2M571 285v2M573 307v2M574 317v2M574 333v2M581 343v2M593 355v2M597 357v2M606 303v10M606 321v2M606 327v2M606 335v10M606 351v2M606 357v2M607 303v6M607 335v6M607 343v4M607 351v2M607 357v2M608 305v4M608 333v6M608 351v2M609 303v6M609 325v8M609 359v2M610 299v6M610 333v8M610 351v2M611 299v6M611 329v6M612 297v6M612 335v6M612 363v2M613 297v6M613 331v6M614 295v6M614 335v2M614 357v2M615 297v4M615 333v6M616 295v2M616 299v2M616 335v4M617 293v6M617 341v4M617 351v2M618 293v4M618 341v6M618 351v2M619 295v2M619 337v6M620 295v4M620 335v4M621 293v4M621 339v6M621 351v2M622 295v4M622 337v2M623 295v2M623 339v6M624 295v4M624 333v4M625 297v2M625 301v2M625 331v4M626 299v2M626 331v6M627 295v4M627 337v8M628 299v4M628 331v4M628 345v2M629 301v4M629 321v2M629 327v4M630 299v6M630 325v8M631 301v2M631 305v8M631 323v8M631 345v2M632 309v18M636 327v2M636 335v2M637 323v2M639 309v2M640 303v2M641 297v2M645 289v2M647 267v2M648 263v2M649 259v2M649 269v2M650 255v2M652 257v2M656 245v2"/>
<path stroke="rgb(0,249,12)" d="M243 337v2M243 341v2M244 341v4M245 357v2M245 361v2M246 351v2M246 361v2M247 351v2M247 373v2M248 319v6M248 335v2M249 319v2M250 321v6M250 341v2M250 359v2M251 327v2M251 331v4M251 341v6M251 349v2M251 355v2M251 359v2M251 363v2M251 367v4M253 321v4M253 339v2M254 319v6M255 325v26M255 353v2M255 359v2M255 363v2M255 367v4M255 373v2M259 371v2M260 351v2M261 357v2M263 371v2M264 357v2M265 371v2M266 371v2M267 349v2M267 373v2M268 319v4M269 329v2M269 367v2M269 373v2M270 351v2M271 323v14M271 339v12M271 353v4M271 359v2M271 367v4M271 373v2M272 319v4M273 323v24M273 349v2M273 353v4M273 367v4M274 319v4M275 317v4M276 327v2M276 341v2M276 345v2M276 353v4M276 359v2M276 367v4M277 351v2M277 361v2M278 327v22M278 353v2M278 359v2M278 367v4M278 373v2M279 317v4M280 321v6M280 333v2M280 345v2M280 367v2M281 361v2M282 371v2M283 371v2M284 371v2M285 351v2M286 323v28M286 353v2M286 359v2M286 363v2M286 367v4M286 373v2M287 323v28M287 353v2M287 359v2M287 363v2M287 367v4M287 373v2M288 315v4M289 313v4M290 317v2M291 317v2M292 321v6M292 331v6M292 341v8M292 353v2M292 359v2M293 351v2M293 363v2M294 323v28M294 353v4M294 359v2M294 367v4M294 373v2M295 327v10M295 339v8M295 353v4M295 359v2M295 367v4M295 373v2M296 357v2M296 361v2M297 351v2M298 321v22M298 345v6M298 353v4M298 367v4M298 373v2M299 321v10M299 333v18M299 353v4M299 369v2M299 373v2M300 335v4M300 347v2M300 353v2M300 359v2M300 367v4M300 373v2M301 327v6M301 347v2M301 353v2M301 367v4M302 369v2M303 359v2M303 363v2M304 327v10M304 339v10M304 353v4M304 363v2M304 367v4M305 323v22M305 349v2M305 363v2M305 369v2M306 325v14M306 341v4M306 349v2M306 353v2M306 363v2M306 367v4M307 323v22M307 349v2M307 363v2M307 367v4M308 317v4M309 317v4M310 323v6M310 331v14M310 355v2M310 363v2M310 367v2M310 373v2M311 317v4M312 313v2M313 317v6M324 367v2M325 351v2M326 345v8M327 339v8M327 349v2M328 331v10M329 323v10M330 315v10M331 303v14M332 291v16M333 279v16M334 261v20M335 261v4M336 307v2M337 281v2M337 321v2M338 299v2M339 275v2M340 249v2M349 211v2M350 211v2M375 203v2M390 231v2M392 229v2M393 255v2M394 239v2M395 249v2M451 337v2M451 343v2M452 321v4M453 355v2M453 361v8M454 351v2M454 355v2M454 361v6M454 369v2M455 353v4M455 361v8M456 353v2M456 359v4M456 365v2M458 341v2M460 359v8M461 359v2M462 351v2M462 357v10M462 369v2M463 327v4M464 347v4M465 357v14M466 325v6M467 355v2M467 359v12M468 325v6M469 321v4M470 357v10M470 369v2M471 359v8M472 327v8M473 355v16M474 329v6M475 333v2M475 357v12M476 327v6M477 347v8M477 357v2M478 355v12M479 355v10M480 343v8M481 355v8M481 369v2M482 317v2M482 341v2M482 355v6M483 355v4M483 369v2M486 317v6M498 237v2M511 225v2M512 219v2M513 219v2M546 215v2M551 225v2M557 237v2M561 247v2M565 259v2M567 257v2M567 271v2M568 279v2M571 287v2M571 309v2M572 297v2M572 319v2M574 319v2M575 327v2M581 347v2M582 345v2M603 359v2M610 311v10M612 307v20M613 309v16M614 307v20M615 307v22M616 303v8M616 325v6M616 359v2M617 303v4M617 329v6M618 301v4M618 331v4M619 301v6M619 327v8M620 303v6M620 323v2M620 327v4M621 299v8M621 331v4M621 353v2M622 301v8M622 325v6M623 303v2M623 329v2M623 333v2M623 351v2M624 305v8M624 315v12M625 307v18M626 309v14M627 303v6M627 329v6M628 311v12M628 349v2M629 315v2M635 331v2M638 329v2M639 311v2M643 287v2M645 277v2M646 283v2M648 273v2M653 253v2M661 235v2M666 229v2"/>
<path stroke="rgb(27,250,0)" d="M243 361v2M244 361v2M248 361v2M250 357v2M250 361v2M251 357v2M251 371v2M252 351v2M252 371v2M253 351v2M253 361v2M254 351v4M255 371v2M259 365v2M261 361v2M263 365v2M264 365v2M266 365v2M268 351v2M269 371v2M271 357v2M271 361v2M272 351v2M272 361v2M273 357v2M273 361v2M273 371v2M274 351v2M276 371v2M278 357v2M278 371v2M279 351v2M280 351v2M280 357v2M280 361v2M286 357v2M286 371v2M287 357v2M287 371v2M288 333v2M288 347v2M288 359v2M289 325v26M289 353v4M289 359v2M289 363v2M289 367v4M289 373v2M290 351v2M291 351v2M292 357v2M292 361v2M294 357v2M295 357v2M295 371v2M298 357v2M298 361v2M299 357v2M299 361v2M300 361v2M300 371v2M301 357v2M301 371v2M302 371v2M303 371v2M304 371v4M305 373v2M306 361v2M307 359v2M309 369v2M310 357v2M310 361v2M310 369v2M312 319v4M317 365v2M335 331v2M336 311v2M338 259v2M338 295v2M339 235v2M339 269v2M340 243v2M347 217v2M378 211v2M383 221v2M387 223v2M392 241v2M395 251v2M451 373v2M452 337v2M452 343v2M454 341v2M457 329v6M458 369v2M458 373v2M460 353v2M463 349v4M463 357v2M466 345v6M468 345v4M468 353v2M469 343v4M472 351v2M472 355v8M472 367v2M474 349v12M474 363v4M476 357v8M476 367v2M482 367v2M486 339v2M488 259v2M502 239v2M505 233v2M513 221v2M544 211v2M554 225v2M566 263v2M568 265v2M568 277v2M571 307v2M572 301v2M573 311v2M574 321v2M576 333v2M589 355v2M592 357v2M611 359v2M619 355v2M626 351v2M632 339v2M633 341v2M634 335v2M634 339v2M637 325v2M639 313v2M640 307v2M642 295v2M643 289v2M644 293v2M647 269v2M647 277v2M653 247v2M655 239v2"/>
<path stroke="rgb(159,255,0)" d="M244 209v2M253 209v2M255 357v2M260 359v2M265 361v2M266 361v2M286 365v2M307 209v2M308 353v4M321 367v2M335 341v2M340 209v2M342 225v2M346 219v2M364 209v2M366 209v2M382 219v2M396 203v54M396 259v4M402 203v2M402 207v30M437 203v28M450 203v48M450 253v8M450 263v10M450 275v4M450 281v16M450 299v40M450 343v4M450 351v6M450 361v10M450 373v2M451 283v4M452 295v2M455 281v2M456 283v2M460 279v4M477 345v2M494 239v2M499 209v2M500 209v2M500 237v2M516 209v2M518 209v2M526 209v2M536 209v2M558 209v2M560 209v2M564 255v2M572 209v2M581 209v2M600 359v2M645 209v2M658 239v2"/>
<path stroke="rgb(11,248,0)" d="M244 363v2M245 363v2M245 367v2M246 343v2M246 371v2M249 327v6M249 347v2M249 353v4M249 367v4M251 361v2M252 357v2M252 361v2M254 327v2M254 331v4M254 373v2M255 351v2M255 361v2M260 371v2M261 359v2M262 365v2M265 363v4M267 357v2M267 371v2M269 357v2M269 361v2M270 371v2M271 351v2M273 351v2M274 329v2M274 333v2M274 337v4M275 325v26M275 353v4M275 359v2M275 367v4M275 373v2M276 357v2M276 361v2M277 371v2M278 351v2M278 361v2M279 327v4M279 367v2M284 365v2M285 357v2M285 371v2M286 351v2M286 361v2M287 351v2M287 361v2M288 325v8M288 335v12M288 349v2M288 353v4M288 363v2M288 367v4M288 373v2M289 319v6M290 327v24M290 353v4M290 359v2M290 363v2M290 367v4M290 373v2M291 325v26M291 353v4M291 359v2M291 363v2M291 367v4M291 373v2M292 351v2M293 371v2M294 361v4M295 361v2M297 363v2M297 371v2M298 351v2M299 351v2M300 357v2M302 357v2M303 357v2M304 357v2M305 351v2M306 351v2M307 351v2M307 361v2M307 373v2M308 327v4M308 333v2M308 337v6M308 349v2M308 363v2M308 367v4M308 373v2M309 325v16M309 359v2M309 363v2M309 367v2M309 373v2M310 353v2M311 327v12M311 345v6M311 353v4M311 359v2M311 363v2M311 367v4M311 373v2M312 317v2M313 359v2M334 335v2M336 309v2M337 285v2M337 319v2M338 257v2M339 271v2M340 245v2M342 229v2M344 223v2M346 215v2M350 213v2M376 211v2M377 213v2M391 235v2M393 253v2M451 355v2M451 361v12M452 203v80M452 287v8M452 299v2M452 333v4M454 337v2M457 325v4M458 335v2M458 359v10M458 371v2M460 357v2M462 337v2M463 341v2M463 347v2M464 365v10M465 345v2M466 339v2M467 353v2M468 337v2M469 333v6M472 353v2M474 341v4M475 339v2M476 347v10M477 373v2M480 363v2M480 371v4M481 337v2M486 261v2M486 331v6M489 241v2M489 251v2M512 223v2M539 203v2M545 213v2M546 211v2M561 239v2M563 253v2M569 287v2M570 297v2M571 289v2M585 349v2M587 351v2M592 355v2M596 357v2M617 315v4M617 321v2M618 313v8M619 315v4M621 313v8M623 315v8M627 347v2M631 341v2M633 337v2M635 337v2M636 329v2M638 319v2M642 305v2M643 299v2M644 283v2M646 273v2M651 253v2M657 235v2"/>
<path stroke="rgb(44,252,0)" d="M244 365v2M246 347v2M247 365v2M248 357v2M249 357v2M249 361v2M250 371v2M253 357v2M253 371v2M254 361v2M259 357v2M260 361v2M260 365v2M261 365v2M268 357v2M271 371v2M272 357v2M272 371v2M274 357v2M274 361v2M274 371v2M275 351v2M275 361v2M279 357v2M279 361v2M280 371v2M288 351v2M290 361v2M291 361v2M292 371v2M294 371v2M296 363v2M298 363v2M298 371v2M299 371v2M302 363v2M302 373v2M305 371v2M308 361v2M309 355v4M309 361v2M311 351v2M311 361v2M312 323v6M312 331v4M312 337v2M312 347v2M312 355v2M312 359v2M312 363v2M312 367v4M312 373v2M337 287v2M337 317v2M338 261v2M338 293v2M339 267v2M373 203v2M379 213v2M388 221v2M389 227v2M393 251v2M394 241v2M452 345v2M452 351v4M457 335v2M459 203v70M459 275v4M459 283v8M459 297v8M459 307v28M459 339v6M459 351v4M459 359v16M463 359v12M466 355v10M468 355v14M469 347v2M472 363v4M472 369v2M474 361v2M474 367v4M475 347v2M476 365v2M476 373v2M479 339v2M482 361v2M486 337v2M486 341v6M489 245v2M491 245v2M506 229v2M511 221v2M541 203v2M547 213v2M558 239v2M560 237v2M567 269v2M570 281v2M571 291v2M572 317v2M573 325v2M575 329v2M575 335v2M589 353v2M600 361v2M612 361v2M616 357v2M619 357v2M624 353v2M630 343v2M638 321v2M641 301v2M641 311v2M645 279v2M645 287v2M648 265v2M650 257v2M650 263v2M651 259v2M654 249v2M656 237v2"/>
<path stroke="rgb(192,255,0)" d="M245 339v14M248 371v2M251 351v2M279 365v2M280 365v2M281 365v2M287 365v2M288 365v2M289 365v2M290 365v2M291 365v2M292 365v2M293 365v2M294 365v2M295 365v2M306 357v2M307 357v2M314 203v58M314 267v2M314 275v2M314 283v2M314 291v2M314 299v2M314 307v2M314 315v2M314 323v8M314 349v2M314 359v2M314 369v2M325 361v2M329 353v2M351 345v4M352 345v4M353 345v4M354 345v4M355 345v4M356 345v4M373 291v4M374 291v4M375 291v4M376 291v4M411 203v4M411 211v2M411 219v2M411 227v2M411 237v2M411 243v2M411 249v2M411 259v2M411 263v4M411 271v4M411 279v2M454 297v2M457 203v28M461 319v4M461 325v4M461 331v4M461 339v2M461 349v4M461 357v2M461 361v4M461 367v4M461 373v2M463 355v2M472 349v2M475 373v2M481 363v2M552 345v4M553 345v4M561 245v2M563 251v2M564 249v2M595 359v2M596 359v2M597 359v2M598 359v2M599 359v2M603 361v2M604 361v2M605 361v2M606 361v2M607 361v2M608 361v2M609 361v2M660 235v2M663 231v2M665 229v2M668 345v6M669 345v6"/>
<path stroke="rgb(109,255,0)" d="M245 365v2M246 365v2M249 365v2M250 353v2M252 355v2M254 357v2M254 365v2M272 365v2M273 365v2M276 365v2M277 365v2M296 365v2M304 361v2M308 351v2M308 365v2M309 353v2M309 365v2M311 365v2M317 363v2M325 365v2M334 345v2M336 337v2M380 215v2M388 223v2M390 225v6M391 229v2M392 231v2M392 239v2M393 247v2M394 253v2M394 259v4M395 257v2M395 261v2M412 203v98M417 205v2M417 209v4M417 217v4M417 225v2M417 229v4M417 235v2M417 239v4M417 245v4M417 251v4M417 257v4M441 207v2M441 211v2M441 221v6M441 233v2M441 239v2M441 257v4M441 263v2M441 267v2M441 271v2M441 275v2M457 359v12M460 291v2M477 341v2M492 243v2M499 237v2M556 229v2M557 231v2M562 249v2M563 245v2M565 251v2"/>
<path stroke="rgb(60,254,0)" d="M246 345v2M246 369v2M247 345v2M247 349v2M247 367v2M248 351v2M254 371v2M256 263v6M256 271v8M256 283v6M256 291v18M256 311v14M257 261v4M257 267v12M257 281v42M258 261v14M258 277v28M258 307v8M258 317v2M258 321v4M264 361v2M267 365v2M268 361v2M268 371v2M269 365v2M270 365v2M275 357v2M275 371v2M279 371v2M288 357v2M288 361v2M289 351v2M289 361v2M290 357v2M290 371v2M291 357v2M291 371v2M295 363v2M301 361v2M303 365v2M303 373v2M304 359v2M306 373v2M310 349v2M310 371v2M311 357v2M311 371v2M312 329v2M312 335v2M312 345v2M312 349v2M312 353v2M322 365v2M331 347v2M336 313v2M336 331v2M337 289v2M337 313v4M339 243v2M339 265v2M340 241v2M343 225v2M345 221v2M374 203v4M375 205v4M376 207v2M377 211v2M378 213v2M382 217v2M383 219v2M391 227v2M395 253v2M452 355v2M452 361v2M455 349v2M456 355v2M457 341v4M459 273v2M459 305v2M459 349v2M463 371v4M466 365v10M468 369v6M469 353v12M472 345v2M472 371v2M473 335v2M478 371v2M486 347v8M490 247v2M501 235v2M502 235v2M503 233v4M505 231v2M506 231v2M507 229v2M508 227v4M509 227v2M510 223v4M511 223v2M512 221v2M548 215v2M568 271v2M569 273v2M569 285v2M570 295v2M580 345v2M583 347v2M595 357v2M602 359v2M624 351v2M635 333v2M636 331v2M637 331v2M639 315v2M640 317v2M646 281v2M649 261v2M649 267v2M652 255v2M654 245v2M666 225v2"/>
<path stroke="rgb(126,255,0)" d="M247 347v2M247 369v2M248 347v2M255 355v2M274 365v2M275 365v2M299 363v2M300 363v2M302 361v2M309 351v2M316 365v2M328 349v2M380 221v2M386 221v2M387 221v2M389 223v4M391 231v4M392 233v6M393 237v10M394 245v8M394 255v4M395 259v2M401 203v48M441 203v4M441 209v2M441 213v8M441 227v6M441 235v4M441 241v16M441 261v2M441 265v2M441 269v2M441 273v2M441 277v22M457 371v4M467 349v2M475 369v2M481 321v2M490 243v2M497 241v2M601 359v4M611 361v2M660 231v2M668 227v2"/>
<path stroke="rgb(175,255,0)" d="M248 349v2M248 373v2M253 353v2M306 359v2M307 355v2M322 369v2M326 363v2M331 353v2M333 341v2M345 217v2M346 217v2M402 205v2M411 207v4M411 213v6M411 221v6M411 229v8M411 239v4M411 245v4M411 251v8M411 261v2M411 267v4M411 275v4M450 357v2M470 347v2M475 343v2M491 243v2M562 243v2M602 361v2M610 361v2M659 237v2"/>
<path stroke="rgb(208,255,0)" d="M249 333v14M334 337v2M341 223v2M343 223v2M368 331v4M369 331v4M370 331v4M371 331v4M372 331v4M373 331v4M374 331v4M375 331v4M376 331v4M377 331v4M378 331v4M379 219v2M379 331v4M380 331v4M381 331v4M382 331v4M406 207v4M406 223v2M406 233v4M406 239v2M453 341v2M454 359v2M459 357v2M470 373v2M483 325v2M531 343v4M532 343v4M533 343v4M534 343v2M535 343v4M536 343v4M537 343v4M538 343v4M539 343v4M540 343v4M541 343v4M542 343v4M543 343v4M544 343v4M545 343v4M546 343v4M547 343v4M548 343v4M549 343v4M550 343v4M552 225v2M553 225v4M554 227v4M555 229v4M556 231v4M557 233v4M558 235v4M559 237v4M560 239v4M561 241v4M562 245v4M563 247v4M564 251v4M565 253v6M566 257v2M656 239v2M657 237v4M658 235v4M659 233v4M660 233v2M661 231v4M662 229v4M663 229v2M664 227v4M665 227v2M666 227v2M667 225v4M668 225v2M669 225v2"/>
<path stroke="rgb(255,254,0)" d="M254 337v2M254 341v4M305 345v2M306 345v4M307 345v4M308 345v4M309 345v4M314 263v2M314 269v2M314 273v2M314 279v2M314 285v4M314 293v2M314 297v2M314 301v2M314 305v2M314 311v4M314 317v4M352 335v2M353 337v2M354 335v4M355 337v2M368 339v4M370 339v4M371 341v2M372 339v4M373 339v2M374 341v2M375 339v4M376 341v2M377 339v4M378 217v2M378 339v4M379 217v2M379 339v4M380 217v4M381 219v2M419 203v12M419 223v2M419 227v4M419 233v12M419 249v2M419 257v4M419 263v2M422 203v82M427 293v22M429 203v4M429 209v2M429 213v10M429 225v4M429 231v4M429 239v8M429 249v6M429 257v2M429 261v6M429 269v2M429 273v2M435 203v74M436 293v2M436 297v2M436 301v6M437 293v6M437 301v6M437 309v2M444 203v4M444 211v2M444 215v4M444 221v2M444 227v2M444 231v2M444 235v2M444 239v10M444 253v6M444 261v2M444 265v10M447 203v26M447 233v50M449 203v2M449 207v2M449 211v12M449 229v2M449 233v2M449 237v2M449 241v16M449 263v2M449 267v6M453 263v2M454 221v2M454 269v2M459 279v2M464 297v2M464 321v2M465 213v2M465 223v2M465 229v2M465 249v2M465 271v2M465 303v2M465 309v2M466 291v2M466 353v2M468 343v2M469 351v2M483 315v2M498 239v2M499 239v2M529 335v12M529 349v2M530 337v6M530 345v4"/>
<path stroke="rgb(255,216,0)" d="M256 325v50M257 325v20M257 347v28M258 325v50M401 281v10M402 301v8M404 291v2M404 295v10M404 307v2M405 205v2M405 209v2M405 213v2M405 219v2M405 223v2M405 235v2M405 243v2M405 247v2M405 255v24M409 283v4M409 289v10M410 297v2M410 301v14M411 307v12M413 287v14M415 355v4M415 373v2M416 203v72M417 355v4M417 363v6M418 277v20M418 299v2M419 337v2M420 365v6M421 361v2M421 367v6M423 335v2M423 343v2M423 349v6M424 279v2M424 283v12M424 297v2M425 277v2M425 281v16M426 203v2M426 207v68M426 279v2M428 343v4M428 351v6M430 203v76M431 339v2M431 357v2M431 361v6M431 371v4M432 203v70M432 275v4M434 301v6M434 309v6M434 317v2M434 321v2M435 343v2M435 361v2M436 307v2M436 315v2M437 307v2M437 315v2M440 303v4M440 309v6M440 319v2M445 301v2M445 305v2M445 309v6M445 317v2M445 321v2M446 295v2M446 301v2M446 305v2M446 309v6M447 345v2M448 359v2M448 365v4M448 373v2M449 359v2M450 359v2M451 297v2M451 359v2M452 297v2M452 359v2M453 297v2M453 357v2M454 295v2M454 357v2M455 295v2M455 357v2M456 295v2M456 357v2M457 293v4M457 357v2M458 293v2M458 355v2M459 293v2M459 355v2M460 293v2M460 355v2M461 293v2M461 355v2M462 291v2M462 353v2M463 291v2M463 353v2M464 291v2M464 353v2M465 291v2M465 353v2M466 351v2M467 351v2M468 351v2M469 349v2M470 349v2M471 347v4M471 373v2M472 347v2M472 373v2M473 347v2M473 373v2M474 345v2M474 371v4M475 345v2M475 371v2M476 343v4M476 369v4M477 343v2M477 369v2M478 341v4M478 369v2M479 341v2M479 367v2M480 331v2M480 341v2M480 365v4M481 339v2M481 365v2M482 339v2M482 363v4M483 337v2M483 361v4M484 337v2M484 361v4M485 359v4M486 359v2M512 331v4M513 331v4M514 331v4M515 331v4M516 331v4"/>
<path stroke="rgb(255,211,0)" d="M257 345v2M401 291v12M402 315v4M404 305v2M404 309v2M404 317v2M405 279v14M405 295v2M409 299v8M409 309v4M410 315v2M410 323v4M411 323v6M413 301v12M414 203v72M415 363v6M416 275v18M416 295v4M417 351v2M417 369v2M417 373v2M418 297v2M418 301v14M420 371v2M421 335v2M423 359v4M423 367v6M424 295v2M424 299v20M425 297v20M426 275v4M426 281v16M428 361v4M428 369v6M430 279v18M431 369v2M432 273v2M432 279v14M433 203v70M434 319v2M434 325v8M434 335v2M435 299v2M435 335v2M436 323v2M436 343v2M436 361v2M437 323v2M437 341v2M437 367v2M438 203v74M439 203v72M439 277v2M439 281v2M440 317v2M440 321v2M440 325v8M440 337v2M441 307v2M441 349v2M442 203v26M442 231v44M443 203v72M444 299v2M445 319v2M445 325v10M446 317v6M446 325v8M447 299v2M447 307v2M449 345v2M459 335v2M464 345v2M476 337v2M481 329v2"/>
<path stroke="rgb(255,238,0)" d="M268 363v2M396 277v10M397 277v12M398 271v12M402 249v2M402 257v2M415 281v16M415 299v2M415 303v2M417 285v18M419 303v4M419 309v12M420 287v2M420 291v20M421 283v2M421 289v16M422 315v12M422 331v2M422 335v2M423 207v18M423 229v34M423 265v22M427 351v6M427 361v2M428 203v10M428 217v10M428 229v6M428 237v26M428 267v20M429 307v2M429 311v2M429 315v14M431 289v10M431 301v6M435 319v4M435 325v6M436 353v6M436 363v2M436 373v2M437 353v6M437 363v4M441 313v2M441 317v6M441 325v2M441 329v6M441 337v2M444 309v6M444 317v6M444 325v2M444 329v2M447 321v2M447 325v10M448 285v14M448 301v2M448 305v2M449 311v4M449 317v6M449 325v4M453 295v2M474 335v2M474 347v2M477 371v2M478 329v2M479 333v2M482 337v2M485 337v2"/>
<path stroke="rgb(255,233,0)" d="M269 363v2M270 363v2M271 363v2M272 363v2M273 363v2M274 363v2M275 363v2M276 363v2M277 363v2M278 363v2M279 363v2M280 363v2M281 363v2M282 363v2M283 355v2M283 363v2M396 287v4M397 289v2M398 283v8M402 237v12M402 251v6M402 259v14M404 203v10M404 215v4M404 221v2M404 225v22M404 249v14M404 265v4M410 203v2M410 207v60M410 269v4M415 297v2M415 301v2M415 305v8M417 303v14M417 319v2M419 321v4M419 329v6M419 339v4M420 311v14M421 305v16M422 333v2M422 339v6M422 349v6M423 287v24M427 363v2M427 369v6M428 287v16M429 329v2M429 335v4M429 343v4M431 309v6M431 317v4M431 325v2M434 249v2M435 331v2M435 337v4M435 345v4M435 353v2M436 365v2M436 371v2M437 371v4M440 225v2M440 235v4M441 327v2M441 339v4M441 345v4M444 327v2M444 331v4M444 339v2M445 257v2M448 303v2M448 309v6M448 317v6M449 329v6M455 345v2M456 245v2M457 275v2M463 335v2M472 341v2M479 327v2M481 367v2M482 327v2"/>
<path stroke="rgb(255,227,0)" d="M278 355v2M279 355v2M280 355v2M281 355v2M282 355v2M284 355v2M285 355v2M286 355v2M287 355v2M401 251v6M401 259v4M401 265v2M402 273v12M402 287v2M404 213v2M404 219v2M404 223v2M404 247v2M404 263v2M404 269v12M409 203v4M409 211v6M409 219v2M409 223v2M409 227v4M409 233v16M409 251v4M409 257v4M409 263v4M410 205v2M410 267v2M410 273v10M411 281v12M413 203v8M413 213v12M413 227v8M413 237v10M413 249v2M413 253v10M413 265v2M415 313v10M415 327v2M417 317v2M417 321v2M417 327v6M419 347v6M419 357v4M420 329v6M420 339v4M421 321v6M421 331v4M422 359v4M422 367v2M422 371v2M423 311v6M423 319v8M427 359v2M428 303v20M428 325v2M429 333v2M429 351v6M429 361v4M431 321v2M431 327v4M431 335v4M434 203v46M434 251v32M435 355v4M435 363v4M435 371v2M440 203v22M440 227v8M440 239v44M440 285v2M441 353v6M441 363v6M441 373v2M444 341v2M444 345v6M444 353v6M444 363v4M445 203v54M445 259v22M446 203v78M446 283v4M447 353v8M447 363v6M448 325v10M449 353v6M449 365v2M452 283v2M453 283v2M453 359v2M454 283v2M455 283v2M456 231v4M456 237v4M456 243v2M456 249v4M456 255v4M456 261v4M456 267v4M456 273v4M456 279v4M456 285v4M456 291v2M456 297v4M456 303v4M456 309v4M456 315v2M457 231v4M457 237v4M457 243v4M457 249v4M457 255v4M457 261v4M457 267v4M457 273v2M457 279v4M457 285v4M457 291v2M457 297v4M457 303v4M457 309v4M457 315v2M458 231v4M458 237v4M458 243v4M458 249v4M458 255v4M458 261v4M458 267v4M458 273v4M458 279v4M458 285v4M458 291v2M458 297v4M458 303v4M458 309v4M458 315v2M459 281v2M465 289v2M478 367v2M479 369v2M480 339v2M482 319v2M484 359v2"/>
<path stroke="rgb(225,255,0)" d="M300 349v4M301 349v2M302 349v4M303 349v4M304 349v4M318 371v2M332 345v2M340 225v2M341 225v2M342 223v2M343 221v2M344 219v4M345 219v2M406 203v4M406 211v12M406 225v8M406 237v2M427 203v72M436 203v44M436 249v24M436 275v2M437 231v26M437 259v14M437 275v2M441 299v2M460 343v2M461 353v2M479 343v2M483 365v2M486 361v2M534 345v2"/>
<path stroke="rgb(255,249,0)" d="M305 347v2M310 345v4M314 261v2M314 265v2M314 271v2M314 277v2M314 281v2M314 289v2M314 295v2M314 303v2M314 309v2M314 321v2M352 337v2M353 335v2M355 335v2M369 339v4M371 339v2M373 341v2M374 339v2M376 339v2M380 339v4M381 221v2M382 221v2M397 207v6M397 221v4M397 227v2M397 233v2M397 237v8M397 249v4M397 255v2M397 259v2M415 207v2M415 211v2M415 215v4M415 221v6M415 231v2M415 237v2M415 241v4M415 251v6M415 261v2M415 265v2M415 269v4M417 263v2M417 269v2M419 215v8M419 225v2M419 231v2M419 245v4M419 251v6M419 261v2M419 265v24M419 291v2M420 203v16M420 221v4M420 229v2M420 233v2M420 243v2M420 247v2M420 251v6M420 259v2M420 265v4M421 207v4M421 223v2M421 229v2M421 233v4M421 239v4M421 245v6M421 253v6M421 263v2M421 271v2M422 285v14M422 301v2M427 315v12M429 207v2M429 211v2M429 223v2M429 229v2M429 235v4M429 247v2M429 255v2M429 259v2M429 267v2M429 271v2M429 275v18M431 205v8M431 215v2M431 219v6M431 229v4M431 235v8M431 245v4M431 253v6M431 261v2M431 265v2M431 271v2M435 277v18M435 301v2M436 309v6M436 317v6M436 325v6M437 311v4M437 317v6M437 325v6M444 207v4M444 213v2M444 219v2M444 223v4M444 229v2M444 233v2M444 237v2M444 249v4M444 259v2M444 263v2M444 275v12M444 291v2M447 283v16M448 203v8M448 215v2M448 219v4M448 225v10M448 239v4M448 249v12M448 263v4M448 269v4M449 205v2M449 209v2M449 223v6M449 231v2M449 235v2M449 239v2M449 257v6M449 265v2M449 273v18M452 357v2M454 281v2M455 337v2M457 355v2M460 347v2M473 345v2M481 341v2M484 203v112M484 335v2M484 341v18M484 365v10M485 203v112M485 335v2M485 339v20M485 365v10M529 347v2M530 335v2M530 343v2M530 349v2"/>
<path stroke="rgb(255,206,0)" d="M311 339v2M311 343v2M312 339v6M313 339v6M314 339v6M315 339v6M400 203v2M401 303v4M401 313v2M402 323v4M404 319v2M404 327v4M405 293v2M405 297v6M405 305v2M408 225v2M409 307v2M409 313v4M409 321v4M410 317v2M410 333v4M411 333v4M411 343v4M411 351v4M413 313v8M413 325v6M414 275v12M415 353v2M416 293v2M416 299v12M416 313v2M418 315v10M418 329v4M420 343v2M423 339v2M424 319v8M424 331v2M424 335v2M425 317v12M425 333v2M425 341v2M426 297v16M428 341v2M430 297v2M430 301v6M430 309v6M432 293v6M432 301v6M432 309v4M433 273v22M434 337v4M434 345v4M434 353v2M435 307v2M435 315v2M435 323v2M437 361v2M438 277v14M439 275v2M439 279v2M439 283v12M440 339v4M440 345v4M440 353v4M441 315v2M441 323v2M441 371v2M442 229v2M442 275v22M443 275v16M443 293v2M444 307v2M444 315v2M445 355v2M446 333v2M446 353v4M447 315v2M447 323v2M448 345v2M449 299v2M449 307v2M449 315v2M449 335v2M452 341v2M480 325v2"/>
<path stroke="rgb(255,200,0)" d="M311 341v2M399 247v2M400 205v70M401 315v2M401 323v2M402 333v4M402 343v4M403 241v2M404 325v2M404 335v4M404 345v2M405 303v2M405 307v6M407 223v2M407 251v2M408 203v22M408 227v48M409 325v2M409 331v4M409 341v2M410 327v2M410 331v2M410 341v6M410 351v4M410 359v4M411 359v6M411 371v2M413 335v4M413 343v4M414 287v16M414 305v6M416 311v2M416 315v8M416 331v2M417 333v2M417 359v2M418 333v2M418 337v6M418 347v2M419 355v2M419 371v2M420 353v2M421 365v2M424 333v2M424 341v4M424 349v4M425 335v2M425 343v4M425 349v4M426 313v16M426 335v2M429 341v2M429 357v2M430 317v6M430 325v6M431 299v2M431 307v2M432 313v2M432 317v6M432 325v6M432 337v2M433 295v4M433 301v6M433 309v6M434 343v2M434 355v4M434 361v6M434 371v4M436 341v2M437 343v2M437 359v2M438 291v8M438 301v6M438 311v4M439 295v4M439 301v6M439 309v2M440 357v2M440 363v6M440 371v4M442 297v2M442 301v6M442 309v2M442 313v2M443 291v2M443 295v4M443 301v6M443 309v4M444 323v2M445 345v2M445 353v2M445 357v4M445 363v6M446 345v2M446 357v4M446 363v6M446 373v2M448 299v2M448 307v2M449 323v2M453 349v2"/>
<path stroke="rgb(255,176,0)" d="M313 331v8M313 345v4M313 353v2M313 357v2M313 361v4M313 367v2M313 373v2M314 333v6M314 345v4M314 353v6M314 363v2M314 367v2M314 371v4M315 337v2M315 345v4M315 351v2M315 355v4M315 361v6M315 371v4M399 293v2M399 297v6M400 311v4M401 319v2M401 331v2M401 339v2M401 367v2M401 371v4M402 321v2M402 339v2M402 357v4M403 297v12M404 323v2M404 341v2M404 359v4M405 323v4M405 341v2M405 359v2M405 363v4M405 373v2M406 299v14M407 303v12M408 315v2M408 321v6M409 329v2M410 329v2M410 347v2M411 341v2M411 349v2M411 367v2M412 305v2M412 311v6M413 331v2M413 349v4M414 331v2M414 349v2M414 353v4M414 363v6M414 373v2M416 333v2M416 351v4M416 369v2M418 335v2M418 353v2M420 361v2M424 357v2M425 339v2M425 357v2M430 341v2M432 359v2M433 371v4M434 315v2M434 323v2M434 341v2M434 359v2M438 359v4M438 365v2M438 373v2M439 359v2M439 365v2M439 373v2M440 315v2M440 323v2M440 343v2M440 349v2M440 361v2M442 363v2M442 373v2M443 365v2M443 373v2M445 315v2M445 343v2M445 361v2M446 315v2M446 323v2M446 343v2M446 361v2M461 337v2M474 339v2M476 333v2"/>
<path stroke="rgb(255,184,0)" d="M313 351v2M313 355v2M313 365v2M313 371v2M314 331v2M314 351v2M314 361v2M314 365v2M315 331v6M315 353v2M315 367v2M399 283v10M399 295v2M400 297v8M401 317v2M401 351v2M401 359v4M401 369v2M402 313v2M402 319v2M402 327v2M403 285v2M403 289v8M404 343v2M405 345v4M405 355v4M406 287v2M406 291v8M407 289v14M408 305v10M409 327v2M409 367v2M410 349v2M410 365v2M411 329v4M411 337v2M412 301v4M412 307v4M413 367v2M414 337v4M414 345v4M415 333v2M415 351v2M415 369v2M416 335v2M416 363v6M416 373v2M417 353v2M417 371v2M418 373v2M419 373v2M420 355v2M420 373v2M421 337v2M421 355v2M421 373v2M422 373v2M423 337v2M423 355v2M424 337v4M424 355v2M424 373v2M426 371v2M428 339v2M428 357v2M429 365v2M430 339v2M430 357v2M430 365v2M430 369v2M430 373v2M431 359v2M432 371v2M433 345v2M433 353v6M433 361v6M434 299v2M434 307v2M436 335v2M436 367v2M438 341v2M438 353v6M438 363v2M438 367v2M438 371v2M439 353v6M439 363v2M439 367v2M439 371v2M440 299v2M440 307v2M441 361v2M442 337v2M442 349v2M442 353v8M442 365v4M443 349v2M443 353v8M443 363v2M443 367v2M444 361v2M445 299v2M445 307v2M446 299v2M446 307v2M447 361v2M448 335v2M448 361v2M449 361v2"/>
<path stroke="rgb(0,255,200)" d="M321 341v2M322 339v2M323 339v2M324 337v4M325 339v4M329 341v2M330 335v10M331 331v14M332 333v8M333 333v4M335 345v2M336 343v4M337 337v10M338 327v12M338 341v6M339 325v22M340 323v16M340 341v6M340 349v2M341 323v26M342 317v2M342 325v16M342 343v4M343 321v16M343 343v6M344 321v12M344 335v2M344 341v2M344 345v6M345 319v2M345 323v8M345 333v2M345 337v2M345 341v8M346 319v2M346 323v12M346 337v2M346 341v8M347 319v2M347 323v12M347 341v6M348 317v20M348 343v6M349 319v14M349 341v4M353 315v4M353 325v8M353 343v2M353 349v2M354 319v2M354 323v12M354 343v2M355 321v8M355 333v2M355 341v4M356 317v2M356 321v8M357 321v8M358 317v4M358 323v6M359 321v14M359 343v6M360 319v12M360 333v2M360 337v2M360 343v8M361 323v2M361 327v10M361 341v2M361 345v4M362 317v2M362 325v12M363 325v14M364 323v10M365 323v10M365 341v6M366 321v2M366 325v14M366 341v10M367 321v2M367 325v12M367 339v8M368 325v6M368 337v2M368 343v6M372 329v2M372 335v4M372 343v6M373 335v4M373 343v4M377 335v4M378 343v4M381 329v2M381 335v2M382 337v8M383 333v12M384 331v4M384 337v8M385 335v8M386 337v10M387 337v6M388 337v6M389 333v10M390 339v2M391 335v6M391 343v2M392 333v8M393 337v6M394 337v2M487 331v12M488 331v14M489 327v4M489 333v12M490 331v12M491 329v18M492 327v18M493 325v22M494 317v2M494 323v26M495 319v2M495 323v16M495 341v6M496 319v2M496 323v14M496 341v6M497 321v18M497 341v6M498 319v22M498 343v6M499 317v18M499 337v2M499 343v4M500 313v2M500 317v20M500 343v6M501 315v2M501 319v18M501 343v6M502 319v14M502 343v6M503 317v18M503 337v2M503 345v6M504 313v20M504 343v6M505 315v18M505 343v6M506 315v16M506 335v2M506 343v6M507 309v2M507 317v14M507 343v8M508 313v4M508 319v14M508 335v2M508 339v2M508 343v6M509 319v14M509 335v2M509 343v8M510 319v16M511 317v2M511 321v14M512 321v10M513 319v12M514 317v2M514 323v6M514 343v4M515 319v12M515 339v2M515 343v8M516 321v10M516 343v8M517 321v10M517 335v2M517 343v8M518 321v10M518 337v2M518 343v6M519 317v4M519 323v8M519 343v6M520 321v2M520 325v6M520 335v2M520 345v4M521 321v10M521 335v2M521 341v8M522 319v2M522 323v8M522 335v4M522 343v8M523 323v8M523 335v2M523 343v8M524 323v8M524 341v8M525 325v6M525 345v2M526 325v10M527 325v10M528 325v18M529 325v10M538 329v14M539 331v12M540 329v14M541 331v12M542 331v12M543 327v2M543 331v12M544 331v12M545 331v2M545 335v8M546 333v10M547 333v2M547 339v4M548 333v10M549 335v8M550 341v2M551 337v6M552 337v4M553 339v2M554 339v2M555 337v4M556 339v2M557 339v2M559 337v2M561 335v2M561 341v2M562 337v2M563 339v2M650 337v2M651 337v4M652 337v6M653 331v2M653 337v6M654 335v8M655 333v12M656 333v12M657 331v14M658 331v14M659 327v20M660 327v2M660 331v14M661 327v2M661 331v14M662 333v12M663 329v16M664 331v14M665 333v12M666 333v12M667 331v2M667 335v8M668 335v8M669 337v2"/>
<path stroke="rgb(0,255,210)" d="M338 339v2M340 339v2M342 341v2M343 337v6M344 333v2M344 337v4M344 343v2M345 331v2M345 335v2M345 339v2M346 335v2M346 339v2M347 335v6M348 337v6M349 333v8M353 333v2M353 339v4M354 339v4M355 339v2M359 335v8M360 331v2M360 335v2M360 339v4M361 337v2M361 343v2M362 337v2M366 339v2M367 337v2M368 335v2M495 339v2M496 337v4M497 339v2M498 341v2M499 335v2M499 339v4M500 337v6M501 337v6M502 333v10M503 335v2M503 339v6M504 333v10M505 333v10M506 331v4M506 337v6M507 331v12M508 333v2M508 337v2M508 341v2M509 333v2M509 337v6M510 335v10M511 335v2M514 329v2M514 335v2M514 339v4M515 335v4M515 341v2M516 335v8M517 337v6M518 335v2M518 339v4M519 335v8M520 337v8M521 337v4M522 339v4M523 337v6M524 337v4"/>
<path stroke="rgb(255,243,0)" d="M396 263v14M397 203v4M397 213v8M397 225v2M397 229v4M397 235v2M397 245v4M397 253v2M397 257v2M397 261v16M398 203v68M415 203v4M415 209v2M415 213v2M415 219v2M415 227v4M415 233v4M415 239v2M415 245v6M415 257v4M415 263v2M415 267v2M415 273v8M417 265v4M417 271v14M419 289v2M419 293v10M419 307v2M420 219v2M420 225v4M420 231v2M420 235v8M420 245v2M420 249v2M420 257v2M420 261v4M420 269v18M420 289v2M421 203v4M421 211v12M421 225v4M421 231v2M421 237v2M421 243v2M421 251v2M421 259v4M421 265v6M421 273v10M421 285v4M422 299v2M422 303v12M423 203v4M423 225v4M423 263v2M427 327v2M427 333v6M427 341v6M428 213v4M428 227v2M428 235v2M428 263v4M429 293v14M429 309v2M429 313v2M431 203v2M431 213v2M431 217v2M431 225v4M431 233v2M431 243v2M431 249v4M431 259v2M431 263v2M431 267v4M431 273v16M435 295v4M435 303v4M435 309v6M435 317v2M436 331v2M436 337v4M436 345v4M437 331v2M437 337v4M437 345v4M441 301v6M441 309v4M444 287v4M444 293v6M444 301v6M447 301v6M447 309v6M447 317v4M448 211v4M448 217v2M448 223v2M448 235v4M448 243v6M448 261v2M448 267v2M448 273v12M449 291v8M449 301v6M449 309v2M458 339v2M464 289v2M483 339v2M484 339v2M485 363v2"/>
<path stroke="rgb(255,87,0)" d="M396 291v2M396 297v2M396 305v2M396 315v4M396 323v6M396 337v2M396 343v4M396 361v6M396 371v4M397 291v2M397 297v4M397 307v2M397 325v2M397 335v2M397 345v2M397 355v2M397 363v2M397 367v4M397 373v2M398 349v2M403 365v2M406 333v2M406 351v2M412 341v2M415 343v2M416 323v2M437 333v2M437 351v2M446 337v2M446 369v2M468 341v2"/>
<path stroke="rgb(255,95,0)" d="M396 293v4M396 307v2M396 333v4M396 353v2M396 367v4M397 293v4M397 317v2M397 327v2M397 337v2M397 353v2M397 365v2M397 371v2M398 331v2M400 325v2M400 361v2M402 367v2M407 315v2M407 337v2M408 335v2M408 373v2M410 337v2M411 319v2M419 325v2M428 349v2M434 367v2M445 341v2M446 341v2M447 341v2M450 339v2M453 339v2M454 339v2M455 339v2M460 335v4M462 335v2"/>
<path stroke="rgb(255,75,0)" d="M396 299v4M396 319v4M396 339v4M396 357v2M397 301v4M397 321v4M397 341v4M397 357v4M398 303v4M398 317v2M398 323v4M398 341v4M398 359v2M399 305v4M399 325v2M399 343v4M399 361v2M400 307v2M400 327v2M400 345v2M400 363v2M401 309v2M401 327v4M401 347v2M401 363v4M402 311v2M402 329v4M402 347v4M402 365v2M403 311v4M403 331v2M403 349v2M403 367v2M404 313v2M404 331v4M404 351v2M404 367v2M405 313v4M405 333v2M405 351v2M405 369v2M406 315v2M406 335v2M406 353v2M406 369v2M407 317v2M407 335v2M407 353v2M407 371v2M408 317v2M408 337v2M408 355v2M408 371v2M409 319v2M409 337v2M409 355v2M409 373v2M410 319v2M410 339v2M410 355v2M410 373v2M411 321v2M411 339v2M411 357v2M411 373v2M412 321v2M412 339v2M412 357v2M413 321v2M413 341v2M413 359v2M414 323v2M414 341v2M414 359v2M415 323v2M415 341v2M415 359v2M416 325v2M416 343v2M416 361v2M417 343v2M417 361v2M418 325v2M418 343v2M418 361v2M419 327v2M419 345v2M419 363v2M420 327v2M420 345v2M420 363v2M421 327v2M421 345v2M421 363v2M422 327v2M422 345v2M422 363v2M423 329v2M423 347v2M424 329v2M424 347v2M424 365v2M425 329v2M425 365v2M426 347v2M426 365v2M427 331v2M427 347v2M427 365v2M428 331v2M428 367v2M429 331v2M429 349v2M429 367v2M430 331v2M430 349v2M430 367v2M431 349v2M431 367v2M432 333v2M432 349v2M432 367v2M433 333v2M433 349v2M433 367v2M434 333v2M434 349v2M435 349v2M435 369v2M436 333v2M436 369v2M437 369v2M438 335v2M438 351v2M438 369v2M439 335v2M439 351v2M439 369v2M440 335v2M440 351v2M440 369v2M441 335v2M441 351v2M441 369v2M442 335v2M442 351v2M442 369v2M443 335v2M443 351v2M443 369v2M444 335v2M444 351v2M444 369v2M445 351v2M445 369v2M446 351v2M447 337v2M447 351v2M448 337v2M448 351v2M449 337v2M449 351v2M451 349v2M484 315v20M485 315v20"/>
<path stroke="rgb(255,80,0)" d="M396 303v2M396 355v2M396 359v2M397 305v2M397 319v2M397 339v2M397 361v2M398 311v2M398 361v2M399 327v2M399 363v2M400 309v2M400 347v2M402 309v2M404 349v2M404 369v2M406 371v2M408 353v2M410 357v2M413 323v2M417 325v2M423 365v2M425 347v2M426 329v2M431 331v2M435 333v2M445 335v2M472 337v2"/>
<path stroke="rgb(255,143,0)" d="M396 309v4M396 329v4M396 349v2M397 311v4M397 331v4M399 349v2M399 357v2M400 367v8M401 349v2M403 353v4M403 361v4M403 371v2M404 311v2M406 357v4M406 365v4M406 373v2M407 357v2M407 361v2M407 367v2M414 321v2M414 343v2M416 341v2M418 327v2M422 365v2M423 327v2M427 329v2M433 323v2M435 351v2M438 323v2M439 323v2M439 333v2M439 349v2M442 323v2M443 323v2M456 337v2M469 341v2M470 341v2M471 339v4M472 339v2M473 337v4M474 337v2M475 335v4M476 335v2M477 333v4M478 331v4M479 329v4M480 327v4M481 325v4M482 321v6M483 317v8"/>
<path stroke="rgb(255,111,0)" d="M396 313v2M397 309v2M397 329v2M397 347v2M399 359v2M400 329v2M401 345v2M403 329v2M403 333v2M405 335v2M407 355v2M409 317v2M409 371v2M426 331v2M431 333v2M446 335v2M446 339v2M446 371v2M447 371v2M450 341v2M461 343v2"/>
<path stroke="rgb(255,135,0)" d="M396 347v2M397 349v4M398 315v2M398 351v4M399 347v2M399 365v10M400 343v2M403 373v2M404 315v2M407 351v2M407 373v2M410 321v2M412 323v2M413 339v2M418 363v2M419 343v2M422 347v2M427 367v2M435 367v2M443 371v2M456 345v2"/>
<path stroke="rgb(255,103,0)" d="M396 351v2M397 315v2M399 323v2M400 365v2M403 351v2M406 317v2M407 369v2M408 319v2M412 359v2M413 357v2M416 359v2M418 345v2M419 361v2M423 363v2M428 347v2M434 369v2M436 349v2M445 339v2M447 369v2M448 341v2M449 339v4M451 339v2M452 339v2M456 339v2M457 337v2M458 337v2M459 337v2M461 335v2M465 341v2M467 343v2M470 339v2"/>
<path stroke="rgb(255,69,0)" d="M398 291v6M398 299v4M398 307v4M398 319v4M398 327v2M398 337v4M398 345v4M398 357v2M398 363v4M398 369v6"/>
<path stroke="rgb(255,63,0)" d="M398 297v2M398 329v2M398 355v2M398 367v2"/>
<path stroke="rgb(255,127,0)" d="M398 313v2M398 333v2M399 303v2M400 305v2M403 369v2M409 339v2M432 331v2M437 335v2M437 349v2M438 349v2M445 371v2M457 339v2"/>
<path stroke="rgb(255,119,0)" d="M398 335v2M401 307v2M401 311v2M403 347v2M405 353v2M405 367v2M412 373v2M415 361v2M422 329v2M423 345v2M428 365v2M433 369v2M436 351v2M438 333v2M445 337v2M447 339v2M448 339v2M448 369v4M452 349v2M459 347v2"/>
<path stroke="rgb(255,195,0)" d="M399 203v44M399 249v24M400 275v10M401 325v2M401 333v4M402 337v2M402 351v6M402 361v2M403 203v38M403 243v32M404 321v2M404 339v2M404 347v2M404 353v6M405 317v6M405 327v4M406 241v34M407 203v20M407 225v26M407 253v24M408 275v14M409 343v2M409 349v4M410 363v2M410 369v2M411 365v2M411 369v2M413 347v2M413 353v4M413 361v6M413 371v2M414 303v2M414 311v10M416 327v4M416 337v4M417 323v2M417 345v2M418 349v4M418 357v4M418 365v2M418 369v2M420 335v4M421 329v2M423 357v2M424 327v2M424 353v2M424 359v4M424 367v6M425 337v2M425 353v4M425 359v6M425 367v2M425 371v4M426 333v2M426 337v2M426 341v6M428 329v2M428 359v2M429 339v2M429 359v2M430 335v4M430 343v4M430 351v2M431 315v2M431 323v2M432 335v2M432 339v2M432 343v4M432 351v2M433 317v6M433 325v4M436 359v2M438 309v2M438 317v6M438 325v8M438 339v2M439 311v4M439 317v6M439 325v6M440 333v2M440 359v2M442 311v2M442 317v6M442 325v4M442 333v2M443 313v2M443 317v6M443 325v8M445 373v2M448 315v2M448 323v2"/>
<path stroke="rgb(255,189,0)" d="M399 273v10M400 285v12M401 321v2M401 341v4M401 353v2M402 341v2M402 369v6M403 275v10M403 287v2M404 363v4M404 371v4M405 337v4M406 275v12M406 289v2M407 277v12M408 289v16M409 335v2M409 345v2M409 359v6M409 369v2M410 371v2M411 347v2M413 333v2M413 373v2M414 325v6M414 335v2M415 371v2M416 345v6M416 355v4M417 335v2M418 355v2M418 367v2M419 335v2M419 353v2M420 325v2M421 347v2M422 337v2M422 355v2M423 373v2M425 369v2M426 351v6M426 359v6M426 369v2M426 373v2M427 339v2M427 357v2M430 353v4M430 361v4M430 371v2M431 341v2M432 347v2M432 353v6M432 361v6M432 373v2M433 329v2M433 335v6M433 343v2M433 347v2M435 341v2M435 359v2M438 337v2M438 345v4M439 331v2M439 337v6M439 345v4M441 343v2M442 329v4M442 339v4M442 345v4M443 333v2M443 339v4M443 345v4M444 343v2M447 343v2M448 343v2M449 343v2"/>
<path stroke="rgb(255,151,0)" d="M399 309v2M399 329v4M399 339v4M399 351v6M400 349v6M400 357v4M403 337v2M403 343v4M403 357v4M406 313v2M406 337v6M406 347v4M406 355v2M406 361v2M407 333v2M407 339v6M407 347v4M407 359v2M407 365v2M408 369v2M409 357v2M411 355v2M412 319v2M412 355v2M412 361v6M412 371v2M415 325v2M424 363v2M426 367v2M427 349v2M430 333v2M432 323v2M432 369v2M433 299v2M433 307v2M433 315v2M438 307v2M438 315v2M439 315v2M442 299v2M442 307v2M442 315v2M442 371v2M443 307v2M443 315v2M444 371v2M447 335v2M468 339v2M471 337v2M481 323v2"/>
<path stroke="rgb(255,168,0)" d="M399 311v4M400 315v10M400 331v2M401 337v2M401 355v4M403 315v6M405 343v2M405 361v2M406 319v6M407 319v8M408 327v8M408 339v6M409 347v2M409 353v2M409 365v2M410 367v2M412 317v2M412 325v6M412 333v2M413 369v2M414 333v2M414 351v2M414 371v2M416 371v2M418 371v2M424 345v2M425 331v2M426 339v2M426 349v2M426 357v2M430 299v2M430 347v2M430 359v2M432 299v2M432 341v2M433 341v2M433 351v2M433 359v2M438 343v2M439 343v2M439 361v2M442 343v2M442 361v2M443 343v2M443 361v2M444 337v2M445 323v2M451 341v2"/>
<path stroke="rgb(255,159,0)" d="M399 315v8M399 333v6M400 333v10M400 355v2M402 363v2M403 309v2M403 321v8M403 335v2M403 339v4M405 331v2M405 349v2M405 371v2M406 325v8M406 343v4M406 363v2M407 327v6M407 345v2M407 363v2M408 345v8M408 357v12M412 331v2M412 335v4M412 343v12M412 367v4M414 357v2M414 361v2M414 369v2M429 347v2M430 307v2M430 315v2M430 323v2M432 307v2M432 315v2M433 331v2M434 351v2M438 299v2M439 299v2M439 307v2M443 299v2M443 337v2"/>
<path stroke="rgb(255,222,0)" d="M401 257v2M401 263v2M401 267v14M402 285v2M402 289v12M404 281v10M404 293v2M405 203v2M405 207v2M405 211v2M405 215v4M405 221v2M405 225v10M405 237v6M405 245v2M405 249v6M409 207v4M409 217v2M409 221v2M409 225v2M409 231v2M409 249v2M409 255v2M409 261v2M409 267v16M409 287v2M410 283v14M410 299v2M411 293v14M413 211v2M413 225v2M413 235v2M413 247v2M413 251v2M413 263v2M413 267v20M415 329v4M415 335v6M415 345v6M417 337v6M417 347v4M418 203v74M419 365v6M420 347v6M420 357v4M421 339v6M421 349v6M421 357v4M422 357v2M422 369v2M423 317v2M423 331v4M423 341v2M424 203v76M424 281v2M425 203v74M425 279v2M426 205v2M428 323v2M428 327v2M428 333v6M429 369v6M431 343v6M431 351v6M434 283v16M435 373v2M436 299v2M437 299v2M440 283v2M440 287v12M440 301v2M441 359v2M444 359v2M444 367v2M444 373v2M445 281v18M445 303v2M446 281v2M446 287v8M446 297v2M446 303v2M447 373v2M448 353v6M448 363v2M449 363v2M449 367v8M456 293v2M458 357v2M461 291v2M462 355v2M465 351v2M468 349v2M477 331v2"/>
<path stroke="rgb(255,52,0)" d="M445 347v4M446 347v4M447 347v4M448 347v4M449 347v4M450 347v4M451 347v2M452 347v2M453 347v2M454 347v2M455 347v2M456 347v2M457 345v4M458 345v4M459 345v2M460 345v2M461 345v2M462 343v4M463 343v2M464 343v2M465 343v2M466 341v4M467 341v2M469 339v2"/>
<path stroke="rgb(255,57,0)" d="M463 345v2"/>
</g>
</g>
<g shape-rendering="crispEdges">
<rect x="219" y="197" width="470" height="1" fill="#000"/>
<rect x="219" y="377" width="470" height="1" fill="#000"/>
<rect x="219" y="197" width="1" height="181" fill="#000"/>
<rect x="688" y="197" width="1" height="181" fill="#000"/>
<rect x="220" y="378" width="1" height="5" fill="#000"/>
<rect x="238" y="378" width="1" height="11" fill="#000"/>
<rect x="256" y="378" width="1" height="5" fill="#000"/>
<rect x="274" y="378" width="1" height="5" fill="#000"/>
<rect x="292" y="378" width="1" height="5" fill="#000"/>
<rect x="310" y="378" width="1" height="5" fill="#000"/>
<rect x="328" y="378" width="1" height="5" fill="#000"/>
<rect x="346" y="378" width="1" height="5" fill="#000"/>
<rect x="364" y="378" width="1" height="5" fill="#000"/>
<rect x="382" y="378" width="1" height="5" fill="#000"/>
<rect x="400" y="378" width="1" height="5" fill="#000"/>
<rect x="418" y="378" width="1" height="5" fill="#000"/>
<rect x="436" y="378" width="1" height="5" fill="#000"/>
<rect x="454" y="378" width="1" height="11" fill="#000"/>
<rect x="472" y="378" width="1" height="5" fill="#000"/>
<rect x="490" y="378" width="1" height="5" fill="#000"/>
<rect x="508" y="378" width="1" height="5" fill="#000"/>
<rect x="526" y="378" width="1" height="5" fill="#000"/>
<rect x="544" y="378" width="1" height="5" fill="#000"/>
<rect x="562" y="378" width="1" height="5" fill="#000"/>
<rect x="580" y="378" width="1" height="5" fill="#000"/>
<rect x="598" y="378" width="1" height="5" fill="#000"/>
<rect x="616" y="378" width="1" height="5" fill="#000"/>
<rect x="634" y="378" width="1" height="5" fill="#000"/>
<rect x="652" y="378" width="1" height="5" fill="#000"/>
<rect x="670" y="378" width="1" height="11" fill="#000"/>
<rect x="688" y="378" width="1" height="5" fill="#000"/>
<rect x="220" y="622" width="1" height="5" fill="#000"/>
<rect x="238" y="622" width="1" height="11" fill="#000"/>
<rect x="256" y="622" width="1" height="5" fill="#000"/>
<rect x="274" y="622" width="1" height="5" fill="#000"/>
<rect x="292" y="622" width="1" height="5" fill="#000"/>
<rect x="310" y="622" width="1" height="5" fill="#000"/>
<rect x="328" y="622" width="1" height="5" fill="#000"/>
<rect x="346" y="622" width="1" height="5" fill="#000"/>
<rect x="364" y="622" width="1" height="5" fill="#000"/>
<rect x="382" y="622" width="1" height="5" fill="#000"/>
<rect x="400" y="622" width="1" height="5" fill="#000"/>
<rect x="418" y="622" width="1" height="5" fill="#000"/>
<rect x="436" y="622" width="1" height="5" fill="#000"/>
<rect x="454" y="622" width="1" height="11" fill="#000"/>
<rect x="472" y="622" width="1" height="5" fill="#000"/>
<rect x="490" y="622" width="1" height="5" fill="#000"/>
<rect x="508" y="622" width="1" height="5" fill="#000"/>
<rect x="526" y="622" width="1" height="5" fill="#000"/>
<rect x="544" y="622" width="1" height="5" fill="#000"/>
<rect x="562" y="622" width="1" height="5" fill="#000"/>
<rect x="580" y="622" width="1" height="5" fill="#000"/>
<rect x="598" y="622" width="1" height="5" fill="#000"/>
<rect x="616" y="622" width="1" height="5" fill="#000"/>
<rect x="634" y="622" width="1" height="5" fill="#000"/>
<rect x="652" y="622" width="1" height="5" fill="#000"/>
<rect x="670" y="622" width="1" height="11" fill="#000"/>
<rect x="688" y="622" width="1" height="5" fill="#000"/>
<rect x="208" y="273" width="11" height="1" fill="#000"/>
<rect x="208" y="374" width="11" height="1" fill="#000"/>
<rect x="214" y="243" width="5" height="1" fill="#000"/>
<rect x="214" y="225" width="5" height="1" fill="#000"/>
<rect x="214" y="212" width="5" height="1" fill="#000"/>
<rect x="214" y="202" width="5" height="1" fill="#000"/>
<rect x="214" y="344" width="5" height="1" fill="#000"/>
<rect x="214" y="326" width="5" height="1" fill="#000"/>
<rect x="214" y="313" width="5" height="1" fill="#000"/>
<rect x="214" y="303" width="5" height="1" fill="#000"/>
<rect x="214" y="295" width="5" height="1" fill="#000"/>
<rect x="214" y="289" width="5" height="1" fill="#000"/>
<rect x="214" y="283" width="5" height="1" fill="#000"/>
<rect x="214" y="278" width="5" height="1" fill="#000"/>
<rect x="704" y="198" width="16" height="180" fill="url(#gCB)"/>
<rect x="720" y="198" width="1" height="180" fill="#000"/>
<rect x="704" y="377" width="28" height="1" fill="#000"/>
<rect x="721" y="377" width="11" height="1" fill="#000"/>
<rect x="721" y="363" width="5" height="1" fill="#000"/>
<rect x="721" y="350" width="11" height="1" fill="#000"/>
<rect x="721" y="337" width="5" height="1" fill="#000"/>
<rect x="721" y="323" width="11" height="1" fill="#000"/>
<rect x="721" y="310" width="5" height="1" fill="#000"/>
<rect x="721" y="297" width="11" height="1" fill="#000"/>
<rect x="721" y="283" width="5" height="1" fill="#000"/>
<rect x="721" y="270" width="11" height="1" fill="#000"/>
<rect x="721" y="257" width="5" height="1" fill="#000"/>
<rect x="721" y="244" width="11" height="1" fill="#000"/>
<rect x="721" y="230" width="5" height="1" fill="#000"/>
<rect x="721" y="217" width="11" height="1" fill="#000"/>
<rect x="721" y="204" width="5" height="1" fill="#000"/>
</g>
<text x="173.8" y="283.2" font-size="16.6" fill="#000" text-anchor="start" textLength="19.2" lengthAdjust="spacingAndGlyphs">10</text>
<text x="193.4" y="275.0" font-size="16.6" fill="#000" text-anchor="start" textLength="9.6" lengthAdjust="spacingAndGlyphs">5</text>
<text x="173.8" y="384.0" font-size="16.6" fill="#000" text-anchor="start" textLength="19.2" lengthAdjust="spacingAndGlyphs">10</text>
<text x="193.4" y="375.8" font-size="16.6" fill="#000" text-anchor="start" textLength="9.6" lengthAdjust="spacingAndGlyphs">4</text>
<text transform="translate(161.2,297.6) rotate(-90)" font-size="16.6" textLength="21" lengthAdjust="spacingAndGlyphs">Hz</text>
<text x="736.8" y="226.8" font-size="16.6" fill="#000" text-anchor="start" textLength="19.2" lengthAdjust="spacingAndGlyphs">10</text>
<text x="756.6" y="218.6" font-size="16.6" fill="#000" text-anchor="start" textLength="25.6" lengthAdjust="spacingAndGlyphs">-10</text>
<text x="736.8" y="253.5" font-size="16.6" fill="#000" text-anchor="start" textLength="19.2" lengthAdjust="spacingAndGlyphs">10</text>
<text x="756.6" y="245.3" font-size="16.6" fill="#000" text-anchor="start" textLength="25.6" lengthAdjust="spacingAndGlyphs">-12</text>
<text x="736.8" y="280.1" font-size="16.6" fill="#000" text-anchor="start" textLength="19.2" lengthAdjust="spacingAndGlyphs">10</text>
<text x="756.6" y="271.9" font-size="16.6" fill="#000" text-anchor="start" textLength="25.6" lengthAdjust="spacingAndGlyphs">-14</text>
<text x="736.8" y="306.8" font-size="16.6" fill="#000" text-anchor="start" textLength="19.2" lengthAdjust="spacingAndGlyphs">10</text>
<text x="756.6" y="298.6" font-size="16.6" fill="#000" text-anchor="start" textLength="25.6" lengthAdjust="spacingAndGlyphs">-16</text>
<text x="736.8" y="333.5" font-size="16.6" fill="#000" text-anchor="start" textLength="19.2" lengthAdjust="spacingAndGlyphs">10</text>
<text x="756.6" y="325.3" font-size="16.6" fill="#000" text-anchor="start" textLength="25.6" lengthAdjust="spacingAndGlyphs">-18</text>
<text x="736.8" y="360.1" font-size="16.6" fill="#000" text-anchor="start" textLength="19.2" lengthAdjust="spacingAndGlyphs">10</text>
<text x="756.6" y="351.9" font-size="16.6" fill="#000" text-anchor="start" textLength="25.6" lengthAdjust="spacingAndGlyphs">-20</text>
<text x="736.8" y="386.8" font-size="16.6" fill="#000" text-anchor="start" textLength="19.2" lengthAdjust="spacingAndGlyphs">10</text>
<text x="756.6" y="378.6" font-size="16.6" fill="#000" text-anchor="start" textLength="25.6" lengthAdjust="spacingAndGlyphs">-22</text>
<text transform="translate(804.6,339.6) rotate(-90)" font-size="16.6" textLength="103.4" lengthAdjust="spacingAndGlyphs">V^2/m^2/Hz</text>
<text x="316.6" y="186.9" font-size="16.6" fill="#000" text-anchor="start" textLength="65.1" lengthAdjust="spacingAndGlyphs">RBSP-A/</text>
<text x="380.9" y="186.9" font-size="16.6" fill="#000" text-anchor="start" textLength="61.3" lengthAdjust="spacingAndGlyphs">EMFISIS</text>
<text x="453.1" y="186.9" font-size="16.6" fill="#000" text-anchor="start" textLength="31.2" lengthAdjust="spacingAndGlyphs">HFR</text>
<text x="489.8" y="186.9" font-size="16.6" fill="#000" text-anchor="start" textLength="60.2" lengthAdjust="spacingAndGlyphs">Spectra</text>
<text x="554.5" y="186.9" font-size="16.6" fill="#000" text-anchor="start" textLength="36.6" lengthAdjust="spacingAndGlyphs">Data</text>
<text x="216.2" y="409.0" font-size="16.6" fill="#000" text-anchor="start" textLength="45.0" lengthAdjust="spacingAndGlyphs">00:00</text>
<text x="216.4" y="424.6" font-size="16.6" fill="#000" text-anchor="start" textLength="91.2" lengthAdjust="spacingAndGlyphs">2012-12-02</text>
<text x="432.6" y="409.0" font-size="16.6" fill="#000" text-anchor="start" textLength="44.4" lengthAdjust="spacingAndGlyphs">12:00</text>
<text x="647.8" y="409.0" font-size="16.6" fill="#000" text-anchor="start" textLength="45.0" lengthAdjust="spacingAndGlyphs">00:00</text>
<text x="648.0" y="424.6" font-size="16.6" fill="#000" text-anchor="start" textLength="92.4" lengthAdjust="spacingAndGlyphs">2012-12-03</text>
<text x="295.2" y="413.7" font-size="16.6" fill="#000" text-anchor="start" textLength="157.4" lengthAdjust="spacingAndGlyphs">RBSP-A/ect-hope-L3</text>
<text x="462.1" y="413.7" font-size="16.6" fill="#000" text-anchor="start" textLength="45.7" lengthAdjust="spacingAndGlyphs">HOPE</text>
<text x="512.8" y="413.7" font-size="16.6" fill="#000" text-anchor="start" textLength="9.0" lengthAdjust="spacingAndGlyphs">e</text>
<text x="525.9" y="413.7" font-size="16.6" fill="#000" text-anchor="start" textLength="85.7" lengthAdjust="spacingAndGlyphs">Tperp/Tpar</text>
<g shape-rendering="crispEdges">
<rect x="219" y="440" width="470" height="1" fill="#000"/>
<rect x="214" y="621" width="475" height="1" fill="#000"/>
<rect x="219" y="440" width="1" height="182" fill="#000"/>
<rect x="688" y="440" width="1" height="182" fill="#000"/>
<rect x="208" y="599" width="11" height="1" fill="#000"/>
<rect x="208" y="562" width="11" height="1" fill="#000"/>
<rect x="208" y="529" width="11" height="1" fill="#000"/>
<rect x="208" y="500" width="11" height="1" fill="#000"/>
<rect x="208" y="474" width="11" height="1" fill="#000"/>
<rect x="208" y="451" width="11" height="1" fill="#000"/>
<rect x="214" y="621" width="5" height="1" fill="#000"/>
<rect x="214" y="580" width="5" height="1" fill="#000"/>
<rect x="214" y="545" width="5" height="1" fill="#000"/>
<rect x="214" y="514" width="5" height="1" fill="#000"/>
<rect x="214" y="487" width="5" height="1" fill="#000"/>
<rect x="214" y="463" width="5" height="1" fill="#000"/>
<rect x="214" y="441" width="5" height="1" fill="#000"/>
</g>
<text x="202.6" y="604.9" font-size="16.6" fill="#000" text-anchor="end" textLength="23.6" lengthAdjust="spacingAndGlyphs">1.2</text>
<text x="202.6" y="567.9" font-size="16.6" fill="#000" text-anchor="end" textLength="23.6" lengthAdjust="spacingAndGlyphs">1.4</text>
<text x="202.6" y="534.9" font-size="16.6" fill="#000" text-anchor="end" textLength="23.6" lengthAdjust="spacingAndGlyphs">1.6</text>
<text x="202.6" y="505.9" font-size="16.6" fill="#000" text-anchor="end" textLength="23.6" lengthAdjust="spacingAndGlyphs">1.8</text>
<text x="202.6" y="479.9" font-size="16.6" fill="#000" text-anchor="end" textLength="23.6" lengthAdjust="spacingAndGlyphs">2.0</text>
<text x="202.6" y="456.9" font-size="16.6" fill="#000" text-anchor="end" textLength="23.6" lengthAdjust="spacingAndGlyphs">2.2</text>
<text transform="translate(166.2,580.2) rotate(-90)" font-size="16.6" textLength="97.6" lengthAdjust="spacingAndGlyphs">e Tperp/Tpar</text>
<g clip-path="url(#clipP2)">
<path d="M238.0,493.3 238.1,495.2 238.3,491.6 238.4,486.8 238.5,490.8 238.6,486.7 238.8,494.4 238.9,505.7 239.0,492.7 239.1,492.5 239.3,501.2 239.4,500.2 239.5,498.7 239.6,491.4 239.8,498.3 239.9,504.1 240.0,489.1 240.1,496.1 240.3,485.8 240.4,490.3 240.5,486.6 240.6,498.5 240.8,491.5 240.9,502.9 241.0,502.8 241.1,500.6 241.3,487.3 241.4,498.5 241.5,501.7 241.6,502.7 241.8,492.0 241.9,499.3 242.0,496.4 242.1,497.8 242.3,511.4 242.4,498.6 242.5,504.7 242.6,511.8 242.8,502.8 242.9,506.7 243.0,509.1 243.1,508.9 243.3,501.0 243.4,510.2 243.5,519.9 243.6,500.9 243.8,535.0 243.9,513.2 244.0,508.1 244.1,526.4 244.3,518.2 244.4,505.4 244.5,514.5 244.6,518.1 244.8,513.6 244.9,520.5 245.0,516.5 245.1,521.7 245.3,527.5 245.4,514.4 245.5,521.5 245.6,517.5 245.8,521.9 245.9,514.6 246.0,519.3 246.1,522.0 246.3,529.3 246.4,531.4 246.5,516.3 246.6,520.0 246.8,529.9 246.9,513.4 247.0,523.6 247.1,526.6 247.3,536.2 247.4,532.6 247.5,526.9 247.6,527.4 247.8,528.2 247.9,539.1 248.0,527.1 248.1,527.9 248.3,533.1 248.4,529.7 248.5,529.4 248.6,523.8 248.8,531.1 248.9,528.4 249.0,539.5 249.1,536.7 249.3,532.9 249.4,537.2 249.5,531.5 249.6,540.5 249.8,534.7 249.9,538.8 250.0,526.5 250.1,536.6 250.3,524.5 250.4,524.3 250.5,533.9 250.6,530.6 250.8,538.2 250.9,551.1 251.0,532.2 251.1,534.1 251.3,539.7 251.4,542.0 251.5,538.4 251.7,538.5 251.8,544.7 251.9,543.4 252.0,534.6 252.2,540.4 252.3,540.7 252.4,533.8 252.5,542.1 252.7,535.2 252.8,546.0 252.9,542.0 253.0,541.9 253.2,538.3 253.3,541.7 253.4,530.6 253.5,536.4 253.7,545.6 253.8,531.5 253.9,548.8 254.0,534.3 254.2,548.9 254.3,539.7 254.4,548.9 254.5,545.7 254.7,536.4 254.8,552.5 254.9,554.0 255.0,545.4 255.2,544.2 255.3,545.0 255.4,540.0 255.5,551.7 255.7,543.3 255.8,546.1 255.9,541.5 256.0,543.0 256.2,540.1 256.3,553.6 256.4,546.2 256.5,552.7 256.7,548.5 256.8,545.5 256.9,547.9 257.0,547.2 257.2,550.4 257.3,548.8 257.4,549.4 257.5,544.6 257.7,547.6 257.8,560.2 257.9,550.2 258.0,550.1 258.2,557.8 258.3,563.8 258.4,552.5 258.5,559.5 258.7,558.5 258.8,553.5 258.9,563.7 259.0,560.2 259.2,560.1 259.3,556.4 259.4,561.7 259.5,557.1 259.7,558.7 259.8,554.3 259.9,553.8 260.0,564.8 260.2,556.5 260.3,560.0 260.4,558.3 260.5,556.9 260.7,556.1 260.8,560.9 260.9,556.4 261.0,557.1 261.2,557.8 261.3,562.8 261.4,560.2 261.5,558.6 261.7,553.3 261.8,548.7 261.9,559.5 262.0,559.3 262.2,554.0 262.3,557.4 262.4,558.9 262.5,559.4 262.7,560.0 262.8,553.8 262.9,563.7 263.0,550.5 263.2,560.5 263.3,558.9 263.4,561.0 263.5,565.7 263.7,563.8 263.8,550.7 263.9,548.1 264.0,560.3 264.2,551.5 264.3,556.7 264.4,561.0 264.5,549.1 264.7,548.0 264.8,558.8 264.9,557.7 265.1,556.3 265.2,557.8 265.3,553.6 265.4,551.2 265.6,558.2 265.7,553.9 265.8,551.1 265.9,561.4 266.1,558.7 266.2,561.4 266.3,555.2 266.4,556.7 266.6,555.5 266.7,556.5 266.8,561.9 266.9,557.6 267.1,563.0 267.2,563.3 267.3,571.0 267.4,556.2 267.6,566.4 267.7,562.7 267.8,563.3 267.9,557.3 268.1,561.2 268.2,566.2 268.3,563.0 268.4,563.9 268.6,562.6 268.7,568.8 268.8,564.0 268.9,555.9 269.1,562.3 269.2,557.8 269.3,556.7 269.4,564.3 269.6,571.5 269.7,566.3 269.8,561.8 269.9,562.9 270.1,570.6 270.2,567.3 270.3,567.3 270.4,566.9 270.6,567.0 270.7,570.2 270.8,569.6 270.9,568.5 271.1,564.4 271.2,570.3 271.3,565.9 271.4,572.5 271.6,564.3 271.7,568.3 271.8,568.8 271.9,564.3 272.1,575.6 272.2,574.9 272.3,567.9 272.4,572.9 272.6,571.3 272.7,561.4 272.8,571.0 272.9,569.8 273.1,570.5 273.2,566.6 273.3,570.0 273.4,570.5 273.6,575.8 273.7,572.5 273.8,571.5 273.9,577.8 274.1,569.8 274.2,570.6 274.3,565.3 274.4,578.8 274.6,576.5 274.7,576.1 274.8,575.5 274.9,573.3 275.1,574.2 275.2,572.5 275.3,573.0 275.4,574.1 275.6,580.5 275.7,577.2 275.8,574.5 275.9,572.5 276.1,572.6 276.2,582.0 276.3,577.5 276.4,575.9 276.6,574.5 276.7,571.2 276.8,575.8 276.9,579.6 277.1,574.2 277.2,575.2 277.3,575.2 277.4,576.8 277.6,568.7 277.7,574.9 277.8,571.9 278.0,579.6 278.1,572.4 278.2,577.8 278.3,581.7 278.5,573.4 278.6,572.4 278.7,576.1 278.8,575.4 279.0,570.7 279.1,577.3 279.2,584.0 279.3,574.1 279.5,574.2 279.6,569.8 279.7,576.2 279.8,569.8 280.0,570.8 280.1,582.3 280.2,572.1 280.3,581.2 280.5,583.3 280.6,577.2 280.7,578.2 280.8,584.6 281.0,574.8 281.1,573.1 281.2,569.5 281.3,576.0 281.5,582.7 281.6,580.3 281.7,570.8 281.8,571.3 282.0,572.7 282.1,576.6 282.2,573.8 282.3,575.5 282.5,575.6 282.6,572.6 282.7,574.3 282.8,575.6 283.0,574.0 283.1,576.5 283.2,583.3 283.3,577.5 283.5,574.9 283.6,566.7 283.7,576.3 283.8,564.6 284.0,566.9 284.1,578.2 284.2,577.2 284.3,572.4 284.5,564.6 284.6,571.1 284.7,570.0 284.8,576.0 285.0,583.4 285.1,573.5 285.2,568.0 285.3,566.0 285.5,571.5 285.6,570.5 285.7,565.6 285.8,571.6 286.0,565.6 286.1,576.5 286.2,575.7 286.3,576.2 286.5,568.7 286.6,573.7 286.7,570.8 286.8,569.9 287.0,570.4 287.1,565.8 287.2,565.3 287.3,576.0 287.5,571.1 287.6,573.8 287.7,577.5 287.8,564.9 288.0,568.7 288.1,573.7 288.2,575.1 288.3,571.6 288.5,578.1 288.6,574.1 288.7,567.1 288.8,568.0 289.0,575.9 289.1,574.5 289.2,563.3 289.3,578.2 289.5,574.9 289.6,578.8 289.7,570.9 289.8,571.2 290.0,567.6 290.1,581.7 290.2,571.5 290.3,580.0 290.5,569.5 290.6,573.0 290.7,564.5 290.8,570.7 291.0,577.2 291.1,566.8 291.2,577.3 291.4,574.2 291.5,567.1 291.6,569.6 291.7,570.0 291.9,572.2 292.0,569.8 292.1,568.2 292.2,571.2 292.4,567.5 292.5,566.5 292.6,573.2 292.7,577.4 292.9,565.4 293.0,572.6 293.1,569.5 293.2,567.1 293.4,576.2 293.5,568.5 293.6,579.1 293.7,567.2 293.9,573.5 294.0,570.8 294.1,568.1 294.2,575.1 294.4,571.2 294.5,575.6 294.6,572.5 294.7,566.5 294.9,571.6 295.0,572.9 295.1,577.1 295.2,584.0 295.4,571.4 295.5,560.5 295.6,574.9 295.7,564.9 295.9,560.3 296.0,570.4 296.1,576.6 296.2,560.7 296.4,562.6 296.5,564.4 296.6,562.2 296.7,571.5 296.9,563.8 297.0,563.4 297.1,571.9 297.2,563.1 297.4,570.3 297.5,560.5 297.6,558.1 297.7,553.9 297.9,577.6 298.0,562.9 298.1,566.5 298.2,564.2 298.4,565.6 298.5,564.5 298.6,577.3 298.7,557.0 298.9,553.5 299.0,556.8 299.1,553.9 299.2,568.6 299.4,569.1 299.5,557.0 299.6,554.3 299.7,561.0 299.9,572.6 300.0,547.2 300.1,565.5 300.2,554.4 300.4,568.0 300.5,553.3 300.6,559.1 300.7,550.0 300.9,552.8 301.0,568.9 301.1,564.4 301.2,556.4 301.4,553.1 301.5,546.8 301.6,557.1 301.7,559.6 301.9,558.8 302.0,558.4 302.1,552.0 302.2,557.8 302.4,558.2 302.5,567.2 302.6,571.0 302.7,558.4 302.9,554.0 303.0,558.4 303.1,554.5 303.2,553.2 303.4,557.5 303.5,550.8 303.6,561.4 303.7,556.7 303.9,558.6 304.0,555.0 304.1,551.9 304.2,550.8 304.4,555.2 304.5,552.9 304.6,557.4 304.8,555.1 304.9,546.0 305.0,554.5 305.1,545.5 305.3,550.8 305.4,552.4 305.5,541.3 305.6,555.0 305.8,555.2 305.9,553.2 306.0,551.1 306.1,551.6 306.3,548.6 306.4,552.7 306.5,550.8 306.6,554.6 306.8,546.2 306.9,555.5 307.0,554.9 307.1,553.3 307.3,550.4 307.4,557.5 307.5,542.9 307.6,555.7 307.8,554.3 307.9,554.2 308.0,554.5 308.1,548.4 308.3,550.7 308.4,556.7 308.5,556.1 308.6,554.9 308.8,544.0 308.9,557.9 309.0,561.9 309.1,561.4 309.3,556.1 309.4,544.0 309.5,560.9 309.6,553.7 309.8,539.1 309.9,557.2 310.0,545.0 310.1,546.9 310.3,551.0 310.4,563.4 310.5,552.9 310.6,557.4 310.8,567.6 310.9,566.6 311.0,554.4 311.1,553.5 311.3,546.2 311.4,550.1 311.5,558.1 311.6,558.3 311.8,556.8 311.9,563.5 312.0,550.9 312.1,556.9 312.3,562.6 312.4,562.0 312.5,565.6 312.6,561.2 312.8,557.0 312.9,561.9 313.0,552.8 313.1,548.1 313.3,563.3 313.4,559.3 313.5,562.2 313.6,547.5 313.8,556.8 313.9,554.9 314.0,553.2 314.1,544.7 314.3,557.4 314.4,565.5 314.5,561.8 314.6,555.5 314.8,559.5 314.9,565.0 315.0,546.1 315.1,559.0 315.3,563.8 315.4,565.3 315.5,573.1 315.6,568.5 315.8,562.5 315.9,562.4 316.0,565.8 316.1,556.5 316.3,560.4 316.4,578.0 316.5,573.6 316.6,558.6 316.8,559.0 316.9,559.7 317.0,567.0 317.1,557.6 317.3,566.9 317.4,549.5 317.5,554.5 317.6,553.5 317.8,559.7 317.9,561.5 318.0,543.7 318.2,547.3 318.3,556.0 318.4,548.9 318.5,542.9 318.7,559.3 318.8,555.5 318.9,555.0 319.0,548.8 319.2,558.1 319.3,549.6 319.4,557.5 319.5,544.4 319.7,544.6 319.8,550.6 319.9,545.1 320.0,553.7 320.2,550.7 320.3,543.0 320.4,549.0 320.5,545.3 320.7,552.4 320.8,542.5 320.9,543.3 321.0,552.8 321.2,558.7 321.3,557.1 321.4,544.4 321.5,544.6 321.7,552.4 321.8,541.4 321.9,535.0 322.0,541.2 322.2,542.8 322.3,533.7 322.4,527.7 322.5,528.4 322.7,540.9 322.8,531.5 322.9,535.0 323.0,536.1 323.2,538.6 323.3,532.3 323.4,536.5 323.5,527.4 323.7,529.7 323.8,524.7 323.9,537.6 324.0,529.7 324.2,523.9 324.3,525.7 324.4,526.1 324.5,531.1 324.7,516.3 324.8,518.9 324.9,522.4 325.0,539.6 325.2,528.9 325.3,521.0 325.4,525.5 325.5,533.3 325.7,519.0 325.8,517.9 325.9,527.1 326.0,522.0 326.2,523.0 326.3,515.0 326.4,529.5 326.5,528.1 326.7,520.4 326.8,520.6 326.9,506.6 327.0,520.0 327.2,514.6 327.3,518.3 327.4,519.5 327.5,513.0 327.7,504.5 327.8,517.2 327.9,510.2 328.0,512.0 328.2,510.2 328.3,510.8 328.4,501.3 328.5,519.7 328.7,512.7 328.8,518.2 328.9,523.7 329.0,511.4 329.2,499.0 329.3,487.0 329.4,502.2 329.5,506.2 329.7,510.5 329.8,497.8 329.9,512.1 330.0,500.7 330.2,512.3 330.3,509.7 330.4,509.1 330.5,510.8 330.7,508.3 330.8,507.6 330.9,501.0 331.1,511.7 331.2,522.9 331.3,523.8 331.4,519.8 331.6,516.5 331.7,508.5 331.8,521.3 331.9,512.8 332.1,512.3 332.2,511.2 332.3,513.6 332.4,510.7 332.6,512.6 332.7,505.6 332.8,508.6 332.9,523.1 333.1,507.8 333.2,506.1 333.3,509.9 333.4,511.1 333.6,498.8 333.7,503.5 333.8,510.7 333.9,506.0 334.1,504.3 334.2,513.0 334.3,497.4 334.4,500.9 334.6,493.7 334.7,507.0 334.8,477.5 334.9,486.3 335.1,484.4 335.2,492.7 335.3,489.5 335.4,495.6 335.6,464.7 335.7,487.3 335.8,458.0 335.9,473.6 336.1,486.0 336.2,471.5 336.3,461.1 336.4,478.6 336.6,467.8 336.7,476.3 336.8,486.4 336.9,484.9 337.1,496.9 337.2,481.0 337.3,467.7 337.4,474.9 337.6,472.8 337.7,469.2 337.8,485.2 337.9,475.0 338.1,463.3 338.2,488.7 338.3,481.1 338.4,485.7 338.6,482.3 338.7,487.7 338.8,482.6 338.9,493.3 339.1,485.9 339.2,485.3 339.3,486.3 339.4,469.0 339.6,481.4 339.7,480.7 339.8,486.0 339.9,471.0 340.1,499.5 340.2,485.7 340.3,473.7 340.4,470.4 340.6,483.9 340.7,485.9 340.8,480.8 340.9,488.4 341.1,482.2 341.2,493.5 341.3,481.3 341.4,488.1 341.6,497.7 341.7,510.0 341.8,480.2 341.9,485.1 342.1,482.2 342.2,497.3 342.3,479.4 342.4,484.9 342.6,488.9 342.7,480.4 342.8,480.9 342.9,485.8 343.1,470.2 343.2,476.3 343.3,486.7 343.4,491.3 343.6,488.0 343.7,472.8 343.8,485.0 343.9,496.6 344.1,494.9 344.2,488.4 344.3,481.3 344.5,496.3 344.6,484.3 344.7,477.5 344.8,481.6 345.0,503.2 345.1,491.9 345.2,500.6 345.3,485.1 345.5,499.6 345.6,483.7 345.7,488.1 345.8,509.9 346.0,496.6 346.1,483.7 346.2,488.5 346.3,492.1 346.5,502.2 346.6,484.3 346.7,471.4 346.8,486.4 347.0,489.5 347.1,491.2 347.2,503.4 347.3,492.9 347.5,497.4 347.6,464.0 347.7,499.7 347.8,509.5 348.0,499.4 348.1,493.5 348.2,493.4 348.3,510.2 348.5,483.6 348.6,492.4 348.7,499.4 348.8,503.2 349.0,490.7 349.1,499.1 349.2,493.2 349.3,496.2 349.5,493.7 349.6,483.2 349.7,494.9 349.8,504.2 350.0,485.9 350.1,493.6 350.2,503.0 350.3,486.3 350.5,498.5 350.6,486.3 350.7,508.3 350.8,515.1 351.0,515.4 351.1,495.0 351.2,505.2 351.3,499.0 351.5,499.2 351.6,513.0 351.7,485.1 351.8,508.1 352.0,497.3 352.1,512.0 352.2,499.3 352.3,491.3 352.5,501.2 352.6,507.2 352.7,501.4 352.8,505.5 353.0,495.9 353.1,481.0 353.2,511.7 353.3,509.9 353.5,504.8 353.6,503.8 353.7,514.5 353.8,500.0 354.0,498.7 354.1,504.2 354.2,518.4 354.3,493.3 354.5,520.6 354.6,502.7 354.7,498.3 354.8,522.4 355.0,510.5 355.1,498.1 355.2,507.4 355.3,519.5 355.5,522.0 355.6,506.7 355.7,514.8 355.8,518.0 356.0,505.0 356.1,514.9 356.2,511.7 356.3,507.3 356.5,507.7 356.6,541.0 356.7,514.1 356.8,510.0 357.0,512.1 357.1,524.4 357.2,518.2 357.3,523.5 357.5,525.8 357.6,522.7 358.0,522.0 358.6,530.0 359.0,524.0 359.5,558.0 359.9,552.0 360.4,579.0 M373.0,550.0 373.8,528.0 374.6,505.0 375.3,488.0 375.5,494.2 375.6,489.6 375.8,479.0 375.9,496.2 376.0,493.0 376.1,489.5 376.3,499.4 376.4,502.0 376.5,482.3 376.6,485.4 376.8,506.0 376.9,504.5 377.0,485.7 377.1,482.0 377.3,487.2 377.4,488.3 377.5,478.8 377.6,492.9 377.8,481.4 377.9,482.7 378.0,501.2 378.1,487.6 378.3,492.4 378.4,498.2 378.5,499.1 378.6,489.2 378.8,493.2 378.9,485.5 379.0,508.5 379.1,499.2 379.3,483.5 379.4,493.3 379.5,499.2 379.6,497.5 379.8,509.2 379.9,505.4 380.0,488.4 380.1,492.7 380.3,482.2 380.4,495.8 380.5,494.9 380.6,509.4 380.8,494.3 380.9,474.7 381.0,489.1 381.1,496.3 381.3,483.2 381.4,486.1 381.5,489.3 381.6,495.9 381.8,490.7 381.9,483.5 382.0,498.8 382.1,487.6 382.3,487.5 382.4,479.6 382.5,485.3 382.6,498.1 382.8,477.0 382.9,491.0 383.0,497.8 383.1,487.9 383.3,493.5 383.4,481.4 383.5,503.9 383.6,501.7 383.8,493.7 383.9,475.4 384.0,481.5 384.1,499.5 384.3,503.0 384.4,492.9 384.5,501.0 384.6,484.2 384.8,487.5 384.9,488.3 385.0,491.2 385.1,473.2 385.3,495.2 385.4,498.0 385.5,475.6 385.6,473.0 385.8,487.5 385.9,478.0 386.0,461.9 386.1,490.0 386.3,484.3 386.4,478.4 386.5,498.5 386.6,483.6 386.8,474.5 386.9,481.9 387.0,470.6 387.1,472.5 387.3,482.4 387.4,474.1 387.5,474.9 387.6,494.1 387.8,486.0 387.9,485.1 388.0,483.0 388.1,482.5 388.3,491.4 388.4,477.7 388.5,495.3 388.6,468.5 388.8,475.3 388.9,464.0 389.0,473.8 389.1,481.8 389.3,490.8 389.4,469.7 389.5,449.0 389.6,473.4 389.8,469.5 389.9,464.7 390.0,478.8 390.1,460.4 390.3,478.7 390.4,478.3 390.5,472.3 390.6,468.3 390.8,464.0 390.9,498.3 391.0,465.5 391.1,496.3 391.3,486.9 391.4,476.3 391.5,468.8 391.6,492.1 391.8,500.3 391.9,473.9 392.0,481.3 392.1,495.9 392.3,488.4 392.4,504.8 392.5,479.3 392.6,490.3 392.8,473.8 392.9,507.7 393.0,481.4 393.1,466.7 393.3,487.0 393.4,487.3 393.5,507.5 393.6,486.7 393.8,489.9 393.9,495.8 394.0,504.9 394.1,519.0 394.3,500.0 394.4,496.2 394.5,489.5 394.6,491.2 394.8,489.3 394.9,479.9 395.0,497.8 395.1,471.9 395.3,493.9 395.4,490.6 395.5,479.2 395.6,471.4 395.8,475.5 395.9,480.5 396.0,482.1 396.1,477.6 396.3,483.9 396.4,445.0 396.5,476.7 396.7,460.7 396.8,481.5 396.9,475.5 397.0,470.5 397.2,484.0 397.3,480.0 397.4,457.8 397.5,475.4 397.7,462.7 397.8,484.7 397.9,494.6 398.0,469.5 398.2,474.1 398.3,471.7 398.4,476.6 398.5,478.9 398.7,484.0 398.8,464.9 398.9,486.0 399.0,465.5 399.2,476.6 399.3,484.5 399.4,481.6 399.5,467.2 399.7,469.1 399.8,472.3 399.9,475.8 400.0,485.9 400.2,465.0 400.3,480.7 400.4,482.1 400.5,482.2 400.7,482.5 400.8,491.6 400.9,481.7 401.0,486.2 401.2,484.3 401.3,495.5 401.4,463.4 401.5,492.5 401.7,479.8 401.8,480.4 401.9,475.7 402.0,468.9 402.2,482.5 402.3,480.3 402.4,491.0 402.5,474.9 402.7,499.8 402.8,490.8 402.9,486.9 403.0,484.7 403.2,485.8 403.3,484.0 403.4,489.5 403.5,494.7 403.7,494.7 403.8,485.8 403.9,495.3 404.0,491.5 404.2,499.0 404.3,511.1 404.4,502.3 404.5,494.6 404.7,484.9 404.8,486.6 404.9,484.3 405.0,502.3 405.2,491.7 405.3,497.1 405.4,492.6 405.5,497.6 405.7,506.8 405.8,491.2 405.9,494.1 406.0,490.2 406.2,501.8 406.3,488.1 406.4,488.0 406.5,485.6 406.7,485.2 406.8,497.2 406.9,507.9 407.0,486.8 407.2,499.6 407.3,494.7 407.4,485.6 407.5,490.9 407.7,491.2 407.8,488.3 407.9,505.1 408.0,480.8 408.2,494.3 408.3,492.9 408.4,486.8 408.5,491.4 408.7,495.8 408.8,490.4 408.9,491.3 409.0,492.4 409.2,474.7 409.3,496.8 409.4,501.6 409.5,492.4 409.7,492.3 409.8,476.2 409.9,483.6 410.0,478.3 410.2,479.5 410.3,488.8 410.4,476.5 410.5,480.6 410.7,468.5 410.8,479.6 410.9,480.4 411.0,474.5 411.2,474.9 411.3,492.1 411.4,470.1 411.5,470.8 411.7,472.5 411.8,486.5 411.9,492.9 412.0,479.7 412.2,472.7 412.3,475.3 412.4,486.4 412.5,472.7 412.7,489.2 412.8,489.4 412.9,480.1 413.0,483.6 413.2,484.6 413.3,490.3 413.4,472.3 413.5,487.9 413.7,476.5 413.8,473.7 413.9,480.0 414.0,477.8 414.2,472.7 414.3,468.1 414.4,473.6 414.5,490.8 414.7,494.5 414.8,485.8 414.9,489.2 415.0,478.4 415.2,481.7 415.3,484.7 415.4,476.0 415.5,476.9 415.7,484.5 415.8,481.5 415.9,476.8 416.0,487.6 416.2,482.5 416.3,490.7 416.4,483.8 416.5,482.7 416.7,485.7 416.8,483.5 416.9,480.1 417.1,482.0 417.2,490.4 417.3,490.1 417.4,494.1 417.6,473.0 417.7,482.2 417.8,482.3 417.9,485.5 418.1,481.6 418.2,481.7 418.3,491.1 418.4,487.2 418.6,478.0 418.7,495.5 418.8,493.4 418.9,483.1 419.1,492.8 419.2,482.3 419.3,495.2 419.4,486.3 419.6,482.1 419.7,485.3 419.8,483.4 419.9,489.7 420.1,489.6 420.2,487.9 420.3,484.0 420.4,474.5 420.6,487.1 420.7,474.9 420.8,488.8 420.9,494.4 421.1,488.7 421.2,484.3 421.3,486.5 421.4,487.0 421.6,484.3 421.7,484.6 421.8,482.4 421.9,496.7 422.1,488.8 422.2,495.1 422.3,487.4 422.4,489.6 422.6,488.2 422.7,492.6 422.8,496.0 422.9,492.9 423.1,487.3 423.2,486.5 423.3,501.7 423.4,489.6 423.6,489.8 423.7,501.5 423.8,499.0 423.9,495.5 424.1,489.6 424.2,507.3 424.3,495.1 424.4,496.3 424.6,492.1 424.7,484.4 424.8,484.6 424.9,495.1 425.1,495.2 425.2,491.4 425.3,486.1 425.4,484.4 425.6,491.8 425.7,485.4 425.8,500.9 425.9,502.7 426.1,511.4 426.2,501.2 426.3,492.0 426.4,489.9 426.6,483.8 426.7,492.1 426.8,494.9 426.9,502.8 427.1,500.9 427.2,501.0 427.3,498.9 427.4,501.8 427.6,507.1 427.7,490.9 427.8,495.2 427.9,488.9 428.1,509.5 428.2,508.0 428.3,504.7 428.4,492.0 428.6,501.5 428.7,498.9 428.8,501.2 428.9,499.8 429.1,505.1 429.2,498.8 429.3,507.4 429.4,503.9 429.6,499.6 429.7,500.6 429.8,498.9 429.9,507.9 430.1,500.5 430.2,504.5 430.3,500.0 430.4,492.4 430.6,509.4 430.7,495.8 430.8,507.7 430.9,506.7 431.1,492.2 431.2,497.2 431.3,500.3 431.4,498.2 431.6,496.0 431.7,510.0 431.8,503.3 431.9,506.9 432.1,501.3 432.2,505.9 432.3,498.4 432.4,503.1 432.6,507.6 432.7,503.8 432.8,499.8 432.9,494.9 433.1,503.5 433.2,504.5 433.3,500.0 433.4,496.3 433.6,505.2 433.7,517.3 433.8,498.4 433.9,502.7 434.1,502.4 434.2,487.2 434.3,501.0 434.4,495.3 434.6,509.6 434.7,498.5 434.8,495.4 434.9,498.9 435.1,502.0 435.2,496.8 435.3,500.0 435.4,490.8 435.6,498.7 435.7,505.5 435.8,514.0 435.9,504.9 436.1,501.2 436.2,507.7 436.3,506.9 436.4,511.5 436.6,507.4 436.7,498.6 436.8,501.4 436.9,501.1 437.1,502.7 437.2,502.0 437.3,495.3 437.4,487.1 437.6,496.1 437.7,487.2 437.8,501.8 438.0,501.3 438.1,489.2 438.2,506.2 438.3,507.7 438.5,502.9 438.6,514.4 438.7,516.0 438.8,493.6 439.0,510.6 439.1,507.0 439.2,507.4 439.3,511.1 439.5,498.9 439.6,500.6 439.7,498.4 439.8,499.7 440.0,504.0 440.1,494.0 440.2,496.7 440.3,508.8 440.5,504.5 440.6,507.9 440.7,491.5 440.8,500.4 441.0,502.3 441.1,507.1 441.2,502.1 441.3,513.6 441.5,505.7 441.6,506.4 441.7,505.5 441.8,511.1 442.0,501.8 442.1,514.5 442.2,509.2 442.3,506.4 442.5,505.4 442.6,509.4 442.7,512.7 442.8,511.5 443.0,507.4 443.1,511.4 443.2,505.5 443.3,514.3 443.5,504.4 443.6,488.2 443.7,514.7 443.8,505.1 444.0,494.5 444.1,502.1 444.2,496.4 444.3,518.2 444.5,506.4 444.6,490.4 444.7,505.8 444.8,499.1 445.0,516.4 445.1,493.8 445.2,484.6 445.3,502.6 445.5,500.0 445.6,498.9 445.7,485.0 445.8,504.2 446.0,513.6 446.1,486.1 446.2,510.5 446.3,497.2 446.5,516.0 446.6,505.4 446.7,500.6 446.8,511.2 447.0,506.2 447.1,497.8 447.2,506.6 447.3,497.0 447.5,486.7 447.6,514.9 447.7,497.8 447.8,496.1 448.0,503.4 448.1,488.2 448.2,490.1 448.3,496.9 448.5,497.0 448.6,501.2 448.7,508.5 448.8,496.3 449.0,504.3 449.1,505.1 449.2,492.4 449.3,502.1 449.5,493.2 449.6,509.1 449.7,504.0 449.8,501.7 450.0,490.6 450.1,502.1 450.2,495.4 450.3,505.8 450.5,498.8 450.6,493.5 450.7,507.1 450.8,506.0 451.0,496.2 451.1,509.2 451.2,497.4 451.3,495.8 451.5,499.3 451.6,492.3 451.7,494.6 451.8,497.0 452.0,509.7 452.1,510.4 452.2,497.0 452.3,512.2 452.5,499.0 452.6,502.7 452.7,506.2 452.8,502.0 453.0,517.8 453.1,501.5 453.2,490.3 453.3,509.1 453.5,495.5 453.6,496.4 453.7,484.3 453.8,506.1 454.0,504.0 454.1,503.4 454.2,505.2 454.3,510.3 454.5,496.3 454.6,504.0 454.7,490.3 454.8,493.2 455.0,503.4 455.1,497.9 455.2,483.4 455.3,496.5 455.5,491.8 455.6,487.0 455.7,496.6 455.8,489.6 456.0,479.5 456.1,483.0 456.2,507.4 456.3,479.5 456.5,494.7 456.6,497.2 456.7,498.0 456.8,481.8 457.0,489.6 457.1,493.7 457.2,497.7 457.3,485.1 457.5,480.0 457.6,498.9 457.7,499.7 457.8,493.4 458.0,484.8 458.1,493.3 458.2,490.6 458.4,496.4 458.5,477.2 458.6,489.9 458.7,487.0 458.9,477.9 459.0,489.9 459.1,488.2 459.2,470.0 459.4,491.0 459.5,474.5 459.6,487.1 459.7,491.6 459.9,490.5 460.0,498.5 460.1,478.8 460.2,476.4 460.4,492.5 460.5,495.2 460.6,510.3 460.7,497.6 460.9,485.4 461.0,501.0 461.1,486.5 461.2,480.5 461.4,512.5 461.5,496.9 461.6,500.9 461.7,500.8 461.9,512.7 462.0,499.4 462.1,508.0 462.2,488.1 462.4,485.7 462.5,511.1 462.6,512.1 462.7,503.3 462.9,501.4 463.0,500.7 463.1,492.4 463.2,513.2 463.4,504.6 463.5,503.3 463.6,503.0 463.7,508.8 463.9,504.0 464.0,507.1 464.1,491.2 464.2,506.6 464.4,521.4 464.5,498.3 464.6,502.6 464.7,512.5 464.9,513.2 465.0,510.1 465.1,489.9 465.2,509.0 465.4,494.4 465.5,497.7 465.6,510.2 465.7,503.7 465.9,514.0 466.0,523.8 466.1,513.6 466.2,512.9 466.4,499.4 466.5,501.7 466.6,498.8 466.7,504.2 466.9,499.2 467.0,502.1 467.1,505.9 467.2,499.9 467.4,496.7 467.5,498.0 467.6,513.4 467.7,510.0 467.9,518.3 468.0,518.3 468.1,508.0 468.2,516.8 468.4,500.6 468.5,527.5 468.6,523.2 468.7,511.8 468.9,504.7 469.0,517.4 469.1,498.7 469.2,507.4 469.4,519.7 469.5,514.9 469.6,510.5 469.7,522.2 469.9,506.3 470.0,517.2 470.1,511.2 470.2,509.0 470.4,519.2 470.5,533.0 470.6,530.3 470.7,510.4 470.9,529.9 471.0,505.3 471.1,517.4 471.2,503.1 471.4,501.3 471.5,512.8 471.6,517.0 471.7,500.9 471.9,520.3 472.0,503.7 472.1,511.8 472.2,513.9 472.4,514.6 472.5,494.4 472.6,521.8 472.7,513.0 472.9,505.0 473.0,499.4 473.1,493.7 473.2,495.1 473.4,511.2 473.5,502.2 473.6,496.1 473.7,501.1 473.9,518.8 474.0,501.6 474.1,499.3 474.2,515.9 474.4,507.7 474.5,504.8 474.6,497.7 474.7,489.0 474.9,492.3 475.0,498.3 475.1,500.5 475.2,506.3 475.4,507.5 475.5,504.5 475.6,503.8 475.7,492.6 475.9,482.0 476.0,496.7 476.1,493.0 476.2,496.1 476.4,498.3 476.5,489.5 476.6,490.9 476.7,499.6 476.9,500.9 477.0,492.4 477.1,503.9 477.2,495.7 477.4,486.9 477.5,497.2 477.6,515.6 477.7,490.9 477.9,508.9 478.0,510.4 478.1,512.9 478.2,490.3 478.4,518.6 478.5,499.9 478.6,496.7 478.7,496.4 478.9,504.3 479.0,499.3 479.1,497.5 479.3,511.6 479.4,493.1 479.5,490.2 479.6,507.1 479.8,506.3 479.9,511.1 480.0,489.2 480.1,510.5 480.3,505.2 480.4,517.3 480.5,487.5 480.6,501.3 480.8,496.9 480.9,484.4 481.0,493.5 481.1,511.1 481.3,495.7 481.4,492.9 481.5,509.6 481.6,510.3 481.8,510.2 481.9,493.5 482.0,501.9 482.1,512.8 482.3,496.4 482.4,495.8 482.5,511.1 482.6,518.3 482.8,491.2 482.9,481.3 483.0,489.6 483.1,494.4 483.3,502.9 483.4,510.1 483.5,503.3 483.6,498.6 483.8,507.4 483.9,496.9 484.0,506.1 484.1,500.7 484.3,527.3 484.4,514.4 484.5,498.8 484.6,497.6 484.8,503.7 484.9,493.5 485.0,501.8 485.1,503.1 485.3,518.5 485.4,506.9 485.5,503.9 485.6,499.5 485.8,501.8 485.9,511.9 486.0,510.8 486.1,522.6 486.3,507.7 486.4,522.6 486.5,516.6 486.6,514.9 486.8,498.9 486.9,505.1 487.0,522.2 487.1,528.4 487.3,519.5 487.4,524.6 487.5,515.3 487.6,517.5 487.8,515.5 487.9,531.3 488.0,526.6 488.1,560.0 488.3,520.2 488.4,528.4 488.5,526.3 488.6,515.6 488.8,539.5 488.9,525.7 489.0,523.8 489.1,537.1 489.3,532.5 489.4,521.8 489.5,528.2 489.6,513.6 489.8,517.6 489.9,501.2 490.0,533.7 490.1,504.6 490.3,528.6 490.4,513.7 490.5,511.6 490.6,519.2 490.8,523.2 490.9,526.6 491.0,537.0 491.1,523.5 491.3,528.7 491.4,513.5 491.5,525.6 491.6,519.5 491.8,512.6 491.9,515.4 492.0,515.5 492.1,518.4 492.3,519.4 492.4,510.4 492.5,508.7 492.6,523.3 492.8,498.3 492.9,508.8 493.0,529.4 493.1,490.0 493.3,507.4 493.4,520.9 493.5,497.8 493.6,530.9 493.8,488.1 493.9,527.6 494.0,527.9 494.1,520.3 494.3,508.6 494.4,513.9 494.5,501.3 494.6,517.5 494.8,498.4 494.9,506.9 495.0,520.4 495.1,498.2 495.3,504.7 495.4,509.5 495.5,493.7 495.6,519.2 495.8,510.7 495.9,492.0 496.0,506.9 496.1,499.9 496.3,500.0 496.4,506.6 496.5,498.7 496.6,515.6 496.8,498.1 496.9,516.1 497.0,505.6 497.1,515.0 497.3,499.8 497.4,499.9 497.5,493.1 497.6,509.8 497.8,513.5 497.9,520.3 498.0,516.8 498.1,506.9 498.3,501.7 498.4,508.0 498.5,502.4 498.6,517.0 498.8,510.8 498.9,491.6 499.0,492.2 499.1,514.3 499.3,504.3 499.4,497.9 499.5,512.9 499.7,495.9 499.8,497.5 499.9,494.6 500.0,478.7 500.2,507.1 500.3,486.3 500.4,492.9 500.5,490.5 500.7,505.8 500.8,496.9 500.9,497.5 501.0,480.7 501.2,495.7 501.3,481.7 501.4,498.9 501.5,498.6 501.7,494.5 501.8,514.3 501.9,499.6 502.0,499.8 502.2,495.1 502.3,491.6 502.4,502.7 502.5,503.9 502.7,479.5 502.8,503.0 502.9,496.2 503.0,500.2 503.2,495.7 503.3,478.8 503.4,479.0 503.5,506.7 503.7,492.7 503.8,477.1 503.9,493.3 504.0,486.9 504.2,473.2 504.3,471.6 504.4,475.5 504.5,493.3 504.7,489.7 504.8,488.2 504.9,493.2 505.0,496.4 505.2,471.5 505.3,488.7 505.4,483.1 505.5,479.2 505.7,485.2 505.8,488.8 505.9,487.9 506.0,477.3 506.2,485.3 506.3,507.9 506.4,478.7 506.5,473.7 506.7,491.9 506.8,495.3 506.9,493.7 507.0,478.9 507.2,498.4 507.3,481.9 507.4,478.5 507.5,483.5 507.7,488.1 507.8,495.3 507.9,493.9 508.0,488.7 508.2,497.7 508.3,488.4 508.4,494.9 508.5,473.3 508.7,471.2 508.8,492.5 508.9,472.3 509.0,482.3 509.2,483.8 509.3,480.2 509.4,479.8 509.5,496.0 509.7,464.1 509.8,490.9 509.9,502.7 510.0,482.3 510.2,481.3 510.3,487.7 510.4,496.5 510.5,469.0 510.7,457.0 510.8,478.7 510.9,486.0 511.0,482.1 511.2,486.8 511.3,477.4 511.4,482.1 511.5,477.3 511.7,478.3 511.8,483.5 511.9,484.5 512.0,476.3 512.2,502.9 512.3,487.6 512.4,476.1 512.5,499.9 512.7,482.4 512.8,495.0 512.9,491.8 513.0,494.4 513.2,494.0 513.3,486.9 513.4,494.6 513.5,515.4 513.7,482.7 513.8,499.3 513.9,502.9 514.0,488.6 514.2,486.0 514.3,520.6 514.4,496.0 514.5,521.2 514.7,506.1 514.8,502.0 514.9,507.7 515.0,509.6 515.2,514.5 515.3,507.3 515.4,505.1 515.5,506.3 515.7,518.3 515.8,513.1 515.9,496.3 516.0,501.0 516.2,511.6 516.3,502.9 516.4,506.5 516.5,502.2 516.7,509.0 516.8,515.6 516.9,522.2 517.0,511.9 517.2,532.4 517.3,511.8 517.4,538.4 517.5,523.3 517.7,519.0 517.8,509.9 517.9,498.1 518.0,514.0 518.2,518.0 518.3,535.9 518.4,504.9 518.5,535.9 518.7,516.1 518.8,524.8 518.9,504.3 519.0,521.4 519.2,518.2 519.3,526.9 519.4,523.3 519.5,514.5 519.7,530.2 519.8,529.1 519.9,528.8 520.0,531.5 520.2,532.7 520.3,526.0 520.8,536.0 521.3,530.0 521.8,552.0 522.4,564.0 M534.4,578.0 535.0,556.0 535.8,535.0 536.6,515.0 537.0,517.5 537.1,525.8 537.3,521.6 537.4,508.7 537.5,500.0 537.6,512.3 537.8,511.0 537.9,523.0 538.0,507.3 538.1,508.5 538.3,518.6 538.4,505.7 538.5,509.4 538.6,529.0 538.8,526.2 538.9,516.5 539.0,512.3 539.1,498.5 539.3,513.7 539.4,508.4 539.5,510.3 539.6,502.5 539.8,508.2 539.9,505.8 540.0,511.1 540.1,522.1 540.3,509.7 540.4,486.6 540.5,493.1 540.6,486.7 540.8,494.9 540.9,509.4 541.0,507.1 541.1,495.8 541.3,504.3 541.4,493.2 541.5,484.8 541.6,483.9 541.8,489.9 541.9,514.7 542.0,482.3 542.1,510.4 542.3,509.0 542.4,491.1 542.5,492.0 542.6,484.2 542.8,490.8 542.9,497.4 543.0,490.3 543.1,500.5 543.3,501.4 543.4,490.1 543.5,489.0 543.6,483.7 543.8,488.2 543.9,470.0 544.0,487.8 544.1,483.9 544.3,471.5 544.4,465.0 544.5,466.9 544.6,467.8 544.8,480.3 544.9,459.2 545.0,468.4 545.1,459.4 545.3,466.1 545.4,475.0 545.5,481.0 545.6,490.9 545.8,486.9 545.9,492.0 546.0,484.8 546.1,472.5 546.3,490.8 546.4,473.1 546.5,472.2 546.6,498.2 546.8,489.1 546.9,482.5 547.0,489.3 547.1,490.4 547.3,464.2 547.4,478.0 547.5,465.7 547.6,481.5 547.8,471.7 547.9,494.4 548.0,485.7 548.1,470.3 548.3,479.6 548.4,465.1 548.5,479.9 548.6,485.8 548.8,482.1 548.9,456.9 549.0,475.7 549.1,485.3 549.3,483.3 549.4,461.0 549.5,464.3 549.6,485.2 549.8,472.2 549.9,482.8 550.0,486.6 550.1,490.6 550.3,476.7 550.4,486.0 550.5,471.7 550.6,469.4 550.8,491.3 550.9,485.6 551.0,468.4 551.1,476.6 551.3,486.8 551.4,503.5 551.5,497.9 551.6,495.7 551.8,468.4 551.9,486.7 552.0,493.0 552.1,494.1 552.3,496.6 552.4,491.3 552.5,515.5 552.6,514.1 552.8,497.9 552.9,491.2 553.0,523.7 553.1,499.4 553.3,519.1 553.4,527.7 553.5,499.9 553.6,514.6 553.8,509.6 553.9,520.8 554.0,520.5 554.1,536.6 554.3,522.0 554.4,516.6 554.5,530.9 554.6,516.9 554.8,516.3 554.9,540.3 555.0,512.3 555.1,515.4 555.3,521.0 555.4,510.6 555.5,500.2 555.6,534.3 555.8,515.1 555.9,518.5 556.0,519.8 556.1,514.5 556.3,514.6 556.4,527.7 556.5,547.2 556.6,535.8 556.8,535.7 556.9,513.2 557.0,529.3 557.1,517.6 557.3,538.4 557.4,526.8 557.5,530.6 557.6,529.4 557.8,525.0 557.9,515.8 558.0,538.3 558.1,517.5 558.3,519.5 558.4,529.1 558.5,524.5 558.6,536.2 558.8,544.0 558.9,535.6 559.0,535.4 559.2,533.7 559.3,544.4 559.4,515.9 559.5,539.9 559.7,525.1 559.8,522.1 559.9,536.7 560.0,533.7 560.2,544.6 560.3,549.7 560.4,515.9 560.5,539.2 560.7,562.7 560.8,550.7 560.9,558.2 561.0,542.5 561.2,525.8 561.3,529.0 561.4,550.4 561.5,553.7 561.7,533.6 561.8,539.2 561.9,546.0 562.0,521.6 562.2,538.1 562.3,561.7 562.4,568.3 562.5,541.9 562.7,564.0 562.8,536.6 562.9,533.2 563.0,524.1 563.2,555.4 563.3,540.8 563.4,573.8 563.5,549.8 563.7,549.1 563.8,526.5 563.9,565.5 564.0,543.9 564.2,546.6 564.3,528.1 564.4,561.0 564.5,562.1 564.7,544.1 564.8,553.3 564.9,557.6 565.0,564.8 565.2,554.8 565.3,574.8 565.4,552.8 565.5,549.0 565.7,550.6 565.8,532.9 565.9,546.8 566.0,569.0 566.2,561.2 566.3,594.5 566.4,561.8 566.5,535.2 566.7,555.4 566.8,565.8 566.9,568.0 567.0,551.5 567.2,573.1 567.3,586.2 567.4,558.7 567.5,572.8 567.7,545.5 567.8,541.8 567.9,572.3 568.0,566.2 568.2,568.3 568.3,559.7 568.4,563.2 568.5,577.3 568.7,589.3 568.8,565.7 568.9,547.7 569.0,584.0 569.2,577.1 569.3,578.8 569.4,572.7 569.5,597.2 569.7,571.5 569.8,576.5 569.9,547.4 570.0,563.4 570.2,561.5 570.3,570.5 570.4,575.7 570.5,562.4 570.7,592.8 570.8,558.4 570.9,566.4 571.0,575.8 571.2,557.7 571.3,580.5 571.4,581.9 571.5,571.2 571.7,597.9 571.8,576.7 571.9,579.4 572.0,565.5 572.2,556.0 572.3,568.2 572.4,571.2 572.5,569.8 572.7,585.0 572.8,556.3 572.9,562.0 573.0,557.4 573.2,592.8 573.3,571.1 573.4,571.4 573.5,566.3 573.7,589.6 573.8,575.0 573.9,583.7 574.0,561.5 574.2,596.1 574.3,587.6 574.4,589.7 574.5,597.6 574.7,582.2 574.8,581.5 574.9,592.1 575.0,588.7 575.2,580.8 575.3,584.2 575.4,578.2 575.5,591.5 575.7,593.9 575.8,583.9 575.9,604.4 576.0,566.9 576.2,581.2 576.3,602.8 576.4,580.2 576.5,568.6 576.7,601.6 576.8,593.2 576.9,575.6 577.0,596.5 577.2,577.7 577.3,575.9 577.4,588.8 577.5,587.1 577.7,581.5 577.8,589.1 577.9,583.9 578.0,595.9 578.2,595.2 578.3,603.2 578.4,591.5 578.5,583.1 578.7,582.1 578.8,593.5 578.9,611.0 579.0,604.3 579.2,588.8 579.3,604.9 579.4,583.0 579.5,605.0 579.7,591.2 579.8,603.4 579.9,602.9 580.0,594.0 580.2,600.4 580.3,587.6 580.4,597.6 580.5,608.9 580.7,611.0 580.8,605.4 580.9,598.9 581.0,587.9 581.2,608.8 581.3,581.4 581.4,589.6 581.6,600.7 581.7,584.7 581.8,611.2 581.9,607.3 582.1,590.2 582.2,590.4 582.3,581.6 582.4,579.3 582.6,596.3 582.7,598.0 582.8,594.3 582.9,594.0 583.1,586.0 583.2,594.8 583.3,577.3 583.4,592.5 583.6,606.8 583.7,606.1 583.8,589.0 583.9,589.8 584.1,606.6 584.2,610.8 584.3,578.2 584.4,588.4 584.6,596.0 584.7,605.4 584.8,584.8 584.9,598.3 585.1,588.7 585.2,611.8 585.3,594.8 585.4,588.3 585.6,585.9 585.7,599.1 585.8,595.4 585.9,578.9 586.1,592.3 586.2,578.0 586.3,584.0 586.4,579.2 586.6,578.2 586.7,584.5 586.8,580.8 586.9,595.5 587.1,598.5 587.2,588.7 587.3,580.6 587.4,600.1 587.6,572.6 587.7,574.1 587.8,599.6 587.9,600.1 588.1,603.9 588.2,591.4 588.3,581.2 588.4,587.9 588.6,597.7 588.7,583.8 588.8,583.6 588.9,576.7 589.1,579.4 589.2,598.6 589.3,594.9 589.4,578.9 589.6,580.6 589.7,584.4 589.8,595.5 589.9,578.5 590.1,588.4 590.2,571.2 590.3,576.7 590.4,594.2 590.6,599.5 590.7,580.0 590.8,584.9 590.9,600.3 591.1,588.0 591.2,586.2 591.3,596.4 591.4,593.3 591.6,602.5 591.7,599.8 591.8,586.5 591.9,592.4 592.1,592.3 592.2,578.9 592.3,582.4 592.4,601.0 592.6,575.3 592.7,601.6 592.8,594.5 592.9,590.5 593.1,596.6 593.2,594.7 593.3,602.1 593.4,585.8 593.6,587.2 593.7,587.2 593.8,608.7 593.9,599.6 594.1,581.1 594.2,587.7 594.3,584.7 594.4,591.5 594.6,594.0 594.7,613.9 594.8,573.8 594.9,601.9 595.1,596.0 595.2,585.8 595.3,591.7 595.4,589.0 595.6,593.7 595.7,603.0 595.8,578.7 595.9,606.0 596.1,590.0 596.2,607.1 596.3,596.6 596.4,604.7 596.6,598.8 596.7,603.9 596.8,593.3 596.9,584.8 597.1,599.0 597.2,599.5 597.3,613.1 597.4,575.4 597.6,591.9 597.7,605.4 597.8,582.1 597.9,593.6 598.1,616.3 598.2,615.0 598.3,587.1 598.4,610.3 598.6,608.7 598.7,605.3 598.8,601.4 598.9,599.9 599.1,588.9 599.2,591.6 599.3,603.2 599.4,597.5 599.6,614.5 599.7,593.1 599.8,574.2 599.9,593.9 600.1,600.2 600.2,601.5 600.3,597.4 600.4,587.9 600.6,610.4 600.7,589.2 600.8,602.6 600.9,592.1 601.1,583.2 601.2,608.4 601.3,572.6 601.4,587.4 601.6,599.5 601.7,590.9 601.8,601.8 601.9,593.3 602.1,590.0 602.2,613.7 602.3,592.8 602.4,593.5 602.6,584.3 602.7,587.0 602.8,599.9 602.9,599.7 603.1,593.2 603.2,586.7 603.3,600.1 603.5,577.6 603.6,590.5 603.7,591.2 603.8,584.3 604.0,593.6 604.1,585.6 604.2,584.8 604.3,610.6 604.5,599.8 604.6,604.2 604.7,593.1 604.8,601.7 605.0,599.7 605.1,602.5 605.2,609.3 605.3,588.8 605.5,593.4 605.6,590.4 605.7,568.0 605.8,578.2 606.0,591.2 606.1,596.5 606.2,584.8 606.3,600.0 606.5,600.2 606.6,583.7 606.7,600.5 606.8,603.3 607.0,590.7 607.1,577.8 607.2,599.9 607.3,584.9 607.5,582.2 607.6,586.9 607.7,580.6 607.8,595.7 608.0,593.4 608.1,595.7 608.2,589.2 608.3,576.3 608.5,582.0 608.6,590.3 608.7,578.7 608.8,603.8 609.0,580.2 609.1,577.2 609.2,592.8 609.3,588.1 609.5,581.1 609.6,579.1 609.7,584.0 609.8,587.4 610.0,586.7 610.1,576.6 610.2,584.1 610.3,587.0 610.5,586.7 610.6,564.1 610.7,572.4 610.8,573.3 611.0,578.0 611.1,581.8 611.2,588.2 611.3,585.4 611.5,580.0 611.6,581.5 611.7,597.1 611.8,576.4 612.0,584.5 612.1,595.5 612.2,584.5 612.3,564.1 612.5,585.5 612.6,578.7 612.7,581.3 612.8,590.5 613.0,585.3 613.1,578.8 613.2,590.2 613.3,586.7 613.5,584.3 613.6,585.8 613.7,586.2 613.8,580.7 614.0,580.3 614.1,584.3 614.2,576.3 614.3,573.9 614.5,595.9 614.6,582.4 614.7,584.5 614.8,583.5 615.0,584.5 615.1,584.7 615.2,584.8 615.3,577.4 615.5,592.2 615.6,577.9 615.7,592.1 615.8,567.6 616.0,574.6 616.1,591.2 616.2,581.5 616.3,577.8 616.5,586.8 616.6,574.6 616.7,584.5 616.8,564.9 617.0,579.0 617.1,577.5 617.2,587.8 617.3,590.5 617.5,575.8 617.6,596.6 617.7,578.4 617.8,565.9 618.0,563.6 618.1,595.6 618.2,581.6 618.3,576.3 618.5,575.4 618.6,571.7 618.7,592.0 618.8,579.2 619.0,594.7 619.1,577.2 619.2,559.6 619.3,586.2 619.5,575.8 619.6,576.8 619.7,592.1 619.8,576.5 620.0,589.4 620.1,579.1 620.2,572.4 620.3,583.5 620.5,574.0 620.6,589.0 620.7,586.7 620.8,579.3 621.0,583.5 621.1,582.4 621.2,575.2 621.3,584.4 621.5,574.8 621.6,580.9 621.7,568.0 621.8,576.4 622.0,578.6 622.1,569.0 622.2,571.4 622.3,570.1 622.5,580.7 622.6,568.6 622.7,577.6 622.8,585.7 623.0,576.0 623.1,560.9 623.2,574.6 623.3,582.2 623.5,572.1 623.6,582.0 623.7,577.8 623.8,576.0 624.0,571.1 624.1,568.9 624.2,570.6 624.3,572.8 624.5,576.0 624.6,575.0 624.7,569.2 624.8,572.1 625.0,574.1 625.1,559.0 625.2,565.9 625.4,565.3 625.5,569.6 625.6,568.7 625.7,568.4 625.9,563.8 626.0,574.2 626.1,571.0 626.2,557.9 626.4,569.4 626.5,561.6 626.6,581.2 626.7,566.6 626.9,566.3 627.0,569.1 627.1,566.8 627.2,567.4 627.4,578.8 627.5,569.1 627.6,573.1 627.7,575.0 627.9,559.6 628.0,578.6 628.1,571.1 628.2,572.2 628.4,559.6 628.5,571.2 628.6,567.6 628.7,560.5 628.9,579.7 629.0,568.5 629.1,561.4 629.2,564.3 629.4,569.4 629.5,570.4 629.6,565.8 629.7,570.6 629.9,572.8 630.0,552.1 630.1,558.0 630.2,554.3 630.4,561.5 630.5,572.3 630.6,565.7 630.7,552.5 630.9,558.1 631.0,567.7 631.1,555.7 631.2,559.0 631.4,561.9 631.5,545.8 631.6,565.1 631.7,562.1 631.9,562.7 632.0,550.9 632.1,552.5 632.2,554.0 632.4,560.5 632.5,558.8 632.6,558.9 632.7,570.9 632.9,566.6 633.0,550.6 633.1,550.6 633.2,568.5 633.4,551.9 633.5,564.5 633.6,565.6 633.7,548.5 633.9,551.0 634.0,553.5 634.1,545.5 634.2,544.6 634.4,548.1 634.5,557.7 634.6,546.5 634.7,548.1 634.9,544.7 635.0,536.7 635.1,559.4 635.2,531.5 635.4,540.2 635.5,549.8 635.6,531.9 635.7,548.5 635.9,553.8 636.0,536.5 636.1,545.6 636.2,534.8 636.4,548.1 636.5,543.6 636.6,544.1 636.7,553.2 636.9,544.2 637.0,552.0 637.1,544.4 637.2,528.2 637.4,540.3 637.5,541.7 637.6,523.9 637.7,547.4 637.9,535.9 638.0,537.8 638.1,525.8 638.2,533.7 638.4,535.3 638.5,529.6 638.6,532.5 638.7,515.9 638.9,542.7 639.0,519.9 639.1,514.0 639.2,520.4 639.4,513.0 639.5,534.7 639.6,521.8 639.7,534.3 639.9,524.0 640.0,555.7 640.1,540.3 640.2,555.3 640.4,526.5 640.5,543.0 640.6,527.9 640.7,544.3 640.9,545.3 641.0,522.1 641.1,527.4 641.2,526.6 641.4,522.9 641.5,532.5 641.6,530.9 641.7,526.2 641.9,543.9 642.0,549.6 642.1,529.8 642.2,539.0 642.4,545.3 642.5,543.0 642.6,537.9 642.7,556.6 642.9,557.0 643.0,555.6 643.1,546.6 643.2,572.8 643.4,571.3 643.5,547.4 643.6,552.0 643.7,568.3 643.9,545.3 644.0,560.8 644.1,556.8 644.2,548.2 644.4,554.1 644.5,538.6 644.6,551.4 644.7,537.0 644.9,586.6 645.0,577.6 645.1,573.5 645.2,563.8 645.4,574.0 645.5,579.4 645.6,577.3 645.7,576.3 645.9,554.3 646.0,572.2 646.1,561.3 646.2,552.7 646.4,554.2 646.5,574.5 646.6,581.4 646.7,550.0 646.9,589.2 647.0,585.7 647.1,562.7 647.2,560.7 647.4,566.9 647.5,580.9 647.6,564.5 647.8,554.7 647.9,572.6 648.0,543.4 648.1,570.9 648.3,583.1 648.4,572.6 648.5,577.6 648.6,573.6 648.8,575.9 648.9,568.7 649.0,556.7 649.1,563.6 649.3,565.9 649.4,583.5 649.5,588.6 649.6,572.7 649.8,558.9 649.9,559.5 650.0,566.7 650.1,586.9 650.3,573.6 650.4,568.7 650.5,558.8 650.6,579.4 650.8,572.2 650.9,567.6 651.0,569.0 651.1,588.5 651.3,565.9 651.4,589.3 651.5,582.9 651.6,569.1 651.8,579.5 651.9,568.0 652.0,559.4 652.1,565.5 652.3,558.4 652.4,576.1 652.5,569.4 652.6,575.4 652.8,578.4 652.9,546.2 653.0,572.6 653.1,547.1 653.3,570.2 653.4,558.6 653.5,569.7 653.6,585.6 653.8,551.1 653.9,572.9 654.0,570.4 654.1,549.7 654.3,579.3 654.4,571.7 654.5,565.7 654.6,563.0 654.8,596.3 654.9,567.3 655.0,551.3 655.1,561.4 655.3,567.5 655.4,568.7 655.5,571.1 655.6,560.0 655.8,576.8 655.9,564.1 656.0,553.8 656.1,559.9 656.3,565.1 656.4,578.5 656.5,572.8 656.6,563.5 656.8,565.7 656.9,566.7 657.0,588.2 657.1,557.4 657.3,569.4 657.4,570.7 657.5,550.3 657.6,563.6 657.8,563.0 657.9,554.5 658.0,566.8 658.1,570.7 658.3,572.2 658.4,556.1 658.5,559.6 658.6,584.2 658.8,541.4 658.9,555.6 659.0,563.7 659.1,553.3 659.3,559.0 659.4,552.4 659.5,559.2 659.6,563.5 659.8,543.6 659.9,548.8 660.0,546.8 660.1,541.3 660.3,545.4 660.4,530.8 660.5,553.3 660.6,564.6 660.8,564.8 660.9,558.1 661.0,530.4 661.1,561.4 661.3,533.5 661.4,539.9 661.5,562.4 661.6,526.8 661.8,549.9 661.9,543.9 662.0,538.1 662.1,528.2 662.3,543.6 662.4,532.6 662.5,550.6 662.6,552.0 662.8,520.2 662.9,531.0 663.0,532.6 663.1,521.7 663.3,522.7 663.4,535.8 663.5,531.6 663.6,514.1 663.8,527.3 663.9,539.5 664.0,518.0 664.1,520.2 664.3,548.9 664.4,545.0 664.5,510.0 664.6,512.5 664.8,533.2 664.9,514.6 665.0,524.2 665.1,520.4 665.3,532.1 665.4,500.7 665.5,500.3 665.6,510.9 665.8,536.1 665.9,521.4 666.0,503.9 666.1,528.3 666.3,529.8 666.4,517.4 666.5,515.4 666.6,522.8 666.8,530.8 666.9,518.4 667.0,521.8 667.1,515.3 667.3,511.5 667.4,504.3 667.5,516.9 667.6,510.3 667.8,510.7 667.9,523.0 668.0,517.0 668.1,519.8 668.3,493.0 668.4,516.2 668.5,503.6 668.6,501.0 668.8,500.5 668.9,521.7 669.0,516.6 669.1,500.5 669.3,487.0 669.4,506.7" fill="none" stroke="#000" stroke-width="1.2" stroke-linejoin="miter" stroke-miterlimit="2"/>
</g>
<text x="261.2" y="652.6" font-size="16.6" fill="#000" text-anchor="end" textLength="46.1" lengthAdjust="spacingAndGlyphs">00:00</text>
<text x="476.6" y="652.6" font-size="16.6" fill="#000" text-anchor="end" textLength="46.1" lengthAdjust="spacingAndGlyphs">12:00</text>
<text x="693.2" y="652.6" font-size="16.6" fill="#000" text-anchor="end" textLength="46.1" lengthAdjust="spacingAndGlyphs">00:00</text>
<text x="261.2" y="672.8" font-size="16.6" fill="#000" text-anchor="end" textLength="46.1" lengthAdjust="spacingAndGlyphs">4.225</text>
<text x="476.6" y="672.8" font-size="16.6" fill="#000" text-anchor="end" textLength="46.1" lengthAdjust="spacingAndGlyphs">5.756</text>
<text x="693.2" y="672.8" font-size="16.6" fill="#000" text-anchor="end" textLength="46.1" lengthAdjust="spacingAndGlyphs">3.179</text>
<text x="261.2" y="692.8" font-size="16.6" fill="#000" text-anchor="end" textLength="62.2" lengthAdjust="spacingAndGlyphs">-10.580</text>
<text x="476.6" y="692.8" font-size="16.6" fill="#000" text-anchor="end" textLength="52.0" lengthAdjust="spacingAndGlyphs">-1.544</text>
<text x="693.2" y="692.8" font-size="16.6" fill="#000" text-anchor="end" textLength="62.2" lengthAdjust="spacingAndGlyphs">-16.190</text>
<text x="261.2" y="712.7" font-size="16.6" fill="#000" text-anchor="end" textLength="46.1" lengthAdjust="spacingAndGlyphs">2.247</text>
<text x="476.6" y="712.7" font-size="16.6" fill="#000" text-anchor="end" textLength="46.1" lengthAdjust="spacingAndGlyphs">5.398</text>
<text x="693.2" y="712.7" font-size="16.6" fill="#000" text-anchor="end" textLength="46.1" lengthAdjust="spacingAndGlyphs">8.125</text>
<text x="261.2" y="732.5" font-size="16.6" fill="#000" text-anchor="end" textLength="46.1" lengthAdjust="spacingAndGlyphs">4.373</text>
<text x="476.6" y="732.5" font-size="16.6" fill="#000" text-anchor="end" textLength="46.1" lengthAdjust="spacingAndGlyphs">5.760</text>
<text x="693.2" y="732.5" font-size="16.6" fill="#000" text-anchor="end" textLength="46.1" lengthAdjust="spacingAndGlyphs">3.447</text>
<text x="156.6" y="672.8" font-size="16.6" fill="#000" text-anchor="start" textLength="11.4" lengthAdjust="spacingAndGlyphs">R</text>
<text x="168.2" y="676.6" font-size="8.4" fill="#000" text-anchor="start" textLength="6.2" lengthAdjust="spacingAndGlyphs">E</text>
<text x="174.6" y="692.8" font-size="16.6" fill="#000" text-anchor="end" textLength="37.2" lengthAdjust="spacingAndGlyphs">MLat</text>
<text x="175.2" y="712.7" font-size="16.6" fill="#000" text-anchor="end" textLength="31.2" lengthAdjust="spacingAndGlyphs">MLT</text>
<text x="174.6" y="732.5" font-size="16.6" fill="#000" text-anchor="end" textLength="9" lengthAdjust="spacingAndGlyphs">L</text>
<text x="252.0" y="756.2" font-size="16.6" fill="#000" text-anchor="start" textLength="404.0" lengthAdjust="spacingAndGlyphs">2012-12-01 (336) 23:00 to 2012-12-03 (338) 01:00</text>
</g>
<path d="M798.9 442.2L822.6 456.4L815.8 460.9L825.3 478.7L818.4 483.0L807.8 466.6L799.6 470.2Z" fill="#000" opacity="0.18" transform="translate(1,1.4)" stroke="#000" stroke-width="4.6" stroke-linejoin="round" filter="url(#b1)"/>
<path d="M798.9 442.2L822.6 456.4L815.8 460.9L825.3 478.7L818.4 483.0L807.8 466.6L799.6 470.2Z" fill="url(#gCur)" stroke="#141414" stroke-width="3.6" stroke-linejoin="round"/>
</svg>
</body></html>
